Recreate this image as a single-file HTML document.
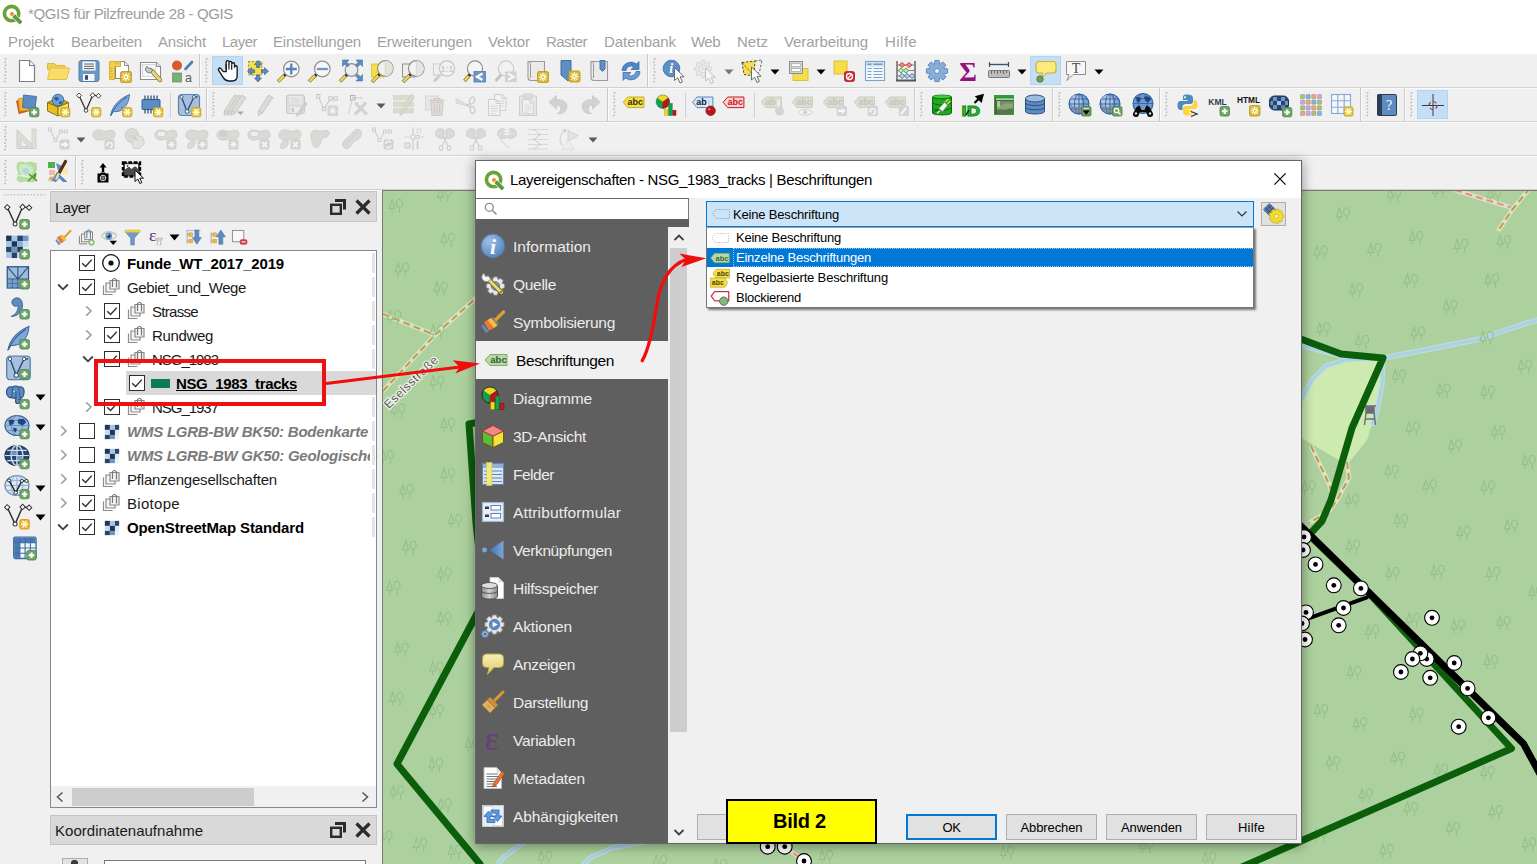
<!DOCTYPE html>
<html><head><meta charset="utf-8"><title>QGIS</title>
<style>
html,body{margin:0;padding:0;}
html{width:1537px;height:864px;overflow:hidden;}
body{width:1537px;height:864px;overflow:hidden;background:#f0f0f0;position:relative;font-family:"Liberation Sans",sans-serif;}
.b{position:absolute;box-sizing:border-box;display:block;}
.t{position:absolute;white-space:nowrap;display:block;}
</style></head><body>
<div class="b" style="left:0px;top:0px;width:1537px;height:54px;background:#ffffff;"></div>
<svg class="b" style="left:2px;top:4px;overflow:visible;" width="20" height="20" viewBox="0 0 24 24"><defs><linearGradient id="qg" x1="0" y1="0" x2="0" y2="1"><stop offset="0" stop-color="#7aad3a"/><stop offset="1" stop-color="#4f9a3a"/></linearGradient></defs><circle cx="11.500" cy="11.500" r="8.600" fill="none" stroke="#6aa336" stroke-width="4.400"/><circle cx="12" cy="12" r="2.400" fill="#ee8a2e"/><path d="M13.500 13.500L22.500 22.500" stroke="#f2f9ea" stroke-width="6.200"/><path d="M14 14L23 23" stroke="#5b9a3c" stroke-width="4.400"/></svg>
<span class="t" style="left:28px;top:4px;font-size:15px;line-height:20px;color:#9b9b9b;letter-spacing:-0.352px;">*QGIS für Pilzfreunde 28 - QGIS</span>
<span class="t" style="left:8px;top:31.5px;font-size:15px;line-height:20px;color:#a1a1a1;letter-spacing:-0.098px;">Projekt</span>
<span class="t" style="left:71px;top:31.5px;font-size:15px;line-height:20px;color:#a1a1a1;letter-spacing:-0.155px;">Bearbeiten</span>
<span class="t" style="left:158px;top:31.5px;font-size:15px;line-height:20px;color:#a1a1a1;letter-spacing:-0.170px;">Ansicht</span>
<span class="t" style="left:222px;top:31.5px;font-size:15px;line-height:20px;color:#a1a1a1;letter-spacing:-0.504px;">Layer</span>
<span class="t" style="left:273px;top:31.5px;font-size:15px;line-height:20px;color:#a1a1a1;letter-spacing:-0.159px;">Einstellungen</span>
<span class="t" style="left:377px;top:31.5px;font-size:15px;line-height:20px;color:#a1a1a1;letter-spacing:-0.133px;">Erweiterungen</span>
<span class="t" style="left:488px;top:31.5px;font-size:15px;line-height:20px;color:#a1a1a1;letter-spacing:-0.088px;">Vektor</span>
<span class="t" style="left:546px;top:31.5px;font-size:15px;line-height:20px;color:#a1a1a1;letter-spacing:-0.530px;">Raster</span>
<span class="t" style="left:604px;top:31.5px;font-size:15px;line-height:20px;color:#a1a1a1;letter-spacing:-0.061px;">Datenbank</span>
<span class="t" style="left:691px;top:31.5px;font-size:15px;line-height:20px;color:#a1a1a1;letter-spacing:-0.523px;">Web</span>
<span class="t" style="left:737px;top:31.5px;font-size:15px;line-height:20px;color:#a1a1a1;letter-spacing:0.040px;">Netz</span>
<span class="t" style="left:784px;top:31.5px;font-size:15px;line-height:20px;color:#a1a1a1;letter-spacing:-0.089px;">Verarbeitung</span>
<span class="t" style="left:885px;top:31.5px;font-size:15px;line-height:20px;color:#a1a1a1;letter-spacing:0.399px;">Hilfe</span>
<div class="b" style="left:0px;top:54px;width:1537px;height:136px;background:#f0f0f0;"></div>
<div class="b" style="left:0px;top:87px;width:1537px;height:1px;background:#d0d0d0;"></div>
<div class="b" style="left:0px;top:88px;width:1537px;height:1px;background:#fafafa;"></div>
<div class="b" style="left:0px;top:121px;width:1537px;height:1px;background:#d0d0d0;"></div>
<div class="b" style="left:0px;top:122px;width:1537px;height:1px;background:#fafafa;"></div>
<div class="b" style="left:0px;top:155px;width:1537px;height:1px;background:#d0d0d0;"></div>
<div class="b" style="left:0px;top:156px;width:1537px;height:1px;background:#fafafa;"></div>
<div class="b" style="left:0px;top:189px;width:1537px;height:1px;background:#d0d0d0;"></div>
<div class="b" style="left:0px;top:190px;width:1537px;height:1px;background:#fafafa;"></div>
<svg class="b" style="left:3px;top:57px;" width="5" height="27" viewBox="0 0 5 27"><rect x="1.8" y="1" width="1.6" height="1.6" fill="#b9b9b9"/><rect x="1.2" y="4.25" width="1.6" height="1.6" fill="#b9b9b9"/><rect x="1.8" y="7.5" width="1.6" height="1.6" fill="#b9b9b9"/><rect x="1.2" y="10.75" width="1.6" height="1.6" fill="#b9b9b9"/><rect x="1.8" y="14" width="1.6" height="1.6" fill="#b9b9b9"/><rect x="1.2" y="17.25" width="1.6" height="1.6" fill="#b9b9b9"/><rect x="1.8" y="20.5" width="1.6" height="1.6" fill="#b9b9b9"/><rect x="1.2" y="23.75" width="1.6" height="1.6" fill="#b9b9b9"/></svg>
<svg class="b" style="left:15px;top:59px;overflow:visible;" width="24" height="24" viewBox="0 0 24 24"><path d="M4.5 1.5h10l5 5v16h-15z" fill="#fff" stroke="#7d7d7d" stroke-width="1.2" stroke-linejoin="round"/><path d="M14.5 1.5v5h5" fill="#f4f4f4" stroke="#7d7d7d" stroke-width="1.1" stroke-linejoin="round"/></svg>
<svg class="b" style="left:46px;top:59px;overflow:visible;" width="24" height="24" viewBox="0 0 24 24"><path d="M1.5 4.5h7l1.5 2h9v4h-17.5z" fill="#f3cf52" stroke="#dcb83c" stroke-width="1"/><path d="M1.5 20.5L4 9h19.5L20.5 20.5z" fill="#f9dc6a" stroke="#e3c044" stroke-width="1" stroke-linejoin="round"/></svg>
<svg class="b" style="left:77px;top:59px;overflow:visible;" width="24" height="24" viewBox="0 0 24 24"><rect x="2" y="1.5" width="20" height="21" rx="2.2" fill="#6c97c5" stroke="#4f7cae" stroke-width="1"/><rect x="5.5" y="2.5" width="13" height="9" fill="#fdfdfd"/><path d="M7 5h10M7 7.3h10M7 9.6h10" stroke="#555" stroke-width="1"/><rect x="6" y="15" width="11.5" height="7" fill="#f4f6f9"/><rect x="8" y="16.2" width="3" height="4.6" fill="#2f4f78"/></svg>
<svg class="b" style="left:108px;top:59px;overflow:visible;" width="24" height="24" viewBox="0 0 24 24"><path d="M7.5 2.5h9l4 4v13h-13z" fill="#fff" stroke="#8a8a8a" stroke-width="1.1"/><path d="M16.5 2.5v4h4" fill="#eee" stroke="#8a8a8a" stroke-width="1"/><path d="M1.5 2.5h11v5h-6v13h-5z" fill="#f5d14e" stroke="#d6b02f" stroke-width="1"/><path d="M2.5 9h2M2.5 12h2M2.5 15h2M2.5 18h2M8 3.5v2M10.5 3.5v2" stroke="#b8941f" stroke-width="0.8"/><rect x="12.5" y="12.5" width="11" height="11" rx="1.6" fill="#d9b634" stroke="#c09c1e" stroke-width="0.9"/><path d="M14.04 18.00L21.96 18.00M15.20 15.20L20.80 20.80M18.00 14.04L18.00 21.96M20.80 15.20L15.20 20.80" stroke="#fffbe6" stroke-width="1.2" stroke-linecap="round"/><circle cx="18" cy="18" r="2.20" fill="#fffbe6"/><circle cx="18" cy="18" r="0.99" fill="#d9b634"/></svg>
<svg class="b" style="left:139px;top:59px;overflow:visible;" width="24" height="24" viewBox="0 0 24 24"><path d="M1.5 3.5h16l4 4v13h-20z" fill="#fff" stroke="#8a8a8a" stroke-width="1.1"/><path d="M17.5 3.5v4h4" fill="#eee" stroke="#8a8a8a" stroke-width="1"/><rect x="3.5" y="5.5" width="13" height="12" fill="#f3f5f8" stroke="#c9d1dc" stroke-width="0.8"/><path d="M13 12L21 21" stroke="#8c7a2a" stroke-width="4.4" stroke-linecap="round"/><path d="M13 12L21 21" stroke="#ead58a" stroke-width="2.8" stroke-linecap="round"/><path d="M8.2 7.2a3.6 3.6 0 1 0 5.2 4.6l-1.2-2.6l-2.6 .3z" fill="#c9c9c9" stroke="#7a7a7a" stroke-width="1"/></svg>
<svg class="b" style="left:170px;top:59px;overflow:visible;" width="24" height="24" viewBox="0 0 24 24"><circle cx="7" cy="6.500" r="5" fill="#d8592c"/><path d="M15.500 10L22 3" stroke="#4f7fb0" stroke-width="2.600" stroke-linecap="round"/><rect x="2.500" y="14" width="9" height="9" fill="#7bae77" stroke="#679c63" stroke-width="0.800"/><text x="18.500" y="23" style="font-family:'Liberation Sans',sans-serif" font-size="12.500" text-anchor="middle" fill="#5a5a5a">a</text></svg>
<div class="b" style="left:199px;top:54px;width:1px;height:33px;background:#c8c8c8;"></div>
<div class="b" style="left:200px;top:54px;width:1px;height:33px;background:#fbfbfb;"></div>
<svg class="b" style="left:204px;top:57px;" width="5" height="27" viewBox="0 0 5 27"><rect x="1.8" y="1" width="1.6" height="1.6" fill="#b9b9b9"/><rect x="1.2" y="4.25" width="1.6" height="1.6" fill="#b9b9b9"/><rect x="1.8" y="7.5" width="1.6" height="1.6" fill="#b9b9b9"/><rect x="1.2" y="10.75" width="1.6" height="1.6" fill="#b9b9b9"/><rect x="1.8" y="14" width="1.6" height="1.6" fill="#b9b9b9"/><rect x="1.2" y="17.25" width="1.6" height="1.6" fill="#b9b9b9"/><rect x="1.8" y="20.5" width="1.6" height="1.6" fill="#b9b9b9"/><rect x="1.2" y="23.75" width="1.6" height="1.6" fill="#b9b9b9"/></svg>
<div class="b" style="left:212px;top:56px;width:31px;height:29px;background:#c3def5;border:1px solid #b4d5f1;"></div>
<svg class="b" style="left:215.5px;top:59px;overflow:visible;" width="24" height="24" viewBox="0 0 24 24"><g transform="translate(-0.600 -2.200) scale(1.100)"><path d="M7.2 13.5L5 10.8c-1-1.3-2.9 0-2 1.6l4 6.4c1.2 2 2.6 3.2 5 3.2h3.2c3 0 4.6-2.2 4.6-5V9.400c0-1.700-2.400-1.700-2.400 0V6.800c0-1.800-2.500-1.800-2.500 0V5.500c0-1.800-2.500-1.800-2.500 0V6.600V4.800c0-1.800-2.600-1.800-2.600 0V13.500z" fill="#fff" stroke="#1a1a1a" stroke-width="1.25" stroke-linejoin="round"/><path d="M9.800 6.500V11.500M12.300 6.500V11.500M14.800 7.500V11.800" stroke="#1a1a1a" stroke-width="1.1"/></g></svg>
<svg class="b" style="left:246px;top:59px;overflow:visible;" width="24" height="24" viewBox="0 0 24 24"><rect x="2.500" y="2.500" width="13.500" height="13.500" fill="#f6de4a" stroke="#6a6a3a" stroke-width="0.700" stroke-dasharray="2 1.500"/><g fill="#5b8cc0" stroke="#3c5f8a" stroke-width="0.700"><path d="M12 1.500L15.500 5.500H13.400V8.500H10.600V5.500H8.500z"/><path d="M12 23L15.500 19H13.400V16H10.600V19H8.500z"/><path d="M1.500 12.200L5.500 8.700V10.800H8.500V13.600H5.500V15.700z"/><path d="M22.500 12.200L18.500 8.700V10.800H15.500V13.600H18.500V15.700z"/></g></svg>
<svg class="b" style="left:277px;top:59px;overflow:visible;" width="24" height="24" viewBox="0 0 24 24"><path d="M7.74 16.16L1.00 22.50" stroke="#8f7f38" stroke-width="3.600"/><path d="M7.30 16.57L1.44 22.09" stroke="#efd75e" stroke-width="2.200"/><circle cx="8.11" cy="15.82" r="1.500" fill="#222"/><circle cx="14.3" cy="10" r="7.8" fill="#f7f7f7" stroke="#909090" stroke-width="1.200"/><path d="M8.800 10H19.800M14.300 4.500V15.500" stroke="#5584bb" stroke-width="2.300"/></svg>
<svg class="b" style="left:308px;top:59px;overflow:visible;" width="24" height="24" viewBox="0 0 24 24"><path d="M7.74 16.16L1.00 22.50" stroke="#8f7f38" stroke-width="3.600"/><path d="M7.30 16.57L1.44 22.09" stroke="#efd75e" stroke-width="2.200"/><circle cx="8.11" cy="15.82" r="1.500" fill="#222"/><circle cx="14.3" cy="10" r="7.8" fill="#f7f7f7" stroke="#909090" stroke-width="1.200"/><path d="M8.800 10H19.800" stroke="#6d97c4" stroke-width="2.300"/></svg>
<svg class="b" style="left:339px;top:59px;overflow:visible;" width="24" height="24" viewBox="0 0 24 24"><path d="M7.20 16.30L1.00 22.50" stroke="#8f7f38" stroke-width="3.600"/><path d="M6.77 16.73L1.42 22.08" stroke="#efd75e" stroke-width="2.200"/><circle cx="7.55" cy="15.95" r="1.500" fill="#222"/><circle cx="12.5" cy="11" r="6.3" fill="#ececec" stroke="#909090" stroke-width="1.200"/><g fill="#5b8cc0" stroke="#4373a8" stroke-width="0.600"><path d="M3.500 1H10L7.800 3.200L10.500 6L8.500 8L5.700 5.200L3.500 7.500z"/><path d="M23.500 1H17L19.200 3.200L16.500 6L18.500 8L21.300 5.200L23.500 7.500z"/><path d="M23.500 22H17L19.200 19.800L16.500 17L18.500 15L21.300 17.800L23.500 15.500z"/></g></svg>
<svg class="b" style="left:370px;top:59px;overflow:visible;" width="24" height="24" viewBox="0 0 24 24"><rect x="1.500" y="5" width="12" height="13" fill="#f6de4a" stroke="#dcc132" stroke-width="0.800"/><path d="M8.98 15.91L2.00 23.00" stroke="#8f7f38" stroke-width="3.600"/><path d="M8.56 16.34L2.42 22.57" stroke="#efd75e" stroke-width="2.200"/><circle cx="9.33" cy="15.56" r="1.500" fill="#222"/><circle cx="15.3" cy="9.5" r="7.8" fill="#f1f1ea" stroke="#909090" stroke-width="1.200"/><path d="M15.300 1.800a7.700 7.700 0 0 1 0 15.400z" fill="#e4e4d4"/><path d="M15.300 1.800V17.200" stroke="#d2d2c2" stroke-width="0.800"/></svg>
<svg class="b" style="left:401px;top:59px;overflow:visible;" width="24" height="24" viewBox="0 0 24 24"><rect x="1.500" y="5" width="12" height="13" fill="#ededed" stroke="#8e8e8e" stroke-width="1"/><path d="M8.98 15.91L2.00 23.00" stroke="#8f7f38" stroke-width="3.600"/><path d="M8.56 16.34L2.42 22.57" stroke="#efd75e" stroke-width="2.200"/><circle cx="9.33" cy="15.56" r="1.500" fill="#222"/><circle cx="15.3" cy="9.5" r="7.8" fill="#f3f3f3" stroke="#909090" stroke-width="1.200"/><path d="M15.300 1.800a7.700 7.700 0 0 1 0 15.400z" fill="#e4e4e4"/><path d="M15.300 1.800V17.200" stroke="#cfcfcf" stroke-width="0.800"/></svg>
<svg class="b" style="left:432px;top:59px;overflow:visible;" width="24" height="24" viewBox="0 0 24 24"><g opacity="0.500"><rect x="1.500" y="5" width="10" height="11" fill="#eee" stroke="#aaa" stroke-width="1"/><path d="M2 22.500L8 16" stroke="#aaa" stroke-width="3"/><circle cx="15" cy="9.500" r="7.600" fill="#f4f4f4" stroke="#999" stroke-width="1.200"/><text x="15" y="13" font-family="Liberation Sans" font-weight="bold" font-size="9" text-anchor="middle" fill="#aaa">1:1</text></g></svg>
<svg class="b" style="left:463px;top:59px;overflow:visible;" width="24" height="24" viewBox="0 0 24 24"><path d="M6.34 16.24L1.50 22.00" stroke="#8f7f38" stroke-width="3.600"/><path d="M5.95 16.70L1.89 21.54" stroke="#efd75e" stroke-width="2.200"/><circle cx="6.66" cy="15.86" r="1.500" fill="#222"/><circle cx="12" cy="9.5" r="7.6" fill="#f4f4f4" stroke="#909090" stroke-width="1.200"/><rect x="11" y="12.500" width="11.500" height="10.500" fill="#6d97c4" stroke="#4f7cae" stroke-width="0.800"/><path d="M19.500 14.500L14 17.750L19.500 21" fill="none" stroke="#fff" stroke-width="2.200"/></svg>
<svg class="b" style="left:494px;top:59px;overflow:visible;" width="24" height="24" viewBox="0 0 24 24"><g opacity="0.420"><path d="M1.500 22L8 15" stroke="#888" stroke-width="3"/><circle cx="12" cy="9.500" r="7.600" fill="#f4f4f4" stroke="#999" stroke-width="1.200"/><rect x="11" y="12.500" width="11.500" height="10.500" fill="#aaa"/><path d="M14 14.500L19.500 17.750L14 21" fill="none" stroke="#fff" stroke-width="2.200"/></g></svg>
<svg class="b" style="left:525px;top:59px;overflow:visible;" width="24" height="24" viewBox="0 0 24 24"><path d="M3 2.500H19.500V21.500H6a3 3 0 0 1-3-3z" fill="#eaeaea" stroke="#9a9a9a" stroke-width="1.1"/><path d="M3 2.500c1.500 0 2.500 .8 2.500 2V19" fill="none" stroke="#9a9a9a" stroke-width="1"/><rect x="12.5" y="12.5" width="11" height="11" rx="1.6" fill="#d9b634" stroke="#c09c1e" stroke-width="0.9"/><path d="M14.04 18.00L21.96 18.00M15.20 15.20L20.80 20.80M18.00 14.04L18.00 21.96M20.80 15.20L15.20 20.80" stroke="#fffbe6" stroke-width="1.2" stroke-linecap="round"/><circle cx="18" cy="18" r="2.20" fill="#fffbe6"/><circle cx="18" cy="18" r="0.99" fill="#d9b634"/></svg>
<svg class="b" style="left:557px;top:59px;overflow:visible;" width="24" height="24" viewBox="0 0 24 24"><path d="M4 1.500H14V19L11 22L4 16z" fill="#5e8ec2" stroke="#3f6ea5" stroke-width="1"/><rect x="12" y="12" width="11" height="11" rx="1.6" fill="#d9b634" stroke="#c09c1e" stroke-width="0.9"/><path d="M13.54 17.50L21.46 17.50M14.70 14.70L20.30 20.30M17.50 13.54L17.50 21.46M20.30 14.70L14.70 20.30" stroke="#fffbe6" stroke-width="1.2" stroke-linecap="round"/><circle cx="17.5" cy="17.5" r="2.20" fill="#fffbe6"/><circle cx="17.5" cy="17.5" r="0.99" fill="#d9b634"/></svg>
<svg class="b" style="left:588px;top:59px;overflow:visible;" width="24" height="24" viewBox="0 0 24 24"><path d="M3 2.500H19.500V21.500H6a3 3 0 0 1-3-3z" fill="#eaeaea" stroke="#9a9a9a" stroke-width="1.1"/><path d="M3 2.500c1.500 0 2.500 .8 2.500 2V19" fill="none" stroke="#9a9a9a" stroke-width="1"/><path d="M12 1.500H17V10L14.500 12.500L12 10z" fill="#5e8ec2" stroke="#3f6ea5" stroke-width="0.9"/></svg>
<svg class="b" style="left:619px;top:59px;overflow:visible;" width="24" height="24" viewBox="0 0 24 24"><path d="M3 11.500a9 9 0 0 1 14.500-6.500L20 2.500V10.500H12L14.800 7.700a5.200 5.200 0 0 0-7.800 3.800z" fill="#4f86c6" stroke="#3c70ae" stroke-width="0.8" stroke-linejoin="round"/><path d="M21 12.500a9 9 0 0 1-14.500 6.500L4 21.500V13.500H12L9.200 16.300a5.200 5.200 0 0 0 7.800-3.800z" fill="#6a9bd3" stroke="#3c70ae" stroke-width="0.8" stroke-linejoin="round"/></svg>
<div class="b" style="left:647px;top:54px;width:1px;height:33px;background:#c8c8c8;"></div>
<div class="b" style="left:648px;top:54px;width:1px;height:33px;background:#fbfbfb;"></div>
<svg class="b" style="left:652px;top:57px;" width="5" height="27" viewBox="0 0 5 27"><rect x="1.8" y="1" width="1.6" height="1.6" fill="#b9b9b9"/><rect x="1.2" y="4.25" width="1.6" height="1.6" fill="#b9b9b9"/><rect x="1.8" y="7.5" width="1.6" height="1.6" fill="#b9b9b9"/><rect x="1.2" y="10.75" width="1.6" height="1.6" fill="#b9b9b9"/><rect x="1.8" y="14" width="1.6" height="1.6" fill="#b9b9b9"/><rect x="1.2" y="17.25" width="1.6" height="1.6" fill="#b9b9b9"/><rect x="1.8" y="20.5" width="1.6" height="1.6" fill="#b9b9b9"/><rect x="1.2" y="23.75" width="1.6" height="1.6" fill="#b9b9b9"/></svg>
<svg class="b" style="left:662px;top:59px;overflow:visible;" width="24" height="24" viewBox="0 0 24 24"><circle cx="9.500" cy="9.500" r="8.300" fill="#5c8fc6" stroke="#4577ae" stroke-width="1"/><text x="9.300" y="14.300" font-family="Liberation Serif" font-style="italic" font-weight="bold" font-size="14" text-anchor="middle" fill="#fff">i</text><g transform="translate(12.500 8.500)"><path d="M0 0V13L3.200 10.200L5.500 15.500L7.900 14.400L5.600 9.300H9.600z" fill="#fff" stroke="#6a6a6a" stroke-width="1" stroke-linejoin="round"/></g></svg>
<svg class="b" style="left:693px;top:59px;overflow:visible;" width="24" height="24" viewBox="0 0 24 24"><g opacity="0.350"><polygon points="9.12,1.04 10.88,1.04 11.89,3.78 13.06,4.27 15.71,3.04 16.96,4.29 15.73,6.94 16.22,8.11 18.96,9.12 18.96,10.88 16.22,11.89 15.73,13.06 16.96,15.71 15.71,16.96 13.06,15.73 11.89,16.22 10.88,18.96 9.12,18.96 8.11,16.22 6.94,15.73 4.29,16.96 3.04,15.71 4.27,13.06 3.78,11.89 1.04,10.88 1.04,9.12 3.78,8.11 4.27,6.94 3.04,4.29 4.29,3.04 6.94,4.27 8.11,3.78" fill="#ddd" stroke="#999" stroke-width="0.9" stroke-linejoin="round"/><circle cx="10" cy="10" r="4" fill="#f4f4f4" stroke="#999" stroke-width="0.9"/><path d="M8.500 7.500L12.500 10L8.500 12.500z" fill="#bbb"/><g transform="translate(12.500 9)"><path d="M0 0V13L3.200 10.200L5.500 15.500L7.900 14.400L5.600 9.300H9.600z" fill="#fff" stroke="#6a6a6a" stroke-width="1" stroke-linejoin="round"/></g></g></svg>
<svg class="b" style="left:724px;top:69px;" width="10" height="6" viewBox="0 0 10 6"><path d="M0.500 0.500H9.500L5 5.500z" fill="#777"/></svg>
<svg class="b" style="left:740px;top:59px;overflow:visible;" width="24" height="24" viewBox="0 0 24 24"><path d="M2 3.500L15 2L14 17L4 15.500z" fill="#f6de4a" stroke="#444" stroke-width="1" stroke-dasharray="2.400 1.600"/><path d="M15 2L22 1L19.500 13L14 17" fill="none" stroke="#666" stroke-width="1" stroke-dasharray="2.400 1.600"/><path d="M2 3.500L14 17" stroke="#444" stroke-width="0.800" stroke-dasharray="2.400 1.600"/><g transform="translate(11.500 8)"><path d="M0 0V13L3.200 10.200L5.500 15.500L7.900 14.400L5.600 9.300H9.600z" fill="#fff" stroke="#6a6a6a" stroke-width="1" stroke-linejoin="round"/></g></svg>
<svg class="b" style="left:770px;top:69px;" width="10" height="6" viewBox="0 0 10 6"><path d="M0.500 0.500H9.500L5 5.500z" fill="#000"/></svg>
<svg class="b" style="left:787px;top:59px;overflow:visible;" width="24" height="24" viewBox="0 0 24 24"><rect x="6" y="9.500" width="15" height="12" fill="#f6de4a" stroke="#dcc132" stroke-width="1"/><rect x="2.500" y="2.500" width="13" height="12" fill="#d4d4d4" stroke="#8e8e8e" stroke-width="1"/><rect x="4.500" y="4.800" width="9" height="2.800" fill="#fff" stroke="#999" stroke-width="0.6"/><rect x="4.500" y="9.600" width="9" height="2.800" fill="#fff" stroke="#999" stroke-width="0.6"/></svg>
<svg class="b" style="left:816px;top:69px;" width="10" height="6" viewBox="0 0 10 6"><path d="M0.500 0.500H9.500L5 5.500z" fill="#000"/></svg>
<svg class="b" style="left:832px;top:59px;overflow:visible;" width="24" height="24" viewBox="0 0 24 24"><rect x="2" y="2" width="13" height="13" fill="#f6de4a" stroke="#dcc132" stroke-width="1"/><rect x="12.500" y="12.500" width="10" height="10" rx="2" fill="#d02a35" stroke="#a81d27" stroke-width="0.8"/><circle cx="17.500" cy="17.500" r="3" fill="none" stroke="#fff" stroke-width="1.300"/><path d="M15.400 19.600L19.600 15.400" stroke="#fff" stroke-width="1.300"/></svg>
<svg class="b" style="left:863px;top:59px;overflow:visible;" width="24" height="24" viewBox="0 0 24 24"><rect x="2.500" y="2.500" width="19" height="19" fill="#f4f8fc" stroke="#7ba3cf" stroke-width="1.100"/><rect x="3" y="3" width="18" height="4.500" fill="#cfe0f1"/><path d="M4.500 5.200H8.500M10.500 5.200H19.500" stroke="#6d9ace" stroke-width="1.600"/><path d="M4.500 9.500H8.500M10.500 9.500H19.500M4.500 12.500H8.500M10.500 12.500H19.500M4.500 15.500H8.500M10.500 15.500H19.500M4.500 18.500H8.500M10.500 18.500H19.500" stroke="#7ba3cf" stroke-width="1.100"/></svg>
<svg class="b" style="left:894px;top:59px;overflow:visible;" width="24" height="24" viewBox="0 0 24 24"><path d="M3 2V21M21 2V21" stroke="#555" stroke-width="1.300"/><path d="M2 21.500H22" stroke="#555" stroke-width="2"/><path d="M3 6H21M3 11.500H21M3 17H21" stroke="#777" stroke-width="0.900"/><g stroke-width="0.900"><path d="M8 3.500L10.800 6L8 8.500L5.200 6z" fill="#f08a8a" stroke="#c0392b"/><path d="M15 3.500L17.800 6L15 8.500L12.200 6z" fill="#f08a8a" stroke="#c0392b"/><path d="M7 9L9.800 11.500L7 14L4.200 11.500z" fill="#bfe3b4" stroke="#4e9a3e"/><path d="M12 9L14.800 11.500L12 14L9.200 11.500z" fill="#bfe3b4" stroke="#4e9a3e"/><path d="M8 14.500L10.800 17L8 19.500L5.200 17z" fill="#b7d0ee" stroke="#3f6ea5"/><path d="M13 14.500L15.800 17L13 19.500L10.200 17z" fill="#b7d0ee" stroke="#3f6ea5"/><path d="M18 14.500L20.800 17L18 19.500L15.200 17z" fill="#b7d0ee" stroke="#3f6ea5"/></g></svg>
<svg class="b" style="left:925px;top:59px;overflow:visible;" width="24" height="24" viewBox="0 0 24 24"><polygon points="18.69,9.35 22.58,9.84 22.58,14.16 18.69,14.65 18.61,14.86 21.01,17.96 17.96,21.01 14.86,18.61 14.65,18.69 14.16,22.58 9.84,22.58 9.35,18.69 9.14,18.61 6.04,21.01 2.99,17.96 5.39,14.86 5.31,14.65 1.42,14.16 1.42,9.84 5.31,9.35 5.39,9.14 2.99,6.04 6.04,2.99 9.14,5.39 9.35,5.31 9.84,1.42 14.16,1.42 14.65,5.31 14.86,5.39 17.96,2.99 21.01,6.04 18.61,9.14" fill="#86acda" stroke="#5a86bd" stroke-width="0.9" stroke-linejoin="round"/><circle cx="12" cy="12" r="2.500" fill="#f0f0f0" stroke="#5a86bd" stroke-width="0.900"/></svg>
<svg class="b" style="left:956px;top:59px;overflow:visible;" width="24" height="24" viewBox="0 0 24 24"><text x="12" y="21.500" font-family="Liberation Serif" font-weight="bold" font-size="27" text-anchor="middle" fill="#93117e">Σ</text></svg>
<svg class="b" style="left:987px;top:59px;overflow:visible;" width="24" height="24" viewBox="0 0 24 24"><path d="M2.500 5.500H21.500" stroke="#35566f" stroke-width="1.400"/><path d="M2.500 3V8M21.500 3V8" stroke="#35566f" stroke-width="1.200"/><rect x="1.500" y="11.500" width="21" height="7" rx="0.800" fill="#bdbdbd" stroke="#7a7a7a" stroke-width="1"/><path d="M4.500 12V15M7.500 12V14M10.500 12V15M13.500 12V14M16.500 12V15M19.500 12V14" stroke="#666" stroke-width="1"/></svg>
<svg class="b" style="left:1017px;top:69px;" width="10" height="6" viewBox="0 0 10 6"><path d="M0.500 0.500H9.500L5 5.500z" fill="#000"/></svg>
<div class="b" style="left:1030px;top:56px;width:31px;height:29px;background:#c3def5;border:1px solid #b4d5f1;"></div>
<svg class="b" style="left:1033.5px;top:59px;overflow:visible;" width="24" height="24" viewBox="0 0 24 24"><path d="M5 2.500H19a3 3 0 0 1 3 3V11a3 3 0 0 1-3 3H12.500L7.500 19.500L8.500 14H5a3 3 0 0 1-3-3V5.500a3 3 0 0 1 3-3z" fill="#fbea7e" stroke="#c9b23a" stroke-width="1.100" stroke-linejoin="round"/><circle cx="6" cy="20" r="3.200" fill="#6f9e5c" stroke="#4e7c3e" stroke-width="0.900"/></svg>
<svg class="b" style="left:1064px;top:59px;overflow:visible;" width="24" height="24" viewBox="0 0 24 24"><path d="M2.500 2.500H21.500V15.500H9L3 21.500L5 15.500H2.500z" fill="#f7f7f7" stroke="#8e8e8e" stroke-width="1" stroke-linejoin="round"/><text x="12" y="13.500" font-family="Liberation Serif" font-size="14" text-anchor="middle" fill="#4a4a4a">T</text></svg>
<svg class="b" style="left:1094px;top:69px;" width="10" height="6" viewBox="0 0 10 6"><path d="M0.500 0.500H9.500L5 5.500z" fill="#000"/></svg>
<svg class="b" style="left:3px;top:91px;" width="5" height="27" viewBox="0 0 5 27"><rect x="1.8" y="1" width="1.6" height="1.6" fill="#b9b9b9"/><rect x="1.2" y="4.25" width="1.6" height="1.6" fill="#b9b9b9"/><rect x="1.8" y="7.5" width="1.6" height="1.6" fill="#b9b9b9"/><rect x="1.2" y="10.75" width="1.6" height="1.6" fill="#b9b9b9"/><rect x="1.8" y="14" width="1.6" height="1.6" fill="#b9b9b9"/><rect x="1.2" y="17.25" width="1.6" height="1.6" fill="#b9b9b9"/><rect x="1.8" y="20.5" width="1.6" height="1.6" fill="#b9b9b9"/><rect x="1.2" y="23.75" width="1.6" height="1.6" fill="#b9b9b9"/></svg>
<svg class="b" style="left:15px;top:93px;overflow:visible;" width="24" height="24" viewBox="0 0 24 24"><path d="M1.500 8L11 5.500L13.500 18L4 20.500z" fill="#d9622b" stroke="#b54d1d" stroke-width="0.800"/><path d="M3.500 5.500L14 4.500L14.500 17L4.500 18z" fill="#f2b62c" stroke="#cf971a" stroke-width="0.800"/><path d="M8.500 2L21.500 3.500L20 16L7.500 14.500z" fill="#5d8cc2" stroke="#3f6ea5" stroke-width="0.900"/><rect x="14.6" y="14.6" width="9.2" height="9.2" rx="1.8" fill="#6fa46a" stroke="#55894f" stroke-width="0.9"/><path d="M16.44 19.2H21.96M19.2 16.44V21.96" stroke="#fff" stroke-width="2.1"/></svg>
<svg class="b" style="left:46px;top:93px;overflow:visible;" width="24" height="24" viewBox="0 0 24 24"><path d="M1.500 9.500L12 14V23L1.500 18z" fill="#e9bf26" stroke="#8c7414" stroke-width="1"/><path d="M12 14L22.500 9.500V18L12 23z" fill="#f7e46a" stroke="#8c7414" stroke-width="1"/><path d="M1.500 9.500L12 5L22.500 9.500L12 14z" fill="#c9a31b" stroke="#8c7414" stroke-width="1"/><circle cx="12" cy="7" r="5.800" fill="#6f9fd6" stroke="#3c6aa0" stroke-width="0.900"/><path d="M8 5c1-1 3-1.500 4-.5s1 2.500-.5 3s-2.500-.5-3.500-2.500zM13.500 8.500c1-.5 2.500 0 2.500 1s-1.500 2-2.500 1.500s-.800-2 0-2.500z" fill="#2d5a94"/><rect x="14.6" y="14.6" width="9.2" height="9.2" rx="1.6" fill="#e8c53c" stroke="#c7a322" stroke-width="0.9"/><path d="M16.26 19.20L22.14 19.20M17.73 16.65L20.67 21.75M20.67 16.65L17.73 21.75" stroke="#fffbe6" stroke-width="1.5" stroke-linecap="round"/></svg>
<svg class="b" style="left:77px;top:93px;overflow:visible;" width="24" height="24" viewBox="0 0 24 24"><path d="M2 2.500L9 17.500L15.700 2.200L21.500 2.800" fill="none" stroke="#333" stroke-width="1.300" stroke-linejoin="round"/><rect x="0.3" y="0.8" width="3.4" height="3.4" fill="#fff" stroke="#333" stroke-width="0.900" transform="rotate(45 2 2.5)"/><rect x="14" y="0.5" width="3.4" height="3.4" fill="#fff" stroke="#333" stroke-width="0.900" transform="rotate(45 15.7 2.2)"/><rect x="19.8" y="1.1" width="3.4" height="3.4" fill="#fff" stroke="#333" stroke-width="0.900" transform="rotate(45 21.5 2.8)"/><circle cx="9" cy="17.500" r="1.800" fill="#fff" stroke="#333" stroke-width="0.900"/><rect x="14.6" y="14.6" width="9.2" height="9.2" rx="1.6" fill="#e8c53c" stroke="#c7a322" stroke-width="0.9"/><path d="M16.26 19.20L22.14 19.20M17.73 16.65L20.67 21.75M20.67 16.65L17.73 21.75" stroke="#fffbe6" stroke-width="1.5" stroke-linecap="round"/></svg>
<svg class="b" style="left:108px;top:93px;overflow:visible;" width="24" height="24" viewBox="0 0 24 24"><path d="M2.500 23C4 15 8 7.500 21.500 1.500C21 8 19 12 16.500 14L13 14.500L15 16C12 18.500 8 19 5.500 18.500z" fill="#7ea6d6" stroke="#3f6ea5" stroke-width="0.900" stroke-linejoin="round"/><path d="M3 22.500C6 15 11 9 19 4" fill="none" stroke="#2f5f96" stroke-width="0.900"/><rect x="14.6" y="14.6" width="9.2" height="9.2" rx="1.6" fill="#e8c53c" stroke="#c7a322" stroke-width="0.9"/><path d="M16.26 19.20L22.14 19.20M17.73 16.65L20.67 21.75M20.67 16.65L17.73 21.75" stroke="#fffbe6" stroke-width="1.5" stroke-linecap="round"/></svg>
<svg class="b" style="left:139px;top:93px;overflow:visible;" width="24" height="24" viewBox="0 0 24 24"><rect x="3" y="6.500" width="18" height="10" rx="1" fill="#5d8cc2" stroke="#345f95" stroke-width="1"/><path d="M6 2.500V6.500M9 2.500V6.500M12 2.500V6.500M15 2.500V6.500M18 2.500V6.500M6 16.500V20.500M9 16.500V20.500M12 16.500V20.500M15 16.500V20.500M18 16.500V20.500" stroke="#27466e" stroke-width="1.200"/><rect x="14.6" y="14.6" width="9.2" height="9.2" rx="1.6" fill="#e8c53c" stroke="#c7a322" stroke-width="0.9"/><path d="M16.26 19.20L22.14 19.20M17.73 16.65L20.67 21.75M20.67 16.65L17.73 21.75" stroke="#fffbe6" stroke-width="1.5" stroke-linecap="round"/></svg>
<div class="b" style="left:170px;top:93px;width:1px;height:25px;background:#d0d0d0;"></div>
<svg class="b" style="left:177px;top:93px;overflow:visible;" width="24" height="24" viewBox="0 0 24 24"><rect x="1.500" y="1.500" width="21" height="21" rx="3" fill="#a8c0de" stroke="#5c82b0" stroke-width="1.200"/><path d="M4.500 4L10 18.500L17 4L20.500 4" fill="none" stroke="#2e4e78" stroke-width="1.300"/><circle cx="10" cy="18.500" r="1.900" fill="#fff" stroke="#2e4e78" stroke-width="0.900"/><circle cx="17" cy="4" r="1.500" fill="#fff" stroke="#2e4e78" stroke-width="0.800"/><circle cx="4.500" cy="4" r="1.500" fill="#fff" stroke="#2e4e78" stroke-width="0.800"/><rect x="14.6" y="14.6" width="9.2" height="9.2" rx="1.6" fill="#e8c53c" stroke="#c7a322" stroke-width="0.9"/><path d="M16.26 19.20L22.14 19.20M17.73 16.65L20.67 21.75M20.67 16.65L17.73 21.75" stroke="#fffbe6" stroke-width="1.5" stroke-linecap="round"/></svg>
<div class="b" style="left:206px;top:88px;width:1px;height:33px;background:#c8c8c8;"></div>
<div class="b" style="left:207px;top:88px;width:1px;height:33px;background:#fbfbfb;"></div>
<svg class="b" style="left:211px;top:91px;" width="5" height="27" viewBox="0 0 5 27"><rect x="1.8" y="1" width="1.6" height="1.6" fill="#b9b9b9"/><rect x="1.2" y="4.25" width="1.6" height="1.6" fill="#b9b9b9"/><rect x="1.8" y="7.5" width="1.6" height="1.6" fill="#b9b9b9"/><rect x="1.2" y="10.75" width="1.6" height="1.6" fill="#b9b9b9"/><rect x="1.8" y="14" width="1.6" height="1.6" fill="#b9b9b9"/><rect x="1.2" y="17.25" width="1.6" height="1.6" fill="#b9b9b9"/><rect x="1.8" y="20.5" width="1.6" height="1.6" fill="#b9b9b9"/><rect x="1.2" y="23.75" width="1.6" height="1.6" fill="#b9b9b9"/></svg>
<svg class="b" style="left:222px;top:93px;overflow:visible;" width="24" height="24" viewBox="0 0 24 24"><g transform="translate(-3 0)"><path d="M15.500 2L20 4.500L9.500 20L5 22.500L5.500 17.500z" fill="#dcdad6" stroke="#c4c1bc" stroke-width="0.800" stroke-linejoin="round"/><path d="M5.500 17.500L9.500 20" stroke="#c4c1bc" stroke-width="0.800"/></g><g transform="translate(0.500 0)"><path d="M15.500 2L20 4.500L9.500 20L5 22.500L5.500 17.500z" fill="#dcdad6" stroke="#c4c1bc" stroke-width="0.800" stroke-linejoin="round"/><path d="M5.500 17.500L9.500 20" stroke="#c4c1bc" stroke-width="0.800"/></g><g transform="translate(4 0)"><path d="M15.500 2L20 4.500L9.500 20L5 22.500L5.500 17.500z" fill="#dcdad6" stroke="#c4c1bc" stroke-width="0.800" stroke-linejoin="round"/><path d="M5.500 17.500L9.500 20" stroke="#c4c1bc" stroke-width="0.800"/></g><path d="M15 18.500H22L18.500 22z" fill="#a8a8a8"/></svg>
<svg class="b" style="left:253px;top:93px;overflow:visible;" width="24" height="24" viewBox="0 0 24 24"><g transform="translate(0 0)"><path d="M15.500 2L20 4.500L9.500 20L5 22.500L5.500 17.500z" fill="#dcdad6" stroke="#c4c1bc" stroke-width="0.800" stroke-linejoin="round"/><path d="M5.500 17.500L9.500 20" stroke="#c4c1bc" stroke-width="0.800"/></g></svg>
<svg class="b" style="left:284px;top:93px;overflow:visible;" width="24" height="24" viewBox="0 0 24 24"><rect x="2.500" y="2" width="18" height="18.500" rx="2" fill="#dcdcdc" stroke="#c6c6c6" stroke-width="1"/><rect x="5.500" y="3" width="12" height="7.500" fill="#ececec"/><path d="M7 5H16M7 7H16M7 9H16" stroke="#cfcfcf" stroke-width="0.800"/><rect x="6" y="14" width="10" height="6" fill="#ececec"/><rect x="7.500" y="15" width="2.500" height="4" fill="#cacaca"/><path d="M21.500 9.500L23 11L15 22L12.500 23L13 20.500z" fill="#d6d3cd" stroke="#c4c1bc" stroke-width="0.700"/></svg>
<svg class="b" style="left:315px;top:93px;overflow:visible;" width="24" height="24" viewBox="0 0 24 24"><path d="M3 3L9 16L15.500 5.500L20.500 5.500" fill="none" stroke="#cfcfcf" stroke-width="1.300"/><g fill="#ededed" stroke="#c9c9c9" stroke-width="1"><rect x="1.500" y="1.500" width="3.400" height="3.400"/><rect x="13.800" y="3.800" width="3.400" height="3.400"/><rect x="19" y="3.800" width="3.400" height="3.400"/><rect x="7.300" y="14.300" width="3.400" height="3.400"/></g><rect x="12.500" y="12.500" width="10.500" height="10.500" rx="1.500" fill="#d4d4d4"/><circle cx="17.750" cy="17.750" r="2.200" fill="#f2f2f2"/><path d="M17.750 14V21.500M14 17.750H21.500M15.100 15.100L20.400 20.400M20.400 15.100L15.100 20.400" stroke="#f2f2f2" stroke-width="1"/></svg>
<svg class="b" style="left:347px;top:93px;overflow:visible;" width="24" height="24" viewBox="0 0 24 24"><path d="M5.500 5L1.500 21" stroke="#cfcfcf" stroke-width="1"/><path d="M5.500 5H16" stroke="#cfcfcf" stroke-width="1.200"/><rect x="3.500" y="2.500" width="4.500" height="4.500" fill="#f0f0f0" stroke="#c9a9a9" stroke-width="1"/><circle cx="5.750" cy="4.750" r="1" fill="#d9b3b3"/><path d="M8 21.500L19 9.500" stroke="#cfcfcf" stroke-width="3"/><path d="M9 11L20 21.500" stroke="#d6d3cd" stroke-width="3.200"/><path d="M7.500 9.500L12 9L9 13z" fill="#d0d0d0"/></svg>
<svg class="b" style="left:376px;top:103px;" width="10" height="6" viewBox="0 0 10 6"><path d="M0.500 0.500H9.500L5 5.500z" fill="#5a5a5a"/></svg>
<svg class="b" style="left:392px;top:93px;overflow:visible;" width="24" height="24" viewBox="0 0 24 24"><g fill="#d9dccb" stroke="#cfd2c2" stroke-width="0.600"><rect x="1.500" y="2.500" width="20" height="4.500"/><rect x="1.500" y="9" width="20" height="4.500"/><rect x="1.500" y="15.500" width="20" height="4.500"/></g><path d="M19.500 1.500L22 3.500L11 20.500L8 22.500L8.500 19z" fill="#dedbd5" stroke="#c9c6c0" stroke-width="0.800"/></svg>
<svg class="b" style="left:423px;top:93px;overflow:visible;" width="24" height="24" viewBox="0 0 24 24"><rect x="2.500" y="3" width="13" height="14" fill="#e9e6e3" stroke="#d9d5d1" stroke-width="1"/><path d="M6.500 7.500H21.500" stroke="#d0c8c6" stroke-width="1.600"/><path d="M11 7V5.500H17V7" fill="none" stroke="#d0c8c6" stroke-width="1.200"/><path d="M8 9.500H20L19 22.500H9z" fill="#e2dad8" stroke="#d0c8c6" stroke-width="1"/><path d="M11.500 11.500V20.500M14 11.500V20.500M16.500 11.500V20.500" stroke="#d0c8c6" stroke-width="1"/></svg>
<svg class="b" style="left:454px;top:93px;overflow:visible;" width="24" height="24" viewBox="0 0 24 24"><path d="M2 6L16 13.500M2 9.500L15 12" stroke="#d4d4d4" stroke-width="1.300" fill="none"/><path d="M2 5.500L14 12.800L2 10z" fill="#e2e2e2" stroke="#d0d0d0" stroke-width="0.800"/><ellipse cx="18" cy="7.500" rx="2.300" ry="3.600" transform="rotate(25 18 7.500)" fill="none" stroke="#cfcfcf" stroke-width="1.400"/><ellipse cx="18.500" cy="17" rx="2.300" ry="3.600" transform="rotate(-15 18.500 17)" fill="none" stroke="#cfcfcf" stroke-width="1.400"/><path d="M13 12L17.500 10.500M13.500 12.800L18 14" stroke="#cfcfcf" stroke-width="1.300"/></svg>
<svg class="b" style="left:485px;top:93px;overflow:visible;" width="24" height="24" viewBox="0 0 24 24"><g transform="translate(9 1)"><path d="M0.500 0.500H8L12 4.500V16.500H0.500z" fill="#f1f1f1" stroke="#cdcdcd" stroke-width="1"/><path d="M8 0.500V4.500H12" fill="none" stroke="#cdcdcd" stroke-width="0.900"/><path d="M2.500 7H10M2.500 9.500H10M2.500 12H10M2.500 14.500H7" stroke="#d4d4d4" stroke-width="0.900"/></g><g transform="translate(3 6)"><path d="M0.500 0.500H8L12 4.500V16.500H0.500z" fill="#f1f1f1" stroke="#cdcdcd" stroke-width="1"/><path d="M8 0.500V4.500H12" fill="none" stroke="#cdcdcd" stroke-width="0.900"/><path d="M2.500 7H10M2.500 9.500H10M2.500 12H10M2.500 14.500H7" stroke="#d4d4d4" stroke-width="0.900"/></g></svg>
<svg class="b" style="left:516px;top:93px;overflow:visible;" width="24" height="24" viewBox="0 0 24 24"><rect x="3.500" y="3" width="17" height="19.500" fill="#e6e6e6" stroke="#cdcdcd" stroke-width="1"/><rect x="8" y="1" width="8" height="4" fill="#dcdcdc" stroke="#cdcdcd" stroke-width="0.900"/><g transform="translate(6 6) scale(0.950 0.900)"><path d="M0.500 0.500H8L12 4.500V16.500H0.500z" fill="#f1f1f1" stroke="#cdcdcd" stroke-width="1"/><path d="M8 0.500V4.500H12" fill="none" stroke="#cdcdcd" stroke-width="0.900"/><path d="M2.500 7H10M2.500 9.500H10M2.500 12H10M2.500 14.500H7" stroke="#d4d4d4" stroke-width="0.900"/></g></svg>
<svg class="b" style="left:547px;top:93px;overflow:visible;" width="24" height="24" viewBox="0 0 24 24"><path d="M2 9L9.500 2.500V6.500C17 6.500 21 10 19.500 15.500C18.500 19.500 14 21.500 10.500 20.500C15 19 15.500 12 9.500 12V16z" fill="#d2d2d2" stroke="#c6c6c6" stroke-width="0.800" stroke-linejoin="round"/></svg>
<svg class="b" style="left:578px;top:93px;overflow:visible;" width="24" height="24" viewBox="0 0 24 24"><path d="M22 9L14.500 2.500V6.500C7 6.500 3 10 4.500 15.500C5.500 19.500 10 21.500 13.500 20.500C9 19 8.500 12 14.500 12V16z" fill="#d2d2d2" stroke="#c6c6c6" stroke-width="0.800" stroke-linejoin="round"/></svg>
<div class="b" style="left:607px;top:88px;width:1px;height:33px;background:#c8c8c8;"></div>
<div class="b" style="left:608px;top:88px;width:1px;height:33px;background:#fbfbfb;"></div>
<svg class="b" style="left:612px;top:91px;" width="5" height="27" viewBox="0 0 5 27"><rect x="1.8" y="1" width="1.6" height="1.6" fill="#b9b9b9"/><rect x="1.2" y="4.25" width="1.6" height="1.6" fill="#b9b9b9"/><rect x="1.8" y="7.5" width="1.6" height="1.6" fill="#b9b9b9"/><rect x="1.2" y="10.75" width="1.6" height="1.6" fill="#b9b9b9"/><rect x="1.8" y="14" width="1.6" height="1.6" fill="#b9b9b9"/><rect x="1.2" y="17.25" width="1.6" height="1.6" fill="#b9b9b9"/><rect x="1.8" y="20.5" width="1.6" height="1.6" fill="#b9b9b9"/><rect x="1.2" y="23.75" width="1.6" height="1.6" fill="#b9b9b9"/></svg>
<svg class="b" style="left:622px;top:93px;overflow:visible;" width="24" height="24" viewBox="0 0 24 24"><path d="M1.2 9.3L5.7 4H22V14.6H5.7z" fill="#f6de4a" stroke="#c9ad22" stroke-width="1" stroke-linejoin="round"/><text x="13.2" y="12.27" font-family="Liberation Sans" font-weight="bold" font-size="9" text-anchor="middle" fill="#34300f">abc</text></svg>
<svg class="b" style="left:654px;top:93px;overflow:visible;" width="24" height="24" viewBox="0 0 24 24"><circle cx="8.8" cy="8.7" r="6.8" fill="#12a04c"/><path d="M8.8 8.7L3.23 4.80A6.8 6.8 0 0 1 14.37 4.80z" fill="#f4d81e"/><path d="M8.8 8.7L14.37 4.80A6.8 6.8 0 0 1 8.21 15.47z" fill="#b5171b"/><circle cx="8.8" cy="8.7" r="6.8" fill="none" stroke="#333" stroke-width="0.500" opacity="0.600"/><rect x="10.200" y="16.400" width="3.600" height="6" fill="#f4d81e" stroke="#c7ad12" stroke-width="0.500"/><rect x="14.600" y="10.500" width="3.600" height="11.900" fill="#12a04c" stroke="#0a7a38" stroke-width="0.500"/><rect x="18.800" y="17.300" width="3.200" height="5.100" fill="#b5171b" stroke="#8c1014" stroke-width="0.500"/></svg>
<div class="b" style="left:685px;top:93px;width:1px;height:25px;background:#d0d0d0;"></div>
<svg class="b" style="left:692px;top:93px;overflow:visible;" width="24" height="24" viewBox="0 0 24 24"><path d="M0.5 9.3L5 4H20.9V14.6H5z" fill="#d4e6f7" stroke="#4f8ccc" stroke-width="1" stroke-linejoin="round"/><text x="9.5" y="12.27" font-family="Liberation Sans" font-weight="bold" font-size="9" text-anchor="middle" fill="#1a1a2a">ab</text><path d="M17 7V13" stroke="#fff" stroke-width="2.400"/><path d="M17 7V13" stroke="#7aa6d6" stroke-width="0.900"/><circle cx="18.600" cy="17.800" r="4.700" fill="#b5171b" stroke="#8c1014" stroke-width="0.800"/><circle cx="17.200" cy="16.200" r="1.300" fill="#e06a6a"/></svg>
<svg class="b" style="left:722px;top:93px;overflow:visible;" width="24" height="24" viewBox="0 0 24 24"><path d="M1.2 9.3L5.7 4H21.9V14.6H5.7z" fill="#fbd5d5" stroke="#c8161d" stroke-width="1" stroke-linejoin="round"/><text x="13.15" y="12.27" font-family="Liberation Sans" font-weight="bold" font-size="9" text-anchor="middle" fill="#c8161d">abc</text></svg>
<div class="b" style="left:754px;top:93px;width:1px;height:25px;background:#d0d0d0;"></div>
<svg class="b" style="left:761px;top:93px;overflow:visible;" width="24" height="24" viewBox="0 0 24 24"><path d="M0.3 9.3L4.8 4H20.5V14.6H4.8z" fill="#dddcd2" stroke="#cfcec3" stroke-width="1" stroke-linejoin="round"/><text x="9.5" y="12.27" font-family="Liberation Sans" font-weight="bold" font-size="9" text-anchor="middle" fill="#c6c5ba">ab</text><path d="M17.500 7V14" stroke="#eee" stroke-width="2.200"/><circle cx="18.500" cy="18" r="4.500" fill="#d3d3d3"/></svg>
<svg class="b" style="left:792px;top:93px;overflow:visible;" width="24" height="24" viewBox="0 0 24 24"><path d="M0.3 9.3L4.8 4H20.5V14.6H4.8z" fill="#dddcd2" stroke="#cfcec3" stroke-width="1" stroke-linejoin="round"/><text x="12" y="12.27" font-family="Liberation Sans" font-weight="bold" font-size="9" text-anchor="middle" fill="#c6c5ba">abc</text><path d="M6 19.500C9 15 17 15 20.500 19.500C17 23 9 23 6 19.500z" fill="#f2f2f2" stroke="#cfcfcf" stroke-width="0.900"/><circle cx="13" cy="19.300" r="2" fill="#cfcfcf"/></svg>
<svg class="b" style="left:823px;top:93px;overflow:visible;" width="24" height="24" viewBox="0 0 24 24"><path d="M0.3 9.3L4.8 4H20.5V14.6H4.8z" fill="#dddcd2" stroke="#cfcec3" stroke-width="1" stroke-linejoin="round"/><text x="12" y="12.27" font-family="Liberation Sans" font-weight="bold" font-size="9" text-anchor="middle" fill="#c6c5ba">abc</text><rect x="13.700" y="12.800" width="10.200" height="10.200" rx="1.500" fill="#d3d3d3"/><path d="M15 16.700H18.700V14.400L22.700 17.900L18.700 21.400V19.100H15z" fill="#f6f6f6"/></svg>
<svg class="b" style="left:854px;top:93px;overflow:visible;" width="24" height="24" viewBox="0 0 24 24"><path d="M0.3 9.3L4.8 4H20.5V14.6H4.8z" fill="#dddcd2" stroke="#cfcec3" stroke-width="1" stroke-linejoin="round"/><text x="12" y="12.27" font-family="Liberation Sans" font-weight="bold" font-size="9" text-anchor="middle" fill="#c6c5ba">abc</text><rect x="13.700" y="12.800" width="10.200" height="10.200" rx="1.500" fill="#d3d3d3"/><path d="M16.200 18.400a2.600 2.600 0 1 1 2.600 2.600" fill="none" stroke="#f6f6f6" stroke-width="1.500"/><path d="M14.500 17.900H17.900L16.200 20.200z" fill="#f6f6f6"/></svg>
<svg class="b" style="left:885px;top:93px;overflow:visible;" width="24" height="24" viewBox="0 0 24 24"><path d="M0.3 9.3L4.8 4H20.5V14.6H4.8z" fill="#dddcd2" stroke="#cfcec3" stroke-width="1" stroke-linejoin="round"/><text x="12" y="12.27" font-family="Liberation Sans" font-weight="bold" font-size="9" text-anchor="middle" fill="#c6c5ba">abc</text><rect x="13.700" y="12.800" width="10.200" height="10.200" rx="1.500" fill="#d3d3d3"/><path d="M15.700 21.400L21.200 14.900" stroke="#f6f6f6" stroke-width="2.200"/></svg>
<div class="b" style="left:914px;top:88px;width:1px;height:33px;background:#c8c8c8;"></div>
<div class="b" style="left:915px;top:88px;width:1px;height:33px;background:#fbfbfb;"></div>
<svg class="b" style="left:919px;top:91px;" width="5" height="27" viewBox="0 0 5 27"><rect x="1.8" y="1" width="1.6" height="1.6" fill="#b9b9b9"/><rect x="1.2" y="4.25" width="1.6" height="1.6" fill="#b9b9b9"/><rect x="1.8" y="7.5" width="1.6" height="1.6" fill="#b9b9b9"/><rect x="1.2" y="10.75" width="1.6" height="1.6" fill="#b9b9b9"/><rect x="1.8" y="14" width="1.6" height="1.6" fill="#b9b9b9"/><rect x="1.2" y="17.25" width="1.6" height="1.6" fill="#b9b9b9"/><rect x="1.8" y="20.5" width="1.6" height="1.6" fill="#b9b9b9"/><rect x="1.2" y="23.75" width="1.6" height="1.6" fill="#b9b9b9"/></svg>
<svg class="b" style="left:930px;top:93px;overflow:visible;" width="24" height="24" viewBox="0 0 24 24"><path d="M2.500 4C2.500 1.500 21.500 1.500 21.500 4V20C21.500 22.500 2.500 22.500 2.500 20z" fill="#1fa81f" stroke="#0c6a10" stroke-width="1"/><path d="M2.500 4C2.500 6.500 21.500 6.500 21.500 4" fill="none" stroke="#0c6a10" stroke-width="0.900"/><path d="M3 3.500C8 1.800 16 1.800 21 3.500C16 5.500 8 5.500 3 3.500z" fill="#43c943"/><path d="M2.500 10C8 13 16 12.500 21.500 9.500M2.500 15.500C8 18.500 16 18 21.500 15" fill="none" stroke="#0a5a0e" stroke-width="0.900"/><path d="M3 19.500C8 16.500 12 15.500 15 12.500" stroke="#0a5a0e" stroke-width="0.800" fill="none"/><path d="M9 15.500L14.500 9.500L17.500 12L12.500 18.500z" fill="#f6f6f6" stroke="#9a9a9a" stroke-width="0.600"/><path d="M15.500 9L18.500 6M17.500 11L20.500 8" stroke="#e6d95a" stroke-width="1.400"/><path d="M10 17.500L7 20.500" stroke="#ddd" stroke-width="1.600"/></svg>
<svg class="b" style="left:961px;top:93px;overflow:visible;" width="24" height="24" viewBox="0 0 24 24"><text x="0.500" y="22.500" font-family="Liberation Sans" font-weight="bold" font-size="15.500" fill="#35c535" stroke="#0e8a12" stroke-width="1" textLength="18.500" lengthAdjust="spacingAndGlyphs">ID</text><path d="M5 22L8 17" stroke="#0a0a0a" stroke-width="1.400"/><path d="M13.500 10L19.500 4" stroke="#000" stroke-width="2.200"/><path d="M23 0.800L13.800 3.200L20.600 10z" fill="#000"/></svg>
<svg class="b" style="left:992px;top:93px;overflow:visible;" width="24" height="24" viewBox="0 0 24 24"><rect x="2.500" y="2.500" width="19" height="19" fill="#3f6b3a" stroke="#2b8a2b" stroke-width="0.800"/><rect x="2.500" y="2.500" width="19" height="2.200" fill="#27a527"/><rect x="4" y="5.500" width="17.500" height="1.200" fill="#e9f5e9"/><rect x="5" y="8" width="16" height="13" fill="#6f8f62"/><path d="M5 14C8 11 10 13 12 11C15 9 18 12 21 10V21H5z" fill="#8aa57c"/><path d="M5 17C9 15 12 18 16 16C18 15 20 16 21 15.500V21H5z" fill="#55754a"/><rect x="5" y="8" width="3" height="6" fill="#c9d6c0" opacity="0.700"/></svg>
<svg class="b" style="left:1023px;top:93px;overflow:visible;" width="24" height="24" viewBox="0 0 24 24"><path d="M2.500 5.500V18.500C2.500 21.800 21.500 21.800 21.500 18.500V5.500" fill="#5d8cc2" stroke="#2c4f7c" stroke-width="1"/><ellipse cx="12" cy="5.500" rx="9.500" ry="3.500" fill="#9dbde0" stroke="#2c4f7c" stroke-width="1"/><path d="M2.500 10C2.500 13.300 21.500 13.300 21.500 10M2.500 14.300C2.500 17.600 21.500 17.600 21.500 14.300" fill="none" stroke="#2c4f7c" stroke-width="1"/></svg>
<div class="b" style="left:1052px;top:88px;width:1px;height:33px;background:#c8c8c8;"></div>
<div class="b" style="left:1053px;top:88px;width:1px;height:33px;background:#fbfbfb;"></div>
<svg class="b" style="left:1057px;top:91px;" width="5" height="27" viewBox="0 0 5 27"><rect x="1.8" y="1" width="1.6" height="1.6" fill="#b9b9b9"/><rect x="1.2" y="4.25" width="1.6" height="1.6" fill="#b9b9b9"/><rect x="1.8" y="7.5" width="1.6" height="1.6" fill="#b9b9b9"/><rect x="1.2" y="10.75" width="1.6" height="1.6" fill="#b9b9b9"/><rect x="1.8" y="14" width="1.6" height="1.6" fill="#b9b9b9"/><rect x="1.2" y="17.25" width="1.6" height="1.6" fill="#b9b9b9"/><rect x="1.8" y="20.5" width="1.6" height="1.6" fill="#b9b9b9"/><rect x="1.2" y="23.75" width="1.6" height="1.6" fill="#b9b9b9"/></svg>
<svg class="b" style="left:1068px;top:93px;overflow:visible;" width="24" height="24" viewBox="0 0 24 24"><circle cx="11" cy="11" r="10" fill="#7ea3d4" stroke="#2f5f9e" stroke-width="1.100"/><circle cx="8" cy="8" r="6" fill="#c5d5ea" opacity="0.700"/><ellipse cx="11" cy="11" rx="4.500" ry="10" fill="none" stroke="#2f5f9e" stroke-width="0.900"/><path d="M11 1V21M1 11H21M2.500 6H19.500M2.500 16H19.500" stroke="#2f5f9e" stroke-width="0.900" fill="none"/><path d="M3 13C6 14.500 16 14.500 19 13L18 17C14 19 8 19 4 17z" fill="#8a8a8a" opacity="0.550"/><rect x="13.500" y="13.500" width="9.500" height="9.500" rx="1.500" fill="#6a9a5f" stroke="#4e7c44" stroke-width="0.800"/><path d="M14.800 17.500H21.700L18.250 21.800z" fill="#000"/><path d="M15.500 15.500H21" stroke="#d9ead3" stroke-width="1.200"/></svg>
<svg class="b" style="left:1099px;top:93px;overflow:visible;" width="24" height="24" viewBox="0 0 24 24"><circle cx="11" cy="11" r="10" fill="#7ea3d4" stroke="#2f5f9e" stroke-width="1.100"/><circle cx="8" cy="8" r="6" fill="#c5d5ea" opacity="0.700"/><ellipse cx="11" cy="11" rx="4.500" ry="10" fill="none" stroke="#2f5f9e" stroke-width="0.900"/><path d="M11 1V21M1 11H21M2.500 6H19.500M2.500 16H19.500" stroke="#2f5f9e" stroke-width="0.900" fill="none"/><path d="M3 13C6 14.500 16 14.500 19 13L18 17C14 19 8 19 4 17z" fill="#8a8a8a" opacity="0.550"/><rect x="13.500" y="13.500" width="9.500" height="9.500" rx="1.500" fill="#6fa463" stroke="#4e7c44" stroke-width="0.800"/><circle cx="17.500" cy="17.500" r="2.200" fill="none" stroke="#fff" stroke-width="1.200"/><path d="M19 19L21.500 21.500" stroke="#fff" stroke-width="1.400"/></svg>
<svg class="b" style="left:1131px;top:93px;overflow:visible;" width="24" height="24" viewBox="0 0 24 24"><g transform="translate(1 -0.500)"><circle cx="11" cy="11" r="10" fill="#6f98cf" stroke="#2f5f9e" stroke-width="1.100"/><ellipse cx="11" cy="11" rx="4.500" ry="10" fill="none" stroke="#2f5f9e" stroke-width="0.800"/><path d="M1 11H21M2.500 6H19.500" stroke="#2f5f9e" stroke-width="0.800"/><path d="M4 5c2-1 4 0 5 1l-1 3l-3 1zM12 4l5 0l2 3l-3 3l-3-2z" fill="#1f467d"/></g><path d="M5.500 14L8.500 12.500L10.500 17H13.500L15.500 12.500L18.500 14L22 20.500A3 3 0 0 1 16 21.500L15 19H9L8 21.500A3 3 0 0 1 2 20.500z" fill="#0a0a0a"/><circle cx="5" cy="20.500" r="1.200" fill="#fff" opacity="0.850"/><circle cx="19" cy="20.500" r="1.200" fill="#fff" opacity="0.850"/></svg>
<div class="b" style="left:1159px;top:88px;width:1px;height:33px;background:#c8c8c8;"></div>
<div class="b" style="left:1160px;top:88px;width:1px;height:33px;background:#fbfbfb;"></div>
<svg class="b" style="left:1164px;top:91px;" width="5" height="27" viewBox="0 0 5 27"><rect x="1.8" y="1" width="1.6" height="1.6" fill="#b9b9b9"/><rect x="1.2" y="4.25" width="1.6" height="1.6" fill="#b9b9b9"/><rect x="1.8" y="7.5" width="1.6" height="1.6" fill="#b9b9b9"/><rect x="1.2" y="10.75" width="1.6" height="1.6" fill="#b9b9b9"/><rect x="1.8" y="14" width="1.6" height="1.6" fill="#b9b9b9"/><rect x="1.2" y="17.25" width="1.6" height="1.6" fill="#b9b9b9"/><rect x="1.8" y="20.5" width="1.6" height="1.6" fill="#b9b9b9"/><rect x="1.2" y="23.75" width="1.6" height="1.6" fill="#b9b9b9"/></svg>
<svg class="b" style="left:1175.5px;top:93px;overflow:visible;" width="24" height="24" viewBox="0 0 24 24"><path d="M11 1.500C6.500 1.500 7 3.500 7 5V7H11.500V8H4.500C2 8 1.500 10.500 1.500 12.500C1.500 15 2.500 17 4.500 17H6.500V14C6.500 12 8 11 10 11H14.500C16 11 17 10 17 8.500V5C17 2.500 14.500 1.500 11 1.500z" fill="#4b8bbe"/><circle cx="9" cy="4.200" r="1" fill="#fff"/><path d="M12 22.500C16.500 22.500 16 20.500 16 19V17H11.500V16H18.500C21 16 21.500 13.500 21.500 11.500C21.500 9 20.500 7 18.500 7H17.500V10C17.500 12 16 13 14 13H9.500C8 13 7 14 7 15.500V19C7 21.500 9.500 22.500 12 22.500z" fill="#ffd43b"/><circle cx="14" cy="19.800" r="1" fill="#fff"/><path d="M15 18.500L21 21L15 23.500" fill="none" stroke="#333" stroke-width="1.300"/></svg>
<svg class="b" style="left:1207px;top:93px;overflow:visible;" width="24" height="24" viewBox="0 0 24 24"><text x="10.500" y="11.500" font-family="Liberation Sans" font-weight="bold" font-size="9.800" text-anchor="middle" fill="#2c3e50" textLength="18.500" lengthAdjust="spacingAndGlyphs">KML</text><rect x="13" y="13.5" width="9.5" height="9.5" rx="1.8" fill="#6fa46a" stroke="#55894f" stroke-width="0.9"/><path d="M14.9 18.25H20.6M17.75 15.4V21.1" stroke="#fff" stroke-width="2.1"/></svg>
<svg class="b" style="left:1237px;top:93px;overflow:visible;" width="24" height="24" viewBox="0 0 24 24"><text x="11.500" y="10" font-family="Liberation Sans" font-weight="bold" font-size="9" text-anchor="middle" fill="#111" textLength="23" lengthAdjust="spacingAndGlyphs">HTML</text><rect x="12.5" y="12.5" width="10.5" height="10.5" rx="1.6" fill="#d9b634" stroke="#c09c1e" stroke-width="0.9"/><path d="M13.97 17.75L21.53 17.75M15.08 15.08L20.42 20.42M17.75 13.97L17.75 21.53M20.42 15.08L15.08 20.42" stroke="#fffbe6" stroke-width="1.2" stroke-linecap="round"/><circle cx="17.75" cy="17.75" r="2.10" fill="#fffbe6"/><circle cx="17.75" cy="17.75" r="0.94" fill="#d9b634"/></svg>
<svg class="b" style="left:1268px;top:93px;overflow:visible;" width="24" height="24" viewBox="0 0 24 24"><rect x="1.500" y="3" width="19" height="14" rx="5" fill="#27466e" stroke="#1d3557" stroke-width="1"/><rect x="5" y="4" width="4" height="4" fill="#6f97c2"/><rect x="13" y="4" width="4" height="4" fill="#6f97c2"/><rect x="9" y="8" width="4" height="4" fill="#a8c4e0"/><rect x="2.500" y="8" width="2.500" height="4" fill="#6f97c2"/><rect x="17" y="8" width="3" height="4" fill="#6f97c2"/><rect x="5" y="12" width="4" height="4" fill="#6f97c2"/><rect x="13" y="12" width="4" height="4" fill="#5a86b8"/><rect x="14.6" y="14.6" width="9.2" height="9.2" rx="1.8" fill="#6fa46a" stroke="#55894f" stroke-width="0.9"/><path d="M16.44 19.2H21.96M19.2 16.44V21.96" stroke="#fff" stroke-width="2.1"/></svg>
<svg class="b" style="left:1299px;top:93px;overflow:visible;" width="24" height="24" viewBox="0 0 24 24"><rect x="1.5" y="1.5" width="4.200" height="4.200" rx="0.600" fill="#a8c46a" stroke="#555" stroke-width="0.500" stroke-opacity="0.500"/><rect x="7.1" y="1.5" width="4.200" height="4.200" rx="0.600" fill="#7ab8e0" stroke="#555" stroke-width="0.500" stroke-opacity="0.500"/><rect x="12.7" y="1.5" width="4.200" height="4.200" rx="0.600" fill="#f0a47a" stroke="#555" stroke-width="0.500" stroke-opacity="0.500"/><rect x="18.3" y="1.5" width="4.200" height="4.200" rx="0.600" fill="#c8a8e8" stroke="#555" stroke-width="0.500" stroke-opacity="0.500"/><rect x="1.5" y="7.1" width="4.200" height="4.200" rx="0.600" fill="#c8a8e8" stroke="#555" stroke-width="0.500" stroke-opacity="0.500"/><rect x="7.1" y="7.1" width="4.200" height="4.200" rx="0.600" fill="#f0a47a" stroke="#555" stroke-width="0.500" stroke-opacity="0.500"/><rect x="12.7" y="7.1" width="4.200" height="4.200" rx="0.600" fill="#7ab8e0" stroke="#555" stroke-width="0.500" stroke-opacity="0.500"/><rect x="18.3" y="7.1" width="4.200" height="4.200" rx="0.600" fill="#a8c46a" stroke="#555" stroke-width="0.500" stroke-opacity="0.500"/><rect x="1.5" y="12.7" width="4.200" height="4.200" rx="0.600" fill="#a8c46a" stroke="#555" stroke-width="0.500" stroke-opacity="0.500"/><rect x="7.1" y="12.7" width="4.200" height="4.200" rx="0.600" fill="#c8a8e8" stroke="#555" stroke-width="0.500" stroke-opacity="0.500"/><rect x="12.7" y="12.7" width="4.200" height="4.200" rx="0.600" fill="#f0a47a" stroke="#555" stroke-width="0.500" stroke-opacity="0.500"/><rect x="18.3" y="12.7" width="4.200" height="4.200" rx="0.600" fill="#a8c46a" stroke="#555" stroke-width="0.500" stroke-opacity="0.500"/><rect x="1.5" y="18.3" width="4.200" height="4.200" rx="0.600" fill="#f0a47a" stroke="#555" stroke-width="0.500" stroke-opacity="0.500"/><rect x="7.1" y="18.3" width="4.200" height="4.200" rx="0.600" fill="#c8a8e8" stroke="#555" stroke-width="0.500" stroke-opacity="0.500"/><rect x="12.7" y="18.3" width="4.200" height="4.200" rx="0.600" fill="#a8c46a" stroke="#555" stroke-width="0.500" stroke-opacity="0.500"/><rect x="18.3" y="18.3" width="4.200" height="4.200" rx="0.600" fill="#7ab8e0" stroke="#555" stroke-width="0.500" stroke-opacity="0.500"/></svg>
<svg class="b" style="left:1330px;top:93px;overflow:visible;" width="24" height="24" viewBox="0 0 24 24"><rect x="1.500" y="1.500" width="19" height="19" fill="#f2f6fb" stroke="#86a9d2" stroke-width="1.100"/><path d="M7.800 1.500V20.500M14.200 1.500V20.500M1.500 7.800H20.500M1.500 14.200H20.500" stroke="#86a9d2" stroke-width="1.100"/><rect x="14" y="14" width="9" height="9" rx="1.6" fill="#e8c53c" stroke="#c7a322" stroke-width="0.9"/><path d="M15.62 18.50L21.38 18.50M17.06 16.01L19.94 20.99M19.94 16.01L17.06 20.99" stroke="#fffbe6" stroke-width="1.5" stroke-linecap="round"/></svg>
<div class="b" style="left:1360px;top:88px;width:1px;height:33px;background:#c8c8c8;"></div>
<div class="b" style="left:1361px;top:88px;width:1px;height:33px;background:#fbfbfb;"></div>
<svg class="b" style="left:1365px;top:91px;" width="5" height="27" viewBox="0 0 5 27"><rect x="1.8" y="1" width="1.6" height="1.6" fill="#b9b9b9"/><rect x="1.2" y="4.25" width="1.6" height="1.6" fill="#b9b9b9"/><rect x="1.8" y="7.5" width="1.6" height="1.6" fill="#b9b9b9"/><rect x="1.2" y="10.75" width="1.6" height="1.6" fill="#b9b9b9"/><rect x="1.8" y="14" width="1.6" height="1.6" fill="#b9b9b9"/><rect x="1.2" y="17.25" width="1.6" height="1.6" fill="#b9b9b9"/><rect x="1.8" y="20.5" width="1.6" height="1.6" fill="#b9b9b9"/><rect x="1.2" y="23.75" width="1.6" height="1.6" fill="#b9b9b9"/></svg>
<svg class="b" style="left:1375px;top:93px;overflow:visible;" width="24" height="24" viewBox="0 0 24 24"><rect x="2.500" y="1.500" width="19" height="21" rx="1" fill="#5d8cc2" stroke="#2c3e50" stroke-width="1"/><rect x="2.500" y="1.500" width="4.500" height="21" fill="#2c3e50"/><text x="14" y="17" font-family="Liberation Serif" font-size="14" text-anchor="middle" fill="#fff">?</text></svg>
<div class="b" style="left:1404px;top:88px;width:1px;height:33px;background:#c8c8c8;"></div>
<div class="b" style="left:1405px;top:88px;width:1px;height:33px;background:#fbfbfb;"></div>
<svg class="b" style="left:1409px;top:91px;" width="5" height="27" viewBox="0 0 5 27"><rect x="1.8" y="1" width="1.6" height="1.6" fill="#b9b9b9"/><rect x="1.2" y="4.25" width="1.6" height="1.6" fill="#b9b9b9"/><rect x="1.8" y="7.5" width="1.6" height="1.6" fill="#b9b9b9"/><rect x="1.2" y="10.75" width="1.6" height="1.6" fill="#b9b9b9"/><rect x="1.8" y="14" width="1.6" height="1.6" fill="#b9b9b9"/><rect x="1.2" y="17.25" width="1.6" height="1.6" fill="#b9b9b9"/><rect x="1.8" y="20.5" width="1.6" height="1.6" fill="#b9b9b9"/><rect x="1.2" y="23.75" width="1.6" height="1.6" fill="#b9b9b9"/></svg>
<div class="b" style="left:1417px;top:90px;width:31px;height:29px;background:#c3def5;border:1px solid #b4d5f1;"></div>
<svg class="b" style="left:1420.5px;top:93px;overflow:visible;" width="24" height="24" viewBox="0 0 24 24"><path d="M12 1V23M1 12.500H23" stroke="#2c3e50" stroke-width="1"/><circle cx="12" cy="12.500" r="4" fill="none" stroke="#c8161d" stroke-width="1.100" stroke-dasharray="3.300 3"/></svg>
<svg class="b" style="left:3px;top:125px;" width="5" height="27" viewBox="0 0 5 27"><rect x="1.8" y="1" width="1.6" height="1.6" fill="#b9b9b9"/><rect x="1.2" y="4.25" width="1.6" height="1.6" fill="#b9b9b9"/><rect x="1.8" y="7.5" width="1.6" height="1.6" fill="#b9b9b9"/><rect x="1.2" y="10.75" width="1.6" height="1.6" fill="#b9b9b9"/><rect x="1.8" y="14" width="1.6" height="1.6" fill="#b9b9b9"/><rect x="1.2" y="17.25" width="1.6" height="1.6" fill="#b9b9b9"/><rect x="1.8" y="20.5" width="1.6" height="1.6" fill="#b9b9b9"/><rect x="1.2" y="23.75" width="1.6" height="1.6" fill="#b9b9b9"/></svg>
<svg class="b" style="left:14.5px;top:127px;overflow:visible;" width="24" height="24" viewBox="0 0 24 24"><path d="M2 2.500L21 21.500H2z" fill="#dedbd7" stroke="#cfccc7" stroke-width="1"/><path d="M6 12L13.500 19.500H6z" fill="#eeeeee" stroke="#cfccc7" stroke-width="0.800"/><path d="M17 2V21.500H21V2z" fill="#e3e0dc" stroke="#cfccc7" stroke-width="0.800"/><path d="M19 4H21M19 7H21M19 10H21M19 13H21M19 16H21" stroke="#cfccc7" stroke-width="0.700"/></svg>
<svg class="b" style="left:46.5px;top:127px;overflow:visible;" width="24" height="24" viewBox="0 0 24 24"><path d="M3 2.500L8.500 13L14 4.500L19 4.500" fill="none" stroke="#d2d2d2" stroke-width="1.200"/><g fill="#ededed" stroke="#cdcdcd" stroke-width="0.900"><rect x="1.500" y="1" width="3" height="3"/><rect x="12.500" y="3" width="3" height="3"/><rect x="17.500" y="3" width="3" height="3"/><rect x="7" y="11.500" width="3" height="3"/></g><rect x="12.500" y="12.500" width="10" height="10" rx="1.500" fill="#d2d2d2"/><path d="M14 16.300H17.500V14L21.500 17.500L17.500 21V18.700H14z" fill="#f6f6f6"/></svg>
<svg class="b" style="left:76px;top:137px;" width="10" height="6" viewBox="0 0 10 6"><path d="M0.500 0.500H9.500L5 5.500z" fill="#5a5a5a"/></svg>
<svg class="b" style="left:92px;top:127px;overflow:visible;" width="24" height="24" viewBox="0 0 24 24"><path d="M1 7C2 2 8 2.500 11.500 4C15 5.500 17.500 2 21 3.500C24.500 5.500 23 12 19 12.500C15.500 13 14 11 10.500 12.500C6 14 0 12.500 1 7z" fill="#d9d9d6" stroke="#cdcdca" stroke-width="0.900"/><rect x="12.500" y="12.500" width="10" height="10" rx="1.500" fill="#d2d2d2"/><path d="M15 18a2.600 2.600 0 1 1 2.600 2.600" fill="none" stroke="#f4f4f4" stroke-width="1.500"/><path d="M13.500 17.500H17L15.200 19.800z" fill="#f4f4f4"/></svg>
<svg class="b" style="left:123px;top:127px;overflow:visible;" width="24" height="24" viewBox="0 0 24 24"><circle cx="9" cy="8.500" r="7" fill="#d9d9d6" stroke="#cdcdca" stroke-width="0.900"/><path d="M13.500 8.500L19.500 10L21.500 16L17 21.500H11L8.500 16z" fill="#e2e2e0" stroke="#cdcdca" stroke-width="0.900"/><path d="M9 8L14 13" stroke="#c4c4c4" stroke-width="0.900"/><path d="M14.500 13.500L11.800 12.800L13.600 11z" fill="#c4c4c4"/></svg>
<svg class="b" style="left:154px;top:127px;overflow:visible;" width="24" height="24" viewBox="0 0 24 24"><path d="M1 7C2 2 8 2.500 11.500 4C15 5.500 17.500 2 21 3.500C24.500 5.500 23 12 19 12.500C15.500 13 14 11 10.500 12.500C6 14 0 12.500 1 7z" fill="#d9d9d6" stroke="#cdcdca" stroke-width="0.900"/><ellipse cx="7.500" cy="7" rx="4.200" ry="2.700" fill="#efefef" stroke="#cdcdca" stroke-width="0.800"/><rect x="12.500" y="12.500" width="10" height="10" rx="1.500" fill="#d2d2d2"/><circle cx="17.500" cy="17.500" r="2" fill="#f4f4f4"/><path d="M17.500 14V21M14 17.500H21M15 15L20 20M20 15L15 20" stroke="#f4f4f4" stroke-width="1"/></svg>
<svg class="b" style="left:185px;top:127px;overflow:visible;" width="24" height="24" viewBox="0 0 24 24"><path d="M1 7C2 2 8 2.500 11.500 4C15 5.500 17.500 2 21 3.500C24.500 5.500 23 12 19 12.500C15.500 13 14 11 10.500 12.500C6 14 0 12.500 1 7z" fill="#d9d9d6" stroke="#cdcdca" stroke-width="0.900"/><path d="M2.500 21C1.500 17 5 13.500 9 13C11 13 10.500 16 9.500 18C8.500 20.500 4 23 2.500 21z" fill="#d9d9d6" stroke="#cdcdca" stroke-width="0.800"/><rect x="12.500" y="12.500" width="10" height="10" rx="1.500" fill="#d2d2d2"/><circle cx="17.500" cy="17.500" r="2" fill="#f4f4f4"/><path d="M17.500 14V21M14 17.500H21M15 15L20 20M20 15L15 20" stroke="#f4f4f4" stroke-width="1"/></svg>
<svg class="b" style="left:216px;top:127px;overflow:visible;" width="24" height="24" viewBox="0 0 24 24"><path d="M1 7C2 2 8 2.500 11.500 4C15 5.500 17.500 2 21 3.500C24.500 5.500 23 12 19 12.500C15.500 13 14 11 10.500 12.500C6 14 0 12.500 1 7z" fill="#d9d9d6" stroke="#cdcdca" stroke-width="0.900"/><ellipse cx="7.500" cy="7" rx="4.200" ry="2.700" fill="#cfcfcc" stroke="#cdcdca" stroke-width="0.800"/><rect x="12.500" y="12.500" width="10" height="10" rx="1.500" fill="#d2d2d2"/><circle cx="17.500" cy="17.500" r="2" fill="#f4f4f4"/><path d="M17.500 14V21M14 17.500H21M15 15L20 20M20 15L15 20" stroke="#f4f4f4" stroke-width="1"/></svg>
<svg class="b" style="left:247px;top:127px;overflow:visible;" width="24" height="24" viewBox="0 0 24 24"><path d="M1 7C2 2 8 2.500 11.500 4C15 5.500 17.500 2 21 3.500C24.500 5.500 23 12 19 12.500C15.500 13 14 11 10.500 12.500C6 14 0 12.500 1 7z" fill="#d9d9d6" stroke="#cdcdca" stroke-width="0.900"/><ellipse cx="7.500" cy="7" rx="4.200" ry="2.700" fill="#efefef" stroke="#cdcdca" stroke-width="0.800"/><rect x="12.500" y="12.500" width="10" height="10" rx="1.500" fill="#d2d2d2"/><path d="M15 15L20 20M20 15L15 20" stroke="#f4f4f4" stroke-width="2"/></svg>
<svg class="b" style="left:278px;top:127px;overflow:visible;" width="24" height="24" viewBox="0 0 24 24"><path d="M1 7C2 2 8 2.500 11.500 4C15 5.500 17.500 2 21 3.500C24.500 5.500 23 12 19 12.500C15.500 13 14 11 10.500 12.500C6 14 0 12.500 1 7z" fill="#d9d9d6" stroke="#cdcdca" stroke-width="0.900"/><path d="M2.500 21C1.500 17 5 13.500 9 13C11 13 10.500 16 9.500 18C8.500 20.500 4 23 2.500 21z" fill="#d9d9d6" stroke="#cdcdca" stroke-width="0.800"/><rect x="12.500" y="12.500" width="10" height="10" rx="1.500" fill="#d2d2d2"/><path d="M15 15L20 20M20 15L15 20" stroke="#f4f4f4" stroke-width="2"/></svg>
<svg class="b" style="left:309px;top:127px;overflow:visible;" width="24" height="24" viewBox="0 0 24 24"><path d="M2 7C3 2.500 8 3 11 4C14 5 16.500 2.500 19 4C22 6 19 10 16 10.500C12 11 12.500 14 11 17.500C9.500 21.500 5 21.500 4 18C3 15 1.500 10 2 7z" fill="#d9d9d6" stroke="#cdcdca" stroke-width="0.900"/></svg>
<svg class="b" style="left:340px;top:127px;overflow:visible;" width="24" height="24" viewBox="0 0 24 24"><path d="M4 20.500C0.500 17 5 12 9 9.500C12 7.500 13 3 17 2.500C21.500 2 22.500 7 20 10.500C18 13.500 14.500 13 12.500 16C10.500 19.500 7.500 23.500 4 20.500z" fill="#d9d9d6" stroke="#cdcdca" stroke-width="1"/><path d="M6 18C5 16 8 13.500 10.500 12C13.500 10 14.500 6 17 5.500" fill="none" stroke="#c9c9c6" stroke-width="0.800"/></svg>
<svg class="b" style="left:371px;top:127px;overflow:visible;" width="24" height="24" viewBox="0 0 24 24"><path d="M3 2.500L8.500 13L14 4.500L19 4.500" fill="none" stroke="#d2d2d2" stroke-width="1.200"/><g fill="#ededed" stroke="#cdcdcd" stroke-width="0.900"><rect x="1.500" y="1" width="3" height="3"/><rect x="12.500" y="3" width="3" height="3"/><rect x="17.500" y="3" width="3" height="3"/><rect x="7" y="11.500" width="3" height="3"/></g><rect x="12.500" y="12.500" width="10" height="10" rx="1.500" fill="#d2d2d2"/><path d="M14.800 17a2.800 2.800 0 0 1 5-1.500M20.200 18a2.800 2.800 0 0 1-5 1.500" fill="none" stroke="#f4f4f4" stroke-width="1.400"/></svg>
<svg class="b" style="left:402px;top:127px;overflow:visible;" width="24" height="24" viewBox="0 0 24 24"><path d="M11 0.500V23" stroke="#d0d0d0" stroke-width="1.300"/><path d="M2 10H22" stroke="#d6d6d6" stroke-width="1"/><g fill="#efefef" stroke="#cdcdcd" stroke-width="0.900"><rect x="15" y="2" width="4" height="4" stroke-dasharray="1.500 1"/><rect x="9" y="8" width="4" height="4"/><rect x="14" y="8.500" width="3" height="3"/><rect x="3" y="16" width="5" height="5" fill="#dcdcdc"/></g><path d="M4.200 17.200L6.800 19.800M6.800 17.200L4.200 19.800" stroke="#f4f4f4" stroke-width="1"/><path d="M15.500 14V22" stroke="#c9c9c9" stroke-width="1.600"/></svg>
<svg class="b" style="left:433px;top:127px;overflow:visible;" width="24" height="24" viewBox="0 0 24 24"><path d="M11 3C8 0.500 2.500 2 2.500 6.500C2.500 10.500 7 12 11 11z" fill="#d9d9d6" stroke="#cdcdca" stroke-width="0.900"/><path d="M13 3C16 0.500 21.500 2 21.500 6.500C21.500 10.500 17 12 13 11z" fill="#d9d9d6" stroke="#cdcdca" stroke-width="0.900"/><path d="M10 9L15.500 20M14 9L8.500 20" stroke="#cfcfcf" stroke-width="1.300"/><ellipse cx="8" cy="21" rx="1.800" ry="2.300" fill="none" stroke="#cfcfcf" stroke-width="1.100"/><ellipse cx="16" cy="21" rx="1.800" ry="2.300" fill="none" stroke="#cfcfcf" stroke-width="1.100"/></svg>
<svg class="b" style="left:464px;top:127px;overflow:visible;" width="24" height="24" viewBox="0 0 24 24"><path d="M11 3C8 0.500 2.500 2 2.500 6.500C2.500 10.500 7 12 11 11z" fill="#d9d9d6" stroke="#cdcdca" stroke-width="0.900"/><path d="M13 3C16 0.500 21.500 2 21.500 6.500C21.500 10.500 17 12 13 11z" fill="#d9d9d6" stroke="#cdcdca" stroke-width="0.900"/><path d="M10 9L15.500 20M14 9L8.500 20" stroke="#cfcfcf" stroke-width="1.300"/><ellipse cx="8" cy="21" rx="1.800" ry="2.300" fill="none" stroke="#cfcfcf" stroke-width="1.100"/><ellipse cx="16" cy="21" rx="1.800" ry="2.300" fill="none" stroke="#cfcfcf" stroke-width="1.100"/></svg>
<svg class="b" style="left:495px;top:127px;overflow:visible;" width="24" height="24" viewBox="0 0 24 24"><path d="M11 3C8 0.500 2.500 2 2.500 6.500C2.500 10.500 7 12 11 11z" fill="#d9d9d6" stroke="#cdcdca" stroke-width="0.900"/><path d="M13 3C16 0.500 21.500 2 21.500 6.500C21.500 10.500 17 12 13 11z" fill="#d9d9d6" stroke="#cdcdca" stroke-width="0.900"/><path d="M9 4H15M9 7H15" stroke="#f4f4f4" stroke-width="1.300"/><path d="M5 11C8 16 11 19 14 21" fill="none" stroke="#cfcfcf" stroke-width="1"/></svg>
<svg class="b" style="left:526px;top:127px;overflow:visible;" width="24" height="24" viewBox="0 0 24 24"><path d="M2 2.500H22M2 7.500H22M2 12.500H22M2 17.500H22M2 22H22" stroke="#d8d8d8" stroke-width="1"/><path d="M7 2.500C11 2.500 11 7.500 15 7.500M7 12.500C11 12.500 11 7.500 15 7.500M7 12.500C11 12.500 11 17.500 15 17.500M7 22C11 22 11 17.500 15 17.500" fill="none" stroke="#c9c9c9" stroke-width="1"/></svg>
<svg class="b" style="left:557px;top:127px;overflow:visible;" width="24" height="24" viewBox="0 0 24 24"><path d="M11 3.500L21 8.500L11 14z" fill="#e4e4e4" stroke="#cdcdcd" stroke-width="0.900"/><path d="M11 13L17 22.500H5z" fill="#ededed" stroke="#dadada" stroke-width="0.800"/><path d="M5.500 19C1.500 14 2.500 7 8 3" fill="none" stroke="#cdcdcd" stroke-width="1"/><path d="M9.500 1.500L5.500 3L8.500 6z" fill="#cdcdcd"/></svg>
<svg class="b" style="left:587.5px;top:137px;" width="10" height="6" viewBox="0 0 10 6"><path d="M0.500 0.500H9.500L5 5.500z" fill="#5a5a5a"/></svg>
<svg class="b" style="left:3px;top:159px;" width="5" height="27" viewBox="0 0 5 27"><rect x="1.8" y="1" width="1.6" height="1.6" fill="#b9b9b9"/><rect x="1.2" y="4.25" width="1.6" height="1.6" fill="#b9b9b9"/><rect x="1.8" y="7.5" width="1.6" height="1.6" fill="#b9b9b9"/><rect x="1.2" y="10.75" width="1.6" height="1.6" fill="#b9b9b9"/><rect x="1.8" y="14" width="1.6" height="1.6" fill="#b9b9b9"/><rect x="1.2" y="17.25" width="1.6" height="1.6" fill="#b9b9b9"/><rect x="1.8" y="20.5" width="1.6" height="1.6" fill="#b9b9b9"/><rect x="1.2" y="23.75" width="1.6" height="1.6" fill="#b9b9b9"/></svg>
<svg class="b" style="left:14.5px;top:160px;overflow:visible;" width="24" height="24" viewBox="0 0 24 24"><path d="M2 3L6 1.500L11 2.500L15 1.500L21.500 3L22 9L20.500 14L22 21L16 22.500L10 21.500L5 22.500L1.500 20L3 13L1.500 8z" fill="#b5dca0"/><path d="M5 5C8 3 13 4 16 6C19 8 19 12 16 15C12 18 7 17 5 13C4 10 3.500 7 5 5z" fill="#cfe8bf"/><path d="M8 9C10 7 14 8 14.500 11C15 14 11 15 9 13.500C7.500 12 7 10.500 8 9z" fill="#b3d4e8"/><path d="M3 16C8 14 12 19 20 17" fill="none" stroke="#e9f4e1" stroke-width="1.200"/><path d="M13 21L21 13.500L19 19.500M14 14L22 21" stroke="#4f9a2f" stroke-width="1.500" fill="none"/></svg>
<svg class="b" style="left:46px;top:160px;overflow:visible;" width="24" height="24" viewBox="0 0 24 24"><rect x="2" y="2" width="7" height="6" fill="#53b04a"/><path d="M10 3L16 6L12 11z" fill="#5a8fd0"/><rect x="3" y="10" width="6" height="5" fill="#f0b9a8"/><path d="M15 9L22 8L21 15L16 14z" fill="#f5e9a6"/><path d="M3 17L10 15L14 19L8 22L2 21z" fill="#f2c879"/><path d="M11 12L21.500 22L17 22L13 18L10 22L6 20.500z" fill="#4f86c6"/><path d="M4 18C7 20 10 20 12 18" fill="none" stroke="#5aa0d8" stroke-width="1.200"/><path d="M19.500 1.500L12 15" stroke="#5a2d0c" stroke-width="3.200" stroke-linecap="round"/><path d="M12.500 14L10.500 18.500" stroke="#e8d9a8" stroke-width="2.600" stroke-linecap="round"/></svg>
<div class="b" style="left:75px;top:156px;width:1px;height:33px;background:#c8c8c8;"></div>
<div class="b" style="left:76px;top:156px;width:1px;height:33px;background:#fbfbfb;"></div>
<svg class="b" style="left:80px;top:159px;" width="5" height="27" viewBox="0 0 5 27"><rect x="1.8" y="1" width="1.6" height="1.6" fill="#b9b9b9"/><rect x="1.2" y="4.25" width="1.6" height="1.6" fill="#b9b9b9"/><rect x="1.8" y="7.5" width="1.6" height="1.6" fill="#b9b9b9"/><rect x="1.2" y="10.75" width="1.6" height="1.6" fill="#b9b9b9"/><rect x="1.8" y="14" width="1.6" height="1.6" fill="#b9b9b9"/><rect x="1.2" y="17.25" width="1.6" height="1.6" fill="#b9b9b9"/><rect x="1.8" y="20.5" width="1.6" height="1.6" fill="#b9b9b9"/><rect x="1.2" y="23.75" width="1.6" height="1.6" fill="#b9b9b9"/></svg>
<svg class="b" style="left:91px;top:161px;overflow:visible;" width="24" height="24" viewBox="0 0 24 24"><path d="M12 2L15.500 6.500H13.200V11H10.800V6.500H8.500z" fill="#000"/><path d="M6.500 12.500H9L10 11.500H14L15 12.500H17.500V21.500H6.500z" fill="#000"/><circle cx="12" cy="17" r="2.800" fill="none" stroke="#fff" stroke-width="0.900"/><circle cx="12" cy="17" r="1.200" fill="none" stroke="#fff" stroke-width="0.700"/></svg>
<svg class="b" style="left:121px;top:160px;overflow:visible;" width="24" height="24" viewBox="0 0 24 24"><rect x="2" y="2.500" width="17" height="14" fill="#4a4a4a"/><path d="M2 2.500H19V16.500H2z" fill="none" stroke="#000" stroke-width="2.400" stroke-dasharray="3.600 1.800"/><path d="M5 8L8 5.500L11 8.500L14.500 5L17 8V6H5z" fill="#fff"/><rect x="4" y="4.500" width="13" height="2" fill="#fff"/><path d="M4 9.500L8 6.500L10.500 9L14 5.500L17 9V4.500H4z" fill="#fff"/><circle cx="6.500" cy="6" r="0.900" fill="#4a4a4a"/><g transform="translate(14 10)"><path d="M0 0V11.500L2.800 9L4.800 13.500L6.800 12.600L4.800 8.200H8.500z" fill="#fff" stroke="#111" stroke-width="1" stroke-linejoin="round"/></g></svg>
<div class="b" style="left:0px;top:190px;width:50px;height:674px;background:#f0f0f0;"></div>
<svg class="b" style="left:5px;top:205px;overflow:visible;" width="24" height="24" viewBox="0 0 24 24"><g transform="translate(0 -0.500) scale(1.120)"><path d="M2 2.500L9 17.500L15.700 2.200L21.500 2.800" fill="none" stroke="#333" stroke-width="1.300" stroke-linejoin="round"/><rect x="0.3" y="0.8" width="3.4" height="3.4" fill="#fff" stroke="#333" stroke-width="0.900" transform="rotate(45 2 2.5)"/><rect x="14" y="0.5" width="3.4" height="3.4" fill="#fff" stroke="#333" stroke-width="0.900" transform="rotate(45 15.7 2.2)"/><rect x="19.8" y="1.1" width="3.4" height="3.4" fill="#fff" stroke="#333" stroke-width="0.900" transform="rotate(45 21.5 2.8)"/><circle cx="9" cy="17.500" r="1.800" fill="#fff" stroke="#333" stroke-width="0.900"/></g><rect x="14.8" y="14.5" width="9.5" height="9.5" rx="1.8" fill="#6fa46a" stroke="#55894f" stroke-width="0.9"/><path d="M16.7 19.25H22.4M19.55 16.4V22.1" stroke="#fff" stroke-width="2.1"/></svg>
<svg class="b" style="left:5px;top:235px;overflow:visible;" width="24" height="24" viewBox="0 0 24 24"><g transform="translate(0 -0.500) scale(1.120)"><rect x="1" y="1" width="5" height="5" fill="#1d3557"/><rect x="6" y="1" width="5" height="5" fill="#a8c4e0"/><rect x="11" y="1" width="5" height="5" fill="#27466e"/><rect x="16" y="1" width="5" height="5" fill="#6f97c2"/><rect x="1" y="6" width="5" height="5" fill="#a8c4e0"/><rect x="6" y="6" width="5" height="5" fill="#1d3557"/><rect x="11" y="6" width="5" height="5" fill="#8fb1d6"/><rect x="16" y="6" width="5" height="5" fill="#c9dcef"/><rect x="1" y="11" width="5" height="5" fill="#27466e"/><rect x="6" y="11" width="5" height="5" fill="#6f97c2"/><rect x="11" y="11" width="5" height="5" fill="#1d3557"/><rect x="16" y="11" width="5" height="5" fill="#dfeaf5"/><rect x="1" y="16" width="5" height="5" fill="#a8c4e0"/><rect x="6" y="16" width="5" height="5" fill="#27466e"/><rect x="11" y="16" width="5" height="5" fill="#c9dcef"/><rect x="16" y="16" width="5" height="5" fill="#eef3f9"/></g><rect x="14.8" y="14.5" width="9.5" height="9.5" rx="1.8" fill="#6fa46a" stroke="#55894f" stroke-width="0.9"/><path d="M16.7 19.25H22.4M19.55 16.4V22.1" stroke="#fff" stroke-width="2.1"/></svg>
<svg class="b" style="left:5px;top:265px;overflow:visible;" width="24" height="24" viewBox="0 0 24 24"><g transform="translate(0 -0.500) scale(1.120)"><rect x="2" y="2" width="19" height="19" fill="#9dbbdd" stroke="#2f557f" stroke-width="1.100"/><path d="M2 13H21M11.500 2V21M2 2L11.500 13M11.500 13L21 2M6.500 13V21M2 17H11.500" stroke="#2f557f" stroke-width="1" fill="none"/><rect x="2.500" y="13.500" width="8.500" height="7" fill="#5d8cc2" opacity="0.600"/></g><rect x="14.8" y="14.5" width="9.5" height="9.5" rx="1.8" fill="#6fa46a" stroke="#55894f" stroke-width="0.9"/><path d="M16.7 19.25H22.4M19.55 16.4V22.1" stroke="#fff" stroke-width="2.1"/></svg>
<svg class="b" style="left:5px;top:295px;overflow:visible;" width="24" height="24" viewBox="0 0 24 24"><g transform="translate(0 -0.500) scale(1.120)"><path d="M11 3C7 3 5.500 6 6.500 8.500C7.500 11 10.500 11 11.500 9.500C12.500 14 9 18.500 5.500 19.500C11 20 16.500 14.500 15.500 8C15 5 13.500 3 11 3z" fill="#5d8cc2" stroke="#345f95" stroke-width="0.800"/></g><rect x="14.8" y="14.5" width="9.5" height="9.5" rx="1.8" fill="#6fa46a" stroke="#55894f" stroke-width="0.9"/><path d="M16.7 19.25H22.4M19.55 16.4V22.1" stroke="#fff" stroke-width="2.1"/></svg>
<svg class="b" style="left:5px;top:325px;overflow:visible;" width="24" height="24" viewBox="0 0 24 24"><g transform="translate(0 -0.500) scale(1.120)"><path d="M2.500 23C4 15 8 7.500 21.500 1.500C21 8 19 12 16.500 14L13 14.500L15 16C12 18.500 8 19 5.500 18.500z" fill="#7ea6d6" stroke="#3f6ea5" stroke-width="0.900" stroke-linejoin="round"/><path d="M3 22.500C6 15 11 9 19 4" fill="none" stroke="#2f5f96" stroke-width="0.900"/></g><rect x="14.8" y="14.5" width="9.5" height="9.5" rx="1.8" fill="#6fa46a" stroke="#55894f" stroke-width="0.9"/><path d="M16.7 19.25H22.4M19.55 16.4V22.1" stroke="#fff" stroke-width="2.1"/></svg>
<svg class="b" style="left:5px;top:355px;overflow:visible;" width="24" height="24" viewBox="0 0 24 24"><g transform="translate(0 -0.500) scale(1.120)"><rect x="1.500" y="1.500" width="21" height="21" rx="3" fill="#a8c0de" stroke="#5c82b0" stroke-width="1.200"/><path d="M4.500 4L10 18.500L17 4L20.500 4" fill="none" stroke="#2e4e78" stroke-width="1.300"/><circle cx="10" cy="18.500" r="1.900" fill="#fff" stroke="#2e4e78" stroke-width="0.900"/><circle cx="17" cy="4" r="1.500" fill="#fff" stroke="#2e4e78" stroke-width="0.800"/><circle cx="4.500" cy="4" r="1.500" fill="#fff" stroke="#2e4e78" stroke-width="0.800"/></g><rect x="14.8" y="14.5" width="9.5" height="9.5" rx="1.8" fill="#6fa46a" stroke="#55894f" stroke-width="0.9"/><path d="M16.7 19.25H22.4M19.55 16.4V22.1" stroke="#fff" stroke-width="2.1"/></svg>
<svg class="b" style="left:5px;top:385px;overflow:visible;" width="24" height="24" viewBox="0 0 24 24"><path d="M1.500 8C1 3.500 4 1 7.500 2C9.500 0.800 12 0.800 13.500 2C17 0.800 20 3.500 19 8.500C18.500 11 17 13 15.500 13C15.700 15.500 15 18 13 18.500C11.300 18.800 10.300 17.500 10.600 15.500L11 12.500C9.500 13.500 8 13.500 6.800 12.500C4.500 13.200 2 11.500 1.500 8z" fill="#5b8cc0" stroke="#2a4d7c" stroke-width="1.100" stroke-linejoin="round"/><path d="M7.800 2.500C6.800 6 7.300 10 6.800 12.500M13.500 2.500C14.500 6 14 10 15.500 13M11 6.500V12.500" stroke="#2a4d7c" stroke-width="0.900" fill="none"/><circle cx="9" cy="6.500" r="0.700" fill="#dfe9f5"/><path d="M13 14.500C14.500 14.500 16 13.800 17 12.800" stroke="#2a4d7c" stroke-width="0.900" fill="none"/><rect x="15" y="14.6" width="9.2" height="9.2" rx="1.8" fill="#6fa46a" stroke="#55894f" stroke-width="0.9"/><path d="M16.84 19.2H22.36M19.6 16.44V21.96" stroke="#fff" stroke-width="2.1"/></svg>
<svg class="b" style="left:5px;top:415px;overflow:visible;" width="24" height="24" viewBox="0 0 24 24"><g transform="translate(-1.450 -0.720) scale(1.220 1.020)"><circle cx="11" cy="11" r="9.800" fill="#9dbbdd" stroke="#345f95" stroke-width="1"/><ellipse cx="11" cy="11" rx="4.500" ry="9.800" fill="none" stroke="#5d86b6" stroke-width="0.700"/><path d="M1.200 11H20.800M3 6H19M3 16H19" stroke="#5d86b6" stroke-width="0.700"/><path d="M4 6c2-1.500 4-.5 5 .5l-1 3l-3 1.500zM11.500 5l5-.5l2 3.500l-3 3l-3.500-2zM8 13l3 1l-1 4l-2-2z" fill="#1f467d"/></g><rect x="15" y="14.6" width="9.2" height="9.2" rx="1.8" fill="#6fa46a" stroke="#55894f" stroke-width="0.9"/><path d="M16.84 19.2H22.36M19.6 16.44V21.96" stroke="#fff" stroke-width="2.1"/></svg>
<svg class="b" style="left:5px;top:445px;overflow:visible;" width="24" height="24" viewBox="0 0 24 24"><g transform="translate(-1.450 -0.720) scale(1.220 1.020)"><circle cx="11" cy="11" r="9.800" fill="#27466e" stroke="#1d3557" stroke-width="1"/><ellipse cx="11" cy="11" rx="4.800" ry="9.800" fill="none" stroke="#cfdff0" stroke-width="1.200"/><path d="M1.200 11H20.800M3 6H19M3 16H19M11 1.200V20.800" stroke="#cfdff0" stroke-width="1.200"/><rect x="6.500" y="6.800" width="4" height="3.800" fill="#6f97c2"/><rect x="11.500" y="11.500" width="4" height="4" fill="#6f97c2"/></g><rect x="15" y="14.6" width="9.2" height="9.2" rx="1.8" fill="#6fa46a" stroke="#55894f" stroke-width="0.9"/><path d="M16.84 19.2H22.36M19.6 16.44V21.96" stroke="#fff" stroke-width="2.1"/></svg>
<svg class="b" style="left:5px;top:475px;overflow:visible;" width="24" height="24" viewBox="0 0 24 24"><g transform="translate(-1.450 -0.720) scale(1.220 1.020)"><circle cx="11" cy="11" r="9.800" fill="#dbe7f4" stroke="#5d86b6" stroke-width="1"/><ellipse cx="11" cy="11" rx="4.800" ry="9.800" fill="none" stroke="#86a9d2" stroke-width="0.800"/><path d="M1.200 11H20.800M3 6H19M3 16H19M11 1.200V20.800" stroke="#86a9d2" stroke-width="0.800"/><path d="M4.500 6L10 18L15 6.500L18.500 6.500" fill="none" stroke="#222" stroke-width="1.200"/><circle cx="4.500" cy="6" r="1.400" fill="#fff" stroke="#222" stroke-width="0.800"/><circle cx="15" cy="6.500" r="1.400" fill="#fff" stroke="#222" stroke-width="0.800"/><circle cx="18.800" cy="6.500" r="1.400" fill="#fff" stroke="#222" stroke-width="0.800"/><circle cx="10" cy="18" r="1.500" fill="#fff" stroke="#222" stroke-width="0.800"/></g><rect x="15" y="14.6" width="9.2" height="9.2" rx="1.8" fill="#6fa46a" stroke="#55894f" stroke-width="0.9"/><path d="M16.84 19.2H22.36M19.6 16.44V21.96" stroke="#fff" stroke-width="2.1"/></svg>
<svg class="b" style="left:5px;top:505px;overflow:visible;" width="24" height="24" viewBox="0 0 24 24"><g transform="translate(0 -0.500) scale(1.120)"><path d="M2 2.500L9 17.500L15.700 2.200L21.500 2.800" fill="none" stroke="#333" stroke-width="1.300" stroke-linejoin="round"/><rect x="0.3" y="0.8" width="3.4" height="3.4" fill="#fff" stroke="#333" stroke-width="0.900" transform="rotate(45 2 2.5)"/><rect x="14" y="0.5" width="3.4" height="3.4" fill="#fff" stroke="#333" stroke-width="0.900" transform="rotate(45 15.7 2.2)"/><rect x="19.8" y="1.1" width="3.4" height="3.4" fill="#fff" stroke="#333" stroke-width="0.900" transform="rotate(45 21.5 2.8)"/><circle cx="9" cy="17.500" r="1.800" fill="#fff" stroke="#333" stroke-width="0.900"/></g><rect x="14.8" y="14.5" width="9.5" height="9.5" rx="1.6" fill="#f2b62c" stroke="#d99a1a" stroke-width="0.9"/><path d="M16.51 19.25L22.59 19.25M18.03 16.62L21.07 21.88M21.07 16.62L18.03 21.88" stroke="#fffbe6" stroke-width="1.5" stroke-linecap="round"/></svg>
<svg class="b" style="left:12px;top:536px;overflow:visible;" width="24" height="24" viewBox="0 0 24 24"><g transform="translate(0 -0.500) scale(1.120)"><rect x="1.500" y="1.500" width="20" height="19" rx="1.500" fill="#f2f6fb" stroke="#3f6ea5" stroke-width="1.200"/><rect x="2" y="2" width="19" height="4.500" fill="#4a7ab5"/><rect x="2" y="2" width="5" height="18" fill="#4a7ab5"/><path d="M7 2V20.500M11.700 2V20.500M16.400 2V20.500M2 6.500H21.500M2 11.200H21.500M2 15.900H21.500" stroke="#3f6ea5" stroke-width="1"/></g><rect x="14.8" y="14.5" width="9.5" height="9.5" rx="1.8" fill="#6fa46a" stroke="#55894f" stroke-width="0.9"/><path d="M16.7 19.25H22.4M19.55 16.4V22.1" stroke="#fff" stroke-width="2.1"/></svg>
<svg class="b" style="left:35px;top:393.5px;" width="11" height="7" viewBox="0 0 11 7"><path d="M0.500 0.500H10.500L5.500 6.500z" fill="#000"/></svg>
<svg class="b" style="left:35px;top:424px;" width="11" height="7" viewBox="0 0 11 7"><path d="M0.500 0.500H10.500L5.500 6.500z" fill="#000"/></svg>
<svg class="b" style="left:35px;top:484.5px;" width="11" height="7" viewBox="0 0 11 7"><path d="M0.500 0.500H10.500L5.500 6.500z" fill="#000"/></svg>
<svg class="b" style="left:35px;top:513.5px;" width="11" height="7" viewBox="0 0 11 7"><path d="M0.500 0.500H10.500L5.500 6.500z" fill="#000"/></svg>
<svg class="b" style="left:3px;top:193px;" width="44" height="4" viewBox="0 0 44 4"><rect x="1" y="1" width="1.5" height="1.5" fill="#c4c4c4"/><rect x="4.3" y="1" width="1.5" height="1.5" fill="#c4c4c4"/><rect x="7.6" y="1" width="1.5" height="1.5" fill="#c4c4c4"/><rect x="10.9" y="1" width="1.5" height="1.5" fill="#c4c4c4"/><rect x="14.2" y="1" width="1.5" height="1.5" fill="#c4c4c4"/><rect x="17.5" y="1" width="1.5" height="1.5" fill="#c4c4c4"/><rect x="20.8" y="1" width="1.5" height="1.5" fill="#c4c4c4"/><rect x="24.1" y="1" width="1.5" height="1.5" fill="#c4c4c4"/><rect x="27.4" y="1" width="1.5" height="1.5" fill="#c4c4c4"/><rect x="30.7" y="1" width="1.5" height="1.5" fill="#c4c4c4"/><rect x="34" y="1" width="1.5" height="1.5" fill="#c4c4c4"/><rect x="37.3" y="1" width="1.5" height="1.5" fill="#c4c4c4"/><rect x="40.6" y="1" width="1.5" height="1.5" fill="#c4c4c4"/></svg>
<div class="b" style="left:50px;top:191px;width:327px;height:31px;background:#d9d9d9;border:1px solid #c4c4c4;"></div>
<span class="t" style="left:55px;top:197.5px;font-size:15px;line-height:20px;color:#1a1a1a;letter-spacing:-0.504px;">Layer</span>
<svg class="b" style="left:329px;top:198px;" width="18" height="18" viewBox="0 0 18 18"><path d="M6 2.5h9.5v9" fill="none" stroke="#2b2b2b" stroke-width="3"/><rect x="2.2" y="6.8" width="9.6" height="9" fill="#d9d9d9" stroke="#2b2b2b" stroke-width="2.4"/></svg>
<svg class="b" style="left:355px;top:199px;" width="16" height="16" viewBox="0 0 16 16"><path d="M1.5 1.5L14.5 14.5M14.5 1.5L1.5 14.5" stroke="#2b2b2b" stroke-width="3.2"/></svg>
<svg class="b" style="left:54.5px;top:228.5px;overflow:visible;" width="17" height="17" viewBox="0 0 24 24"><path d="M14 11L22 2.500" stroke="#e0a030" stroke-width="3" stroke-linecap="round"/><path d="M3 12L10 8L16 15L8 20z" fill="#d9473a"/><path d="M3 12L6.500 10L12.500 17.500L8 20z" fill="#e87a3a"/><path d="M6.500 10L10 8L16 15L12.500 17.500z" fill="#f0c23c"/><path d="M2 14L8 21L5 22.500L0.500 16z" fill="#5d8cc2"/></svg>
<svg class="b" style="left:77.5px;top:228.5px;overflow:visible;" width="17" height="17" viewBox="0 0 24 24"><g fill="none" stroke="#7a7a7a" stroke-width="1.300"><path d="M2 10V21H13"/><path d="M5 7V18H16V7z" fill="#f4f4f4"/><path d="M9.500 4V15H20.500V4z" fill="#f4f4f4"/><path d="M12.500 13V4a2.500 2.500 0 0 1 5 0V14" stroke="#4a6e9e"/></g><circle cx="19" cy="19" r="4" fill="#9fd08f" stroke="#6fa463" stroke-width="0.900"/><path d="M16.800 19H21.200M19 16.800V21.200" stroke="#fff" stroke-width="1.300"/></svg>
<svg class="b" style="left:100.5px;top:228.5px;overflow:visible;" width="17" height="17" viewBox="0 0 24 24"><path d="M1 10C5 3.500 17 3.500 22 10C17 16.500 5 16.500 1 10z" fill="#f4f4f4" stroke="#9a9a9a" stroke-width="1"/><path d="M0.500 8C5 2 17 2 22.500 8" fill="none" stroke="#b5b5b5" stroke-width="0.900"/><circle cx="11" cy="10" r="4.800" fill="#5d8cc2"/><circle cx="11" cy="10" r="2.300" fill="#1d3557"/><circle cx="9.500" cy="8.500" r="1" fill="#fff"/><path d="M12 16.500H22.500L17.250 22.500z" fill="#000"/></svg>
<svg class="b" style="left:123.5px;top:228.5px;overflow:visible;" width="17" height="17" viewBox="0 0 24 24"><path d="M2 4H22L14.500 13V22.500H9.500V13z" fill="#6d9bd0" stroke="#4a7ab5" stroke-width="0.900" stroke-linejoin="round"/><rect x="1.500" y="1.500" width="21" height="3.500" rx="1" fill="#f0d04a" stroke="#d4b02e" stroke-width="0.700"/></svg>
<svg class="b" style="left:146.5px;top:228.5px;overflow:visible;" width="17" height="17" viewBox="0 0 24 24"><text x="8" y="17" font-family="Liberation Serif" font-size="25" text-anchor="middle" fill="#5d2f6d">ε</text><path d="M11.500 13H22.500L19.500 17.500V22.500H14.500V17.500z" fill="#cfcfcf" stroke="#aaa" stroke-width="0.800"/><rect x="15.500" y="17.500" width="3" height="5" fill="#f4f4f4"/></svg>
<svg class="b" style="left:185px;top:228.5px;overflow:visible;" width="17" height="17" viewBox="0 0 24 24"><path d="M3 2V21" stroke="#8a8a8a" stroke-width="1"/><path d="M2 2H22" stroke="#7a9cc6" stroke-width="0.900"/><path d="M3 8H7M3 17H7" stroke="#8a8a8a" stroke-width="1"/><rect x="5.500" y="5.500" width="5" height="5" fill="#f5b942" stroke="#d9952a" stroke-width="0.800"/><rect x="5.500" y="14.500" width="5" height="5" fill="#f5b942" stroke="#d9952a" stroke-width="0.800"/><path d="M14 1.500H19.500V12H23L16.750 21.500L10.500 12H14z" fill="#5d8cc2" stroke="#3f6ea5" stroke-width="0.800"/></svg>
<svg class="b" style="left:208.5px;top:228.5px;overflow:visible;" width="17" height="17" viewBox="0 0 24 24"><path d="M3 5V21" stroke="#8a8a8a" stroke-width="1"/><path d="M3 8H7M3 17H7" stroke="#8a8a8a" stroke-width="1"/><rect x="5.500" y="5.500" width="5" height="5" fill="#f5b942" stroke="#d9952a" stroke-width="0.800"/><rect x="5.500" y="14.500" width="5" height="5" fill="#f5b942" stroke="#d9952a" stroke-width="0.800"/><path d="M14 21.500H19.500V11H23L16.750 1.500L10.500 11H14z" fill="#5d8cc2" stroke="#3f6ea5" stroke-width="0.800"/></svg>
<svg class="b" style="left:231px;top:228.5px;overflow:visible;" width="17" height="17" viewBox="0 0 24 24"><rect x="2" y="2" width="16" height="16" fill="#f8f8f8" stroke="#8a8a8a" stroke-width="1.300"/><rect x="13" y="15" width="9.500" height="6.500" rx="1.800" fill="#d83a4a" stroke="#b52535" stroke-width="0.800"/><path d="M15 18.250H20.500" stroke="#fff" stroke-width="1.600"/></svg>
<svg class="b" style="left:169px;top:234px;" width="11" height="7" viewBox="0 0 11 7"><path d="M0.500 0.500H10.500L5.500 6.500z" fill="#000"/></svg>
<div class="b" style="left:50px;top:250px;width:327px;height:558px;background:#ffffff;border:1px solid #828790;"></div>
<div class="b" style="left:126px;top:371px;width:250px;height:24px;background:#d9d9d9;"></div>
<svg class="b" style="left:79px;top:255px;" width="16" height="16" viewBox="0 0 16 16"><rect x="0.5" y="0.5" width="15" height="15" fill="#fff" stroke="#2e2e2e" stroke-width="1"/><path d="M3.2 8.2L6.6 11.4L12.8 4.6" fill="none" stroke="#2e2e2e" stroke-width="1.4"/></svg>
<svg class="b" style="left:101px;top:253px;" width="20" height="20" viewBox="0 0 20 20"><circle cx="10" cy="10" r="8.3" fill="#fff" stroke="#111" stroke-width="1.3"/><circle cx="10" cy="10" r="2.6" fill="#111"/></svg>
<span class="t" style="left:127px;top:253.5px;font-size:15px;line-height:20px;color:#000;font-weight:bold;letter-spacing:-0.171px;">Funde_WT_2017_2019</span>
<svg class="b" style="left:57px;top:283px;" width="12" height="8" viewBox="0 0 12 8"><path d="M1.2 1.5L6 6.3L10.8 1.5" fill="none" stroke="#3c3c3c" stroke-width="1.8"/></svg>
<svg class="b" style="left:79px;top:279px;" width="16" height="16" viewBox="0 0 16 16"><rect x="0.5" y="0.5" width="15" height="15" fill="#fff" stroke="#2e2e2e" stroke-width="1"/><path d="M3.2 8.2L6.6 11.4L12.8 4.6" fill="none" stroke="#2e2e2e" stroke-width="1.4"/></svg>
<svg class="b" style="left:102px;top:277px;" width="19" height="20" viewBox="0 0 19 20"><g fill="none" stroke="#8a8a8a" stroke-width="1.2"><path d="M1.5 8.5v9h9"/><path d="M4 6v9h9v-9z" fill="#f4f4f4"/><path d="M8 3.5v8.5h9v-8.5z" fill="#f4f4f4"/><path d="M10.5 10v-6.5a2 2 0 0 1 4 0v7" stroke="#777"/></g></svg>
<span class="t" style="left:127px;top:277.5px;font-size:15px;line-height:20px;color:#1a1a1a;letter-spacing:-0.388px;">Gebiet_und_Wege</span>
<svg class="b" style="left:85px;top:305px;" width="8" height="12" viewBox="0 0 8 12"><path d="M1.2 1.2L6 6L1.2 10.8" fill="none" stroke="#9c9c9c" stroke-width="1.6"/></svg>
<svg class="b" style="left:104px;top:303px;" width="16" height="16" viewBox="0 0 16 16"><rect x="0.5" y="0.5" width="15" height="15" fill="#fff" stroke="#2e2e2e" stroke-width="1"/><path d="M3.2 8.2L6.6 11.4L12.8 4.6" fill="none" stroke="#2e2e2e" stroke-width="1.4"/></svg>
<svg class="b" style="left:127px;top:301px;" width="19" height="20" viewBox="0 0 19 20"><g fill="none" stroke="#8a8a8a" stroke-width="1.2"><path d="M1.5 8.5v9h9"/><path d="M4 6v9h9v-9z" fill="#f4f4f4"/><path d="M8 3.5v8.5h9v-8.5z" fill="#f4f4f4"/><path d="M10.5 10v-6.5a2 2 0 0 1 4 0v7" stroke="#777"/></g></svg>
<span class="t" style="left:152px;top:301.5px;font-size:15px;line-height:20px;color:#1a1a1a;letter-spacing:-0.693px;">Strasse</span>
<svg class="b" style="left:85px;top:329px;" width="8" height="12" viewBox="0 0 8 12"><path d="M1.2 1.2L6 6L1.2 10.8" fill="none" stroke="#9c9c9c" stroke-width="1.6"/></svg>
<svg class="b" style="left:104px;top:327px;" width="16" height="16" viewBox="0 0 16 16"><rect x="0.5" y="0.5" width="15" height="15" fill="#fff" stroke="#2e2e2e" stroke-width="1"/><path d="M3.2 8.2L6.6 11.4L12.8 4.6" fill="none" stroke="#2e2e2e" stroke-width="1.4"/></svg>
<svg class="b" style="left:127px;top:325px;" width="19" height="20" viewBox="0 0 19 20"><g fill="none" stroke="#8a8a8a" stroke-width="1.2"><path d="M1.5 8.5v9h9"/><path d="M4 6v9h9v-9z" fill="#f4f4f4"/><path d="M8 3.5v8.5h9v-8.5z" fill="#f4f4f4"/><path d="M10.5 10v-6.5a2 2 0 0 1 4 0v7" stroke="#777"/></g></svg>
<span class="t" style="left:152px;top:325.5px;font-size:15px;line-height:20px;color:#1a1a1a;letter-spacing:-0.339px;">Rundweg</span>
<svg class="b" style="left:82px;top:355px;" width="12" height="8" viewBox="0 0 12 8"><path d="M1.2 1.5L6 6.3L10.8 1.5" fill="none" stroke="#3c3c3c" stroke-width="1.8"/></svg>
<svg class="b" style="left:104px;top:351px;" width="16" height="16" viewBox="0 0 16 16"><rect x="0.5" y="0.5" width="15" height="15" fill="#fff" stroke="#2e2e2e" stroke-width="1"/><path d="M3.2 8.2L6.6 11.4L12.8 4.6" fill="none" stroke="#2e2e2e" stroke-width="1.4"/></svg>
<svg class="b" style="left:127px;top:349px;" width="19" height="20" viewBox="0 0 19 20"><g fill="none" stroke="#8a8a8a" stroke-width="1.2"><path d="M1.5 8.5v9h9"/><path d="M4 6v9h9v-9z" fill="#f4f4f4"/><path d="M8 3.5v8.5h9v-8.5z" fill="#f4f4f4"/><path d="M10.5 10v-6.5a2 2 0 0 1 4 0v7" stroke="#777"/></g></svg>
<span class="t" style="left:152px;top:349.5px;font-size:15px;line-height:20px;color:#1a1a1a;letter-spacing:-1.027px;">NSG_1983</span>
<svg class="b" style="left:85px;top:401px;" width="8" height="12" viewBox="0 0 8 12"><path d="M1.2 1.2L6 6L1.2 10.8" fill="none" stroke="#9c9c9c" stroke-width="1.6"/></svg>
<svg class="b" style="left:104px;top:399px;" width="16" height="16" viewBox="0 0 16 16"><rect x="0.5" y="0.5" width="15" height="15" fill="#fff" stroke="#2e2e2e" stroke-width="1"/><path d="M3.2 8.2L6.6 11.4L12.8 4.6" fill="none" stroke="#2e2e2e" stroke-width="1.4"/></svg>
<svg class="b" style="left:127px;top:397px;" width="19" height="20" viewBox="0 0 19 20"><g fill="none" stroke="#8a8a8a" stroke-width="1.2"><path d="M1.5 8.5v9h9"/><path d="M4 6v9h9v-9z" fill="#f4f4f4"/><path d="M8 3.5v8.5h9v-8.5z" fill="#f4f4f4"/><path d="M10.5 10v-6.5a2 2 0 0 1 4 0v7" stroke="#777"/></g></svg>
<span class="t" style="left:152px;top:397.5px;font-size:15px;line-height:20px;color:#1a1a1a;letter-spacing:-1.027px;">NSG_1937</span>
<svg class="b" style="left:60px;top:425px;" width="8" height="12" viewBox="0 0 8 12"><path d="M1.2 1.2L6 6L1.2 10.8" fill="none" stroke="#9c9c9c" stroke-width="1.6"/></svg>
<svg class="b" style="left:79px;top:423px;" width="16" height="16" viewBox="0 0 16 16"><rect x="0.5" y="0.5" width="15" height="15" fill="#fff" stroke="#2e2e2e" stroke-width="1"/></svg>
<svg class="b" style="left:103.5px;top:423.5px;" width="16" height="16" viewBox="0 0 19 19"><rect x="1" y="1" width="6" height="6" fill="#1d3557"/><rect x="7" y="1" width="6" height="6" fill="#a8c4e0"/><rect x="13" y="1" width="5" height="6" fill="#27466e"/><rect x="1" y="7" width="6" height="6" fill="#c9dcef"/><rect x="7" y="7" width="6" height="6" fill="#1d3557"/><rect x="13" y="7" width="5" height="6" fill="#dfeaf5"/><rect x="1" y="13" width="6" height="5" fill="#27466e"/><rect x="7" y="13" width="6" height="5" fill="#6f97c2"/><rect x="13" y="13" width="5" height="5" fill="#eaf1f8"/></svg>
<span class="t" style="left:127px;top:421.5px;font-size:15px;line-height:20px;color:#7a7a7a;font-weight:bold;font-style:italic;letter-spacing:-0.232px;">WMS LGRB-BW BK50: Bodenkarte</span>
<svg class="b" style="left:60px;top:449px;" width="8" height="12" viewBox="0 0 8 12"><path d="M1.2 1.2L6 6L1.2 10.8" fill="none" stroke="#9c9c9c" stroke-width="1.6"/></svg>
<svg class="b" style="left:79px;top:447px;" width="16" height="16" viewBox="0 0 16 16"><rect x="0.5" y="0.5" width="15" height="15" fill="#fff" stroke="#2e2e2e" stroke-width="1"/></svg>
<svg class="b" style="left:103.5px;top:447.5px;" width="16" height="16" viewBox="0 0 19 19"><rect x="1" y="1" width="6" height="6" fill="#1d3557"/><rect x="7" y="1" width="6" height="6" fill="#a8c4e0"/><rect x="13" y="1" width="5" height="6" fill="#27466e"/><rect x="1" y="7" width="6" height="6" fill="#c9dcef"/><rect x="7" y="7" width="6" height="6" fill="#1d3557"/><rect x="13" y="7" width="5" height="6" fill="#dfeaf5"/><rect x="1" y="13" width="6" height="5" fill="#27466e"/><rect x="7" y="13" width="6" height="5" fill="#6f97c2"/><rect x="13" y="13" width="5" height="5" fill="#eaf1f8"/></svg>
<span class="t" style="left:127px;top:445.5px;font-size:15px;line-height:20px;color:#7a7a7a;font-weight:bold;font-style:italic;letter-spacing:-0.270px;">WMS LGRB-BW GK50: Geologische</span>
<svg class="b" style="left:60px;top:473px;" width="8" height="12" viewBox="0 0 8 12"><path d="M1.2 1.2L6 6L1.2 10.8" fill="none" stroke="#9c9c9c" stroke-width="1.6"/></svg>
<svg class="b" style="left:79px;top:471px;" width="16" height="16" viewBox="0 0 16 16"><rect x="0.5" y="0.5" width="15" height="15" fill="#fff" stroke="#2e2e2e" stroke-width="1"/><path d="M3.2 8.2L6.6 11.4L12.8 4.6" fill="none" stroke="#2e2e2e" stroke-width="1.4"/></svg>
<svg class="b" style="left:102px;top:469px;" width="19" height="20" viewBox="0 0 19 20"><g fill="none" stroke="#8a8a8a" stroke-width="1.2"><path d="M1.5 8.5v9h9"/><path d="M4 6v9h9v-9z" fill="#f4f4f4"/><path d="M8 3.5v8.5h9v-8.5z" fill="#f4f4f4"/><path d="M10.5 10v-6.5a2 2 0 0 1 4 0v7" stroke="#777"/></g></svg>
<span class="t" style="left:127px;top:469.5px;font-size:15px;line-height:20px;color:#1a1a1a;letter-spacing:-0.194px;">Pflanzengesellschaften</span>
<svg class="b" style="left:60px;top:497px;" width="8" height="12" viewBox="0 0 8 12"><path d="M1.2 1.2L6 6L1.2 10.8" fill="none" stroke="#9c9c9c" stroke-width="1.6"/></svg>
<svg class="b" style="left:79px;top:495px;" width="16" height="16" viewBox="0 0 16 16"><rect x="0.5" y="0.5" width="15" height="15" fill="#fff" stroke="#2e2e2e" stroke-width="1"/><path d="M3.2 8.2L6.6 11.4L12.8 4.6" fill="none" stroke="#2e2e2e" stroke-width="1.4"/></svg>
<svg class="b" style="left:102px;top:493px;" width="19" height="20" viewBox="0 0 19 20"><g fill="none" stroke="#8a8a8a" stroke-width="1.2"><path d="M1.5 8.5v9h9"/><path d="M4 6v9h9v-9z" fill="#f4f4f4"/><path d="M8 3.5v8.5h9v-8.5z" fill="#f4f4f4"/><path d="M10.5 10v-6.5a2 2 0 0 1 4 0v7" stroke="#777"/></g></svg>
<span class="t" style="left:127px;top:493.5px;font-size:15px;line-height:20px;color:#1a1a1a;letter-spacing:0.304px;">Biotope</span>
<svg class="b" style="left:57px;top:523px;" width="12" height="8" viewBox="0 0 12 8"><path d="M1.2 1.5L6 6.3L10.8 1.5" fill="none" stroke="#3c3c3c" stroke-width="1.8"/></svg>
<svg class="b" style="left:79px;top:519px;" width="16" height="16" viewBox="0 0 16 16"><rect x="0.5" y="0.5" width="15" height="15" fill="#fff" stroke="#2e2e2e" stroke-width="1"/><path d="M3.2 8.2L6.6 11.4L12.8 4.6" fill="none" stroke="#2e2e2e" stroke-width="1.4"/></svg>
<svg class="b" style="left:103.5px;top:519.5px;" width="16" height="16" viewBox="0 0 19 19"><rect x="1" y="1" width="6" height="6" fill="#1d3557"/><rect x="7" y="1" width="6" height="6" fill="#a8c4e0"/><rect x="13" y="1" width="5" height="6" fill="#27466e"/><rect x="1" y="7" width="6" height="6" fill="#c9dcef"/><rect x="7" y="7" width="6" height="6" fill="#1d3557"/><rect x="13" y="7" width="5" height="6" fill="#dfeaf5"/><rect x="1" y="13" width="6" height="5" fill="#27466e"/><rect x="7" y="13" width="6" height="5" fill="#6f97c2"/><rect x="13" y="13" width="5" height="5" fill="#eaf1f8"/></svg>
<span class="t" style="left:127px;top:517.5px;font-size:15px;line-height:20px;color:#000;font-weight:bold;letter-spacing:-0.138px;">OpenStreetMap Standard</span>
<svg class="b" style="left:129px;top:375px;" width="16" height="16" viewBox="0 0 16 16"><rect x="0.5" y="0.5" width="15" height="15" fill="#fff" stroke="#2e2e2e" stroke-width="1"/><path d="M3.2 8.2L6.6 11.4L12.8 4.6" fill="none" stroke="#2e2e2e" stroke-width="1.4"/></svg>
<div class="b" style="left:151px;top:379px;width:19px;height:9px;background:#0e7a5c;"></div>
<span class="t" style="left:176px;top:373.5px;font-size:15px;line-height:20px;color:#000;font-weight:bold;letter-spacing:-0.384px;text-decoration:underline;">NSG_1983_tracks</span>
<div class="b" style="left:370px;top:251px;width:6px;height:536px;background:#ffffff;"></div>
<div class="b" style="left:370px;top:371px;width:6px;height:24px;background:#d9d9d9;"></div>
<div class="b" style="left:371.5px;top:253px;width:3.5px;height:20px;background:#e4e4e4;"></div>
<div class="b" style="left:371.5px;top:277px;width:3.5px;height:20px;background:#e4e4e4;"></div>
<div class="b" style="left:371.5px;top:301px;width:3.5px;height:20px;background:#e4e4e4;"></div>
<div class="b" style="left:371.5px;top:325px;width:3.5px;height:20px;background:#e4e4e4;"></div>
<div class="b" style="left:371.5px;top:349px;width:3.5px;height:20px;background:#e4e4e4;"></div>
<div class="b" style="left:371.5px;top:373px;width:3.5px;height:20px;background:#d9d9d9;"></div>
<div class="b" style="left:371.5px;top:397px;width:3.5px;height:20px;background:#e4e4e4;"></div>
<div class="b" style="left:371.5px;top:421px;width:3.5px;height:20px;background:#e4e4e4;"></div>
<div class="b" style="left:371.5px;top:445px;width:3.5px;height:20px;background:#e4e4e4;"></div>
<div class="b" style="left:371.5px;top:469px;width:3.5px;height:20px;background:#e4e4e4;"></div>
<div class="b" style="left:371.5px;top:493px;width:3.5px;height:20px;background:#e4e4e4;"></div>
<div class="b" style="left:371.5px;top:517px;width:3.5px;height:20px;background:#e4e4e4;"></div>
<div class="b" style="left:51px;top:786px;width:325px;height:21px;background:#f0f0f0;"></div>
<div class="b" style="left:72px;top:787.5px;width:182px;height:18px;background:#cdcdcd;"></div>
<svg class="b" style="left:55px;top:790.5px;" width="10" height="12" viewBox="0 0 10 12"><path d="M7.5 1.5L2.5 6L7.5 10.5" fill="none" stroke="#555" stroke-width="1.5"/></svg>
<svg class="b" style="left:360px;top:790.5px;" width="10" height="12" viewBox="0 0 10 12"><path d="M2.5 1.5L7.5 6L2.5 10.5" fill="none" stroke="#555" stroke-width="1.5"/></svg>
<div class="b" style="left:50px;top:814.5px;width:327px;height:30.5px;background:#d9d9d9;border:1px solid #c4c4c4;"></div>
<span class="t" style="left:55px;top:821px;font-size:15px;line-height:20px;color:#1a1a1a;letter-spacing:0.021px;">Koordinatenaufnahme</span>
<svg class="b" style="left:329px;top:821px;" width="18" height="18" viewBox="0 0 18 18"><path d="M6 2.5h9.5v9" fill="none" stroke="#2b2b2b" stroke-width="3"/><rect x="2.2" y="6.8" width="9.6" height="9" fill="#d9d9d9" stroke="#2b2b2b" stroke-width="2.4"/></svg>
<svg class="b" style="left:355px;top:822px;" width="16" height="16" viewBox="0 0 16 16"><path d="M1.5 1.5L14.5 14.5M14.5 1.5L1.5 14.5" stroke="#2b2b2b" stroke-width="3.2"/></svg>
<div class="b" style="left:62px;top:858px;width:26px;height:6px;background:#e1e1e1;border:1px solid #adadad;border-bottom:none;"></div>
<div class="b" style="left:71px;top:860px;width:7px;height:4px;background:#3a3a3a;border-radius:3px 3px 0 0;"></div>
<div class="b" style="left:104px;top:860px;width:262px;height:4px;background:#fff;border:1px solid #7a7a7a;border-bottom:none;"></div>
<div class="b" style="left:382px;top:190px;width:1155px;height:674px;background:#7a7a7a;"></div>
<svg class="b" style="left:383px;top:191px;" width="1154" height="673" viewBox="0 0 1154 673"><rect x="0" y="0" width="1154" height="673" fill="#add19e"/><polygon points="917,209 929,189 943,175 962,169 1000,167 998,204 984,249 964,274 917,246" fill="#cdebb0"/><polyline points="1000,167 1042,159 1097,148 1132,136 1154,129" fill="none" stroke="#bfdde3" stroke-width="5.5" stroke-linecap="round" stroke-linejoin="round"/><polyline points="1000,167 1042,159 1097,148 1132,136 1154,129" fill="none" stroke="#aad3df" stroke-width="3.5" stroke-linecap="round" stroke-linejoin="round"/><polyline points="917,211 929,189 943,175 962,169 1000,167" fill="none" stroke="#bfdde3" stroke-width="5" stroke-linecap="round" stroke-linejoin="round"/><polyline points="917,211 929,189 943,175 962,169 1000,167" fill="none" stroke="#aad3df" stroke-width="3" stroke-linecap="round" stroke-linejoin="round"/><polyline points="917,154 958,165 1000,167" fill="none" stroke="#bfdde3" stroke-width="5" stroke-linecap="round" stroke-linejoin="round"/><polyline points="917,154 958,165 1000,167" fill="none" stroke="#aad3df" stroke-width="3" stroke-linecap="round" stroke-linejoin="round"/><polyline points="1000,167 999,194 994,219 990,233" fill="none" stroke="#bfdde3" stroke-width="5" stroke-linecap="round" stroke-linejoin="round"/><polyline points="1000,167 999,194 994,219 990,233" fill="none" stroke="#aad3df" stroke-width="3" stroke-linecap="round" stroke-linejoin="round"/><polyline points="110,679 122,665 140,652 157,645" fill="none" stroke="#bfdde3" stroke-width="5" stroke-linecap="round" stroke-linejoin="round"/><polyline points="110,679 122,665 140,652 157,645" fill="none" stroke="#aad3df" stroke-width="3" stroke-linecap="round" stroke-linejoin="round"/><polyline points="195,679 207,667 229,657 262,651" fill="none" stroke="#bfdde3" stroke-width="5" stroke-linecap="round" stroke-linejoin="round"/><polyline points="195,679 207,667 229,657 262,651" fill="none" stroke="#aad3df" stroke-width="3" stroke-linecap="round" stroke-linejoin="round"/><polyline points="0,123 52,144" fill="none" stroke="#e6ead2" stroke-width="4.500" stroke-linejoin="round" opacity=".75"/><polyline points="0,123 52,144" fill="none" stroke="#c49a48" stroke-width="2" stroke-dasharray="7 4" stroke-linejoin="round"/><polyline points="0,200 52,144 93,107" fill="none" stroke="#e6ead2" stroke-width="4.500" stroke-linejoin="round" opacity=".75"/><polyline points="0,200 52,144 93,107" fill="none" stroke="#c49a48" stroke-width="2" stroke-dasharray="7 4" stroke-linejoin="round"/><polyline points="1072,-1 1097,7 1127,16" fill="none" stroke="#f0e6dc" stroke-width="4.500" stroke-linejoin="round" opacity=".75"/><polyline points="1072,-1 1097,7 1127,16" fill="none" stroke="#f08a7a" stroke-width="2" stroke-dasharray="7 4" stroke-linejoin="round"/><polyline points="1147,-3 1129,19 1115,40" fill="none" stroke="#e6ead2" stroke-width="4.500" stroke-linejoin="round" opacity=".75"/><polyline points="1147,-3 1129,19 1115,40" fill="none" stroke="#c49a48" stroke-width="2" stroke-dasharray="7 4" stroke-linejoin="round"/><polyline points="928,255 937,274 946,293 951,309" fill="none" stroke="#e6ead2" stroke-width="4.500" stroke-linejoin="round" opacity=".75"/><polyline points="928,255 937,274 946,293 951,309" fill="none" stroke="#c49a48" stroke-width="2" stroke-dasharray="7 4" stroke-linejoin="round"/><polyline points="964,271 966,287 954,309 946,320 926,332" fill="none" stroke="#e6ead2" stroke-width="4.500" stroke-linejoin="round" opacity=".75"/><polyline points="964,271 966,287 954,309 946,320 926,332" fill="none" stroke="#c49a48" stroke-width="2" stroke-dasharray="7 4" stroke-linejoin="round"/><polyline points="401.7,655.7 421,670" fill="none" stroke="#f0e6dc" stroke-width="4.500" stroke-linejoin="round" opacity=".75"/><polyline points="401.7,655.7 421,670" fill="none" stroke="#f08a7a" stroke-width="2" stroke-dasharray="7 4" stroke-linejoin="round"/><g transform="translate(5.3 7.6) scale(0.920)"><g fill="none" stroke="#98c08c" stroke-width="1.350"><path d="M4 0.800L0.800 10.500h6.400z"/><path d="M4 10.500v5"/><ellipse cx="12" cy="5.200" rx="3.300" ry="4.400"/><path d="M12 9.600v6"/></g></g><g transform="translate(57.4 41.6) scale(0.920)"><g fill="none" stroke="#98c08c" stroke-width="1.350"><path d="M4 0.800L0.800 10.500h6.400z"/><path d="M4 10.500v5"/><ellipse cx="12" cy="5.200" rx="3.300" ry="4.400"/><path d="M12 9.600v6"/></g></g><g transform="translate(11.4 71.3) scale(0.920)"><g fill="none" stroke="#98c08c" stroke-width="1.350"><path d="M4 0.800L0.800 10.500h6.400z"/><path d="M4 10.500v5"/><ellipse cx="12" cy="5.200" rx="3.300" ry="4.400"/><path d="M12 9.600v6"/></g></g><g transform="translate(50.2 90.3) scale(0.920)"><g fill="none" stroke="#98c08c" stroke-width="1.350"><path d="M4 0.800L0.800 10.500h6.400z"/><path d="M4 10.500v5"/><ellipse cx="12" cy="5.200" rx="3.300" ry="4.400"/><path d="M12 9.600v6"/></g></g><g transform="translate(3.6 118.6) scale(0.920)"><g fill="none" stroke="#98c08c" stroke-width="1.350"><path d="M4 0.800L0.800 10.500h6.400z"/><path d="M4 10.500v5"/><ellipse cx="12" cy="5.200" rx="3.300" ry="4.400"/><path d="M12 9.600v6"/></g></g><g transform="translate(46.6 133.3) scale(0.920)"><g fill="none" stroke="#98c08c" stroke-width="1.350"><path d="M4 0.800L0.800 10.500h6.400z"/><path d="M4 10.500v5"/><ellipse cx="12" cy="5.200" rx="3.300" ry="4.400"/><path d="M12 9.600v6"/></g></g><g transform="translate(46.6 184.3) scale(0.920)"><g fill="none" stroke="#98c08c" stroke-width="1.350"><path d="M4 0.800L0.800 10.500h6.400z"/><path d="M4 10.500v5"/><ellipse cx="12" cy="5.200" rx="3.300" ry="4.400"/><path d="M12 9.600v6"/></g></g><g transform="translate(7.6 212.3) scale(0.920)"><g fill="none" stroke="#98c08c" stroke-width="1.350"><path d="M4 0.800L0.800 10.500h6.400z"/><path d="M4 10.500v5"/><ellipse cx="12" cy="5.200" rx="3.300" ry="4.400"/><path d="M12 9.600v6"/></g></g><g transform="translate(57.4 226.6) scale(0.920)"><g fill="none" stroke="#98c08c" stroke-width="1.350"><path d="M4 0.800L0.800 10.500h6.400z"/><path d="M4 10.500v5"/><ellipse cx="12" cy="5.200" rx="3.300" ry="4.400"/><path d="M12 9.600v6"/></g></g><g transform="translate(-3.6 258.6) scale(0.920)"><g fill="none" stroke="#98c08c" stroke-width="1.350"><path d="M4 0.800L0.800 10.500h6.400z"/><path d="M4 10.500v5"/><ellipse cx="12" cy="5.200" rx="3.300" ry="4.400"/><path d="M12 9.600v6"/></g></g><g transform="translate(57.4 276.6) scale(0.920)"><g fill="none" stroke="#98c08c" stroke-width="1.350"><path d="M4 0.800L0.800 10.500h6.400z"/><path d="M4 10.500v5"/><ellipse cx="12" cy="5.200" rx="3.300" ry="4.400"/><path d="M12 9.600v6"/></g></g><g transform="translate(16.1 293) scale(0.920)"><g fill="none" stroke="#98c08c" stroke-width="1.350"><path d="M4 0.800L0.800 10.500h6.400z"/><path d="M4 10.500v5"/><ellipse cx="12" cy="5.200" rx="3.300" ry="4.400"/><path d="M12 9.600v6"/></g></g><g transform="translate(53.6 -3.4) scale(0.920)"><g fill="none" stroke="#98c08c" stroke-width="1.350"><path d="M4 0.800L0.800 10.500h6.400z"/><path d="M4 10.500v5"/><ellipse cx="12" cy="5.200" rx="3.300" ry="4.400"/><path d="M12 9.600v6"/></g></g><g transform="translate(64.6 322.6) scale(0.920)"><g fill="none" stroke="#98c08c" stroke-width="1.350"><path d="M4 0.800L0.800 10.500h6.400z"/><path d="M4 10.500v5"/><ellipse cx="12" cy="5.200" rx="3.300" ry="4.400"/><path d="M12 9.600v6"/></g></g><g transform="translate(19.1 349.3) scale(0.920)"><g fill="none" stroke="#98c08c" stroke-width="1.350"><path d="M4 0.800L0.800 10.500h6.400z"/><path d="M4 10.500v5"/><ellipse cx="12" cy="5.200" rx="3.300" ry="4.400"/><path d="M12 9.600v6"/></g></g><g transform="translate(54 376.1) scale(0.920)"><g fill="none" stroke="#98c08c" stroke-width="1.350"><path d="M4 0.800L0.800 10.500h6.400z"/><path d="M4 10.500v5"/><ellipse cx="12" cy="5.200" rx="3.300" ry="4.400"/><path d="M12 9.600v6"/></g></g><g transform="translate(3 389.6) scale(0.920)"><g fill="none" stroke="#98c08c" stroke-width="1.350"><path d="M4 0.800L0.800 10.500h6.400z"/><path d="M4 10.500v5"/><ellipse cx="12" cy="5.200" rx="3.300" ry="4.400"/><path d="M12 9.600v6"/></g></g><g transform="translate(54 420.6) scale(0.920)"><g fill="none" stroke="#98c08c" stroke-width="1.350"><path d="M4 0.800L0.800 10.500h6.400z"/><path d="M4 10.500v5"/><ellipse cx="12" cy="5.200" rx="3.300" ry="4.400"/><path d="M12 9.600v6"/></g></g><g transform="translate(11.1 451.3) scale(0.920)"><g fill="none" stroke="#98c08c" stroke-width="1.350"><path d="M4 0.800L0.800 10.500h6.400z"/><path d="M4 10.500v5"/><ellipse cx="12" cy="5.200" rx="3.300" ry="4.400"/><path d="M12 9.600v6"/></g></g><g transform="translate(46 470.1) scale(0.920)"><g fill="none" stroke="#98c08c" stroke-width="1.350"><path d="M4 0.800L0.800 10.500h6.400z"/><path d="M4 10.500v5"/><ellipse cx="12" cy="5.200" rx="3.300" ry="4.400"/><path d="M12 9.600v6"/></g></g><g transform="translate(6 500.6) scale(0.920)"><g fill="none" stroke="#98c08c" stroke-width="1.350"><path d="M4 0.800L0.800 10.500h6.400z"/><path d="M4 10.500v5"/><ellipse cx="12" cy="5.200" rx="3.300" ry="4.400"/><path d="M12 9.600v6"/></g></g><g transform="translate(46 513.1) scale(0.920)"><g fill="none" stroke="#98c08c" stroke-width="1.350"><path d="M4 0.800L0.800 10.500h6.400z"/><path d="M4 10.500v5"/><ellipse cx="12" cy="5.200" rx="3.300" ry="4.400"/><path d="M12 9.600v6"/></g></g><g transform="translate(45.3 566.4) scale(0.920)"><g fill="none" stroke="#98c08c" stroke-width="1.350"><path d="M4 0.800L0.800 10.500h6.400z"/><path d="M4 10.500v5"/><ellipse cx="12" cy="5.200" rx="3.300" ry="4.400"/><path d="M12 9.600v6"/></g></g><g transform="translate(6.6 594.2) scale(0.920)"><g fill="none" stroke="#98c08c" stroke-width="1.350"><path d="M4 0.800L0.800 10.500h6.400z"/><path d="M4 10.500v5"/><ellipse cx="12" cy="5.200" rx="3.300" ry="4.400"/><path d="M12 9.600v6"/></g></g><g transform="translate(81.6 546.6) scale(0.920)"><g fill="none" stroke="#98c08c" stroke-width="1.350"><path d="M4 0.800L0.800 10.500h6.400z"/><path d="M4 10.500v5"/><ellipse cx="12" cy="5.200" rx="3.300" ry="4.400"/><path d="M12 9.600v6"/></g></g><g transform="translate(54 607.1) scale(0.920)"><g fill="none" stroke="#98c08c" stroke-width="1.350"><path d="M4 0.800L0.800 10.500h6.400z"/><path d="M4 10.500v5"/><ellipse cx="12" cy="5.200" rx="3.300" ry="4.400"/><path d="M12 9.600v6"/></g></g><g transform="translate(-5 639.3) scale(0.920)"><g fill="none" stroke="#98c08c" stroke-width="1.350"><path d="M4 0.800L0.800 10.500h6.400z"/><path d="M4 10.500v5"/><ellipse cx="12" cy="5.200" rx="3.300" ry="4.400"/><path d="M12 9.600v6"/></g></g><g transform="translate(29.6 646.6) scale(0.920)"><g fill="none" stroke="#98c08c" stroke-width="1.350"><path d="M4 0.800L0.800 10.500h6.400z"/><path d="M4 10.500v5"/><ellipse cx="12" cy="5.200" rx="3.300" ry="4.400"/><path d="M12 9.600v6"/></g></g><g transform="translate(64.6 653.6) scale(0.920)"><g fill="none" stroke="#98c08c" stroke-width="1.350"><path d="M4 0.800L0.800 10.500h6.400z"/><path d="M4 10.500v5"/><ellipse cx="12" cy="5.200" rx="3.300" ry="4.400"/><path d="M12 9.600v6"/></g></g><g transform="translate(952.6 16.1) scale(0.920)"><g fill="none" stroke="#98c08c" stroke-width="1.350"><path d="M4 0.800L0.800 10.500h6.400z"/><path d="M4 10.500v5"/><ellipse cx="12" cy="5.200" rx="3.300" ry="4.400"/><path d="M12 9.600v6"/></g></g><g transform="translate(1003.6 -3.4) scale(0.920)"><g fill="none" stroke="#98c08c" stroke-width="1.350"><path d="M4 0.800L0.800 10.500h6.400z"/><path d="M4 10.500v5"/><ellipse cx="12" cy="5.200" rx="3.300" ry="4.400"/><path d="M12 9.600v6"/></g></g><g transform="translate(1048.6 -7.4) scale(0.920)"><g fill="none" stroke="#98c08c" stroke-width="1.350"><path d="M4 0.800L0.800 10.500h6.400z"/><path d="M4 10.500v5"/><ellipse cx="12" cy="5.200" rx="3.300" ry="4.400"/><path d="M12 9.600v6"/></g></g><g transform="translate(1103.6 -3.4) scale(0.920)"><g fill="none" stroke="#98c08c" stroke-width="1.350"><path d="M4 0.800L0.800 10.500h6.400z"/><path d="M4 10.500v5"/><ellipse cx="12" cy="5.200" rx="3.300" ry="4.400"/><path d="M12 9.600v6"/></g></g><g transform="translate(1025.6 39.6) scale(0.920)"><g fill="none" stroke="#98c08c" stroke-width="1.350"><path d="M4 0.800L0.800 10.500h6.400z"/><path d="M4 10.500v5"/><ellipse cx="12" cy="5.200" rx="3.300" ry="4.400"/><path d="M12 9.600v6"/></g></g><g transform="translate(1070.6 47.6) scale(0.920)"><g fill="none" stroke="#98c08c" stroke-width="1.350"><path d="M4 0.800L0.800 10.500h6.400z"/><path d="M4 10.500v5"/><ellipse cx="12" cy="5.200" rx="3.300" ry="4.400"/><path d="M12 9.600v6"/></g></g><g transform="translate(1113.6 43.6) scale(0.920)"><g fill="none" stroke="#98c08c" stroke-width="1.350"><path d="M4 0.800L0.800 10.500h6.400z"/><path d="M4 10.500v5"/><ellipse cx="12" cy="5.200" rx="3.300" ry="4.400"/><path d="M12 9.600v6"/></g></g><g transform="translate(930.3 54.2) scale(0.920)"><g fill="none" stroke="#98c08c" stroke-width="1.350"><path d="M4 0.800L0.800 10.500h6.400z"/><path d="M4 10.500v5"/><ellipse cx="12" cy="5.200" rx="3.300" ry="4.400"/><path d="M12 9.600v6"/></g></g><g transform="translate(984.1 51.6) scale(0.920)"><g fill="none" stroke="#98c08c" stroke-width="1.350"><path d="M4 0.800L0.800 10.500h6.400z"/><path d="M4 10.500v5"/><ellipse cx="12" cy="5.200" rx="3.300" ry="4.400"/><path d="M12 9.600v6"/></g></g><g transform="translate(965.6 92) scale(0.920)"><g fill="none" stroke="#98c08c" stroke-width="1.350"><path d="M4 0.800L0.800 10.500h6.400z"/><path d="M4 10.500v5"/><ellipse cx="12" cy="5.200" rx="3.300" ry="4.400"/><path d="M12 9.600v6"/></g></g><g transform="translate(1020.6 82.6) scale(0.920)"><g fill="none" stroke="#98c08c" stroke-width="1.350"><path d="M4 0.800L0.800 10.500h6.400z"/><path d="M4 10.500v5"/><ellipse cx="12" cy="5.200" rx="3.300" ry="4.400"/><path d="M12 9.600v6"/></g></g><g transform="translate(1101.3 82.2) scale(0.920)"><g fill="none" stroke="#98c08c" stroke-width="1.350"><path d="M4 0.800L0.800 10.500h6.400z"/><path d="M4 10.500v5"/><ellipse cx="12" cy="5.200" rx="3.300" ry="4.400"/><path d="M12 9.600v6"/></g></g><g transform="translate(1059.6 108.6) scale(0.920)"><g fill="none" stroke="#98c08c" stroke-width="1.350"><path d="M4 0.800L0.800 10.500h6.400z"/><path d="M4 10.500v5"/><ellipse cx="12" cy="5.200" rx="3.300" ry="4.400"/><path d="M12 9.600v6"/></g></g><g transform="translate(933 131.3) scale(0.920)"><g fill="none" stroke="#98c08c" stroke-width="1.350"><path d="M4 0.800L0.800 10.500h6.400z"/><path d="M4 10.500v5"/><ellipse cx="12" cy="5.200" rx="3.300" ry="4.400"/><path d="M12 9.600v6"/></g></g><g transform="translate(1027.4 135.2) scale(0.920)"><g fill="none" stroke="#98c08c" stroke-width="1.350"><path d="M4 0.800L0.800 10.500h6.400z"/><path d="M4 10.500v5"/><ellipse cx="12" cy="5.200" rx="3.300" ry="4.400"/><path d="M12 9.600v6"/></g></g><g transform="translate(971.6 143.6) scale(0.920)"><g fill="none" stroke="#98c08c" stroke-width="1.350"><path d="M4 0.800L0.800 10.500h6.400z"/><path d="M4 10.500v5"/><ellipse cx="12" cy="5.200" rx="3.300" ry="4.400"/><path d="M12 9.600v6"/></g></g><g transform="translate(1096.2 140) scale(0.920)"><g fill="none" stroke="#98c08c" stroke-width="1.350"><path d="M4 0.800L0.800 10.500h6.400z"/><path d="M4 10.500v5"/><ellipse cx="12" cy="5.200" rx="3.300" ry="4.400"/><path d="M12 9.600v6"/></g></g><g transform="translate(1008.6 178.1) scale(0.920)"><g fill="none" stroke="#98c08c" stroke-width="1.350"><path d="M4 0.800L0.800 10.500h6.400z"/><path d="M4 10.500v5"/><ellipse cx="12" cy="5.200" rx="3.300" ry="4.400"/><path d="M12 9.600v6"/></g></g><g transform="translate(1134.6 168.3) scale(0.920)"><g fill="none" stroke="#98c08c" stroke-width="1.350"><path d="M4 0.800L0.800 10.500h6.400z"/><path d="M4 10.500v5"/><ellipse cx="12" cy="5.200" rx="3.300" ry="4.400"/><path d="M12 9.600v6"/></g></g><g transform="translate(1053 192.3) scale(0.920)"><g fill="none" stroke="#98c08c" stroke-width="1.350"><path d="M4 0.800L0.800 10.500h6.400z"/><path d="M4 10.500v5"/><ellipse cx="12" cy="5.200" rx="3.300" ry="4.400"/><path d="M12 9.600v6"/></g></g><g transform="translate(1097.4 194.2) scale(0.920)"><g fill="none" stroke="#98c08c" stroke-width="1.350"><path d="M4 0.800L0.800 10.500h6.400z"/><path d="M4 10.500v5"/><ellipse cx="12" cy="5.200" rx="3.300" ry="4.400"/><path d="M12 9.600v6"/></g></g><g transform="translate(1022.3 230.4) scale(0.920)"><g fill="none" stroke="#98c08c" stroke-width="1.350"><path d="M4 0.800L0.800 10.500h6.400z"/><path d="M4 10.500v5"/><ellipse cx="12" cy="5.200" rx="3.300" ry="4.400"/><path d="M12 9.600v6"/></g></g><g transform="translate(1108 234.3) scale(0.920)"><g fill="none" stroke="#98c08c" stroke-width="1.350"><path d="M4 0.800L0.800 10.500h6.400z"/><path d="M4 10.500v5"/><ellipse cx="12" cy="5.200" rx="3.300" ry="4.400"/><path d="M12 9.600v6"/></g></g><g transform="translate(1064.6 248.1) scale(0.920)"><g fill="none" stroke="#98c08c" stroke-width="1.350"><path d="M4 0.800L0.800 10.500h6.400z"/><path d="M4 10.500v5"/><ellipse cx="12" cy="5.200" rx="3.300" ry="4.400"/><path d="M12 9.600v6"/></g></g><g transform="translate(1138.3 263.6) scale(0.920)"><g fill="none" stroke="#98c08c" stroke-width="1.350"><path d="M4 0.800L0.800 10.500h6.400z"/><path d="M4 10.500v5"/><ellipse cx="12" cy="5.200" rx="3.300" ry="4.400"/><path d="M12 9.600v6"/></g></g><g transform="translate(1001.1 273.6) scale(0.920)"><g fill="none" stroke="#98c08c" stroke-width="1.350"><path d="M4 0.800L0.800 10.500h6.400z"/><path d="M4 10.500v5"/><ellipse cx="12" cy="5.200" rx="3.300" ry="4.400"/><path d="M12 9.600v6"/></g></g><g transform="translate(1039.2 288.2) scale(0.920)"><g fill="none" stroke="#98c08c" stroke-width="1.350"><path d="M4 0.800L0.800 10.500h6.400z"/><path d="M4 10.500v5"/><ellipse cx="12" cy="5.200" rx="3.300" ry="4.400"/><path d="M12 9.600v6"/></g></g><g transform="translate(1097.4 289.4) scale(0.920)"><g fill="none" stroke="#98c08c" stroke-width="1.350"><path d="M4 0.800L0.800 10.500h6.400z"/><path d="M4 10.500v5"/><ellipse cx="12" cy="5.200" rx="3.300" ry="4.400"/><path d="M12 9.600v6"/></g></g><g transform="translate(918.1 289.4) scale(0.920)"><g fill="none" stroke="#98c08c" stroke-width="1.350"><path d="M4 0.800L0.800 10.500h6.400z"/><path d="M4 10.500v5"/><ellipse cx="12" cy="5.200" rx="3.300" ry="4.400"/><path d="M12 9.600v6"/></g></g><g transform="translate(961.6 302.4) scale(0.920)"><g fill="none" stroke="#98c08c" stroke-width="1.350"><path d="M4 0.800L0.800 10.500h6.400z"/><path d="M4 10.500v5"/><ellipse cx="12" cy="5.200" rx="3.300" ry="4.400"/><path d="M12 9.600v6"/></g></g><g transform="translate(1010.6 322.6) scale(0.920)"><g fill="none" stroke="#98c08c" stroke-width="1.350"><path d="M4 0.800L0.800 10.500h6.400z"/><path d="M4 10.500v5"/><ellipse cx="12" cy="5.200" rx="3.300" ry="4.400"/><path d="M12 9.600v6"/></g></g><g transform="translate(1073.1 334.6) scale(0.920)"><g fill="none" stroke="#98c08c" stroke-width="1.350"><path d="M4 0.800L0.800 10.500h6.400z"/><path d="M4 10.500v5"/><ellipse cx="12" cy="5.200" rx="3.300" ry="4.400"/><path d="M12 9.600v6"/></g></g><g transform="translate(1120.6 328.3) scale(0.920)"><g fill="none" stroke="#98c08c" stroke-width="1.350"><path d="M4 0.800L0.800 10.500h6.400z"/><path d="M4 10.500v5"/><ellipse cx="12" cy="5.200" rx="3.300" ry="4.400"/><path d="M12 9.600v6"/></g></g><g transform="translate(962.6 348.3) scale(0.920)"><g fill="none" stroke="#98c08c" stroke-width="1.350"><path d="M4 0.800L0.800 10.500h6.400z"/><path d="M4 10.500v5"/><ellipse cx="12" cy="5.200" rx="3.300" ry="4.400"/><path d="M12 9.600v6"/></g></g><g transform="translate(1002 375.6) scale(0.920)"><g fill="none" stroke="#98c08c" stroke-width="1.350"><path d="M4 0.800L0.800 10.500h6.400z"/><path d="M4 10.500v5"/><ellipse cx="12" cy="5.200" rx="3.300" ry="4.400"/><path d="M12 9.600v6"/></g></g><g transform="translate(1047.4 373.6) scale(0.920)"><g fill="none" stroke="#98c08c" stroke-width="1.350"><path d="M4 0.800L0.800 10.500h6.400z"/><path d="M4 10.500v5"/><ellipse cx="12" cy="5.200" rx="3.300" ry="4.400"/><path d="M12 9.600v6"/></g></g><g transform="translate(1102.6 375.6) scale(0.920)"><g fill="none" stroke="#98c08c" stroke-width="1.350"><path d="M4 0.800L0.800 10.500h6.400z"/><path d="M4 10.500v5"/><ellipse cx="12" cy="5.200" rx="3.300" ry="4.400"/><path d="M12 9.600v6"/></g></g><g transform="translate(1145.1 394.6) scale(0.920)"><g fill="none" stroke="#98c08c" stroke-width="1.350"><path d="M4 0.800L0.800 10.500h6.400z"/><path d="M4 10.500v5"/><ellipse cx="12" cy="5.200" rx="3.300" ry="4.400"/><path d="M12 9.600v6"/></g></g><g transform="translate(1022.6 421.6) scale(0.920)"><g fill="none" stroke="#98c08c" stroke-width="1.350"><path d="M4 0.800L0.800 10.500h6.400z"/><path d="M4 10.500v5"/><ellipse cx="12" cy="5.200" rx="3.300" ry="4.400"/><path d="M12 9.600v6"/></g></g><g transform="translate(1067.4 428.3) scale(0.920)"><g fill="none" stroke="#98c08c" stroke-width="1.350"><path d="M4 0.800L0.800 10.500h6.400z"/><path d="M4 10.500v5"/><ellipse cx="12" cy="5.200" rx="3.300" ry="4.400"/><path d="M12 9.600v6"/></g></g><g transform="translate(1113.1 424.6) scale(0.920)"><g fill="none" stroke="#98c08c" stroke-width="1.350"><path d="M4 0.800L0.800 10.500h6.400z"/><path d="M4 10.500v5"/><ellipse cx="12" cy="5.200" rx="3.300" ry="4.400"/><path d="M12 9.600v6"/></g></g><g transform="translate(981.6 433.6) scale(0.920)"><g fill="none" stroke="#98c08c" stroke-width="1.350"><path d="M4 0.800L0.800 10.500h6.400z"/><path d="M4 10.500v5"/><ellipse cx="12" cy="5.200" rx="3.300" ry="4.400"/><path d="M12 9.600v6"/></g></g><g transform="translate(1100.6 463.6) scale(0.920)"><g fill="none" stroke="#98c08c" stroke-width="1.350"><path d="M4 0.800L0.800 10.500h6.400z"/><path d="M4 10.500v5"/><ellipse cx="12" cy="5.200" rx="3.300" ry="4.400"/><path d="M12 9.600v6"/></g></g><g transform="translate(963.6 474.6) scale(0.920)"><g fill="none" stroke="#98c08c" stroke-width="1.350"><path d="M4 0.800L0.800 10.500h6.400z"/><path d="M4 10.500v5"/><ellipse cx="12" cy="5.200" rx="3.300" ry="4.400"/><path d="M12 9.600v6"/></g></g><g transform="translate(930.6 512.6) scale(0.920)"><g fill="none" stroke="#98c08c" stroke-width="1.350"><path d="M4 0.800L0.800 10.500h6.400z"/><path d="M4 10.500v5"/><ellipse cx="12" cy="5.200" rx="3.300" ry="4.400"/><path d="M12 9.600v6"/></g></g><g transform="translate(969.6 526) scale(0.920)"><g fill="none" stroke="#98c08c" stroke-width="1.350"><path d="M4 0.800L0.800 10.500h6.400z"/><path d="M4 10.500v5"/><ellipse cx="12" cy="5.200" rx="3.300" ry="4.400"/><path d="M12 9.600v6"/></g></g><g transform="translate(1026 516.3) scale(0.920)"><g fill="none" stroke="#98c08c" stroke-width="1.350"><path d="M4 0.800L0.800 10.500h6.400z"/><path d="M4 10.500v5"/><ellipse cx="12" cy="5.200" rx="3.300" ry="4.400"/><path d="M12 9.600v6"/></g></g><g transform="translate(942.6 564.6) scale(0.920)"><g fill="none" stroke="#98c08c" stroke-width="1.350"><path d="M4 0.800L0.800 10.500h6.400z"/><path d="M4 10.500v5"/><ellipse cx="12" cy="5.200" rx="3.300" ry="4.400"/><path d="M12 9.600v6"/></g></g><g transform="translate(1007.4 560.3) scale(0.920)"><g fill="none" stroke="#98c08c" stroke-width="1.350"><path d="M4 0.800L0.800 10.500h6.400z"/><path d="M4 10.500v5"/><ellipse cx="12" cy="5.200" rx="3.300" ry="4.400"/><path d="M12 9.600v6"/></g></g><g transform="translate(1050.6 572.6) scale(0.920)"><g fill="none" stroke="#98c08c" stroke-width="1.350"><path d="M4 0.800L0.800 10.500h6.400z"/><path d="M4 10.500v5"/><ellipse cx="12" cy="5.200" rx="3.300" ry="4.400"/><path d="M12 9.600v6"/></g></g><g transform="translate(1097.1 574.6) scale(0.920)"><g fill="none" stroke="#98c08c" stroke-width="1.350"><path d="M4 0.800L0.800 10.500h6.400z"/><path d="M4 10.500v5"/><ellipse cx="12" cy="5.200" rx="3.300" ry="4.400"/><path d="M12 9.600v6"/></g></g><g transform="translate(975.4 597.1) scale(0.920)"><g fill="none" stroke="#98c08c" stroke-width="1.350"><path d="M4 0.800L0.800 10.500h6.400z"/><path d="M4 10.500v5"/><ellipse cx="12" cy="5.200" rx="3.300" ry="4.400"/><path d="M12 9.600v6"/></g></g><g transform="translate(1020.6 610.6) scale(0.920)"><g fill="none" stroke="#98c08c" stroke-width="1.350"><path d="M4 0.800L0.800 10.500h6.400z"/><path d="M4 10.500v5"/><ellipse cx="12" cy="5.200" rx="3.300" ry="4.400"/><path d="M12 9.600v6"/></g></g><g transform="translate(1105.1 614) scale(0.920)"><g fill="none" stroke="#98c08c" stroke-width="1.350"><path d="M4 0.800L0.800 10.500h6.400z"/><path d="M4 10.500v5"/><ellipse cx="12" cy="5.200" rx="3.300" ry="4.400"/><path d="M12 9.600v6"/></g></g><g transform="translate(1062.6 630.6) scale(0.920)"><g fill="none" stroke="#98c08c" stroke-width="1.350"><path d="M4 0.800L0.800 10.500h6.400z"/><path d="M4 10.500v5"/><ellipse cx="12" cy="5.200" rx="3.300" ry="4.400"/><path d="M12 9.600v6"/></g></g><g transform="translate(996.3 652.6) scale(0.920)"><g fill="none" stroke="#98c08c" stroke-width="1.350"><path d="M4 0.800L0.800 10.500h6.400z"/><path d="M4 10.500v5"/><ellipse cx="12" cy="5.200" rx="3.300" ry="4.400"/><path d="M12 9.600v6"/></g></g><g transform="translate(1138.6 646) scale(0.920)"><g fill="none" stroke="#98c08c" stroke-width="1.350"><path d="M4 0.800L0.800 10.500h6.400z"/><path d="M4 10.500v5"/><ellipse cx="12" cy="5.200" rx="3.300" ry="4.400"/><path d="M12 9.600v6"/></g></g><g transform="translate(929.6 637.1) scale(0.920)"><g fill="none" stroke="#98c08c" stroke-width="1.350"><path d="M4 0.800L0.800 10.500h6.400z"/><path d="M4 10.500v5"/><ellipse cx="12" cy="5.200" rx="3.300" ry="4.400"/><path d="M12 9.600v6"/></g></g><g transform="translate(435.6 658.6) scale(0.920)"><g fill="none" stroke="#98c08c" stroke-width="1.350"><path d="M4 0.800L0.800 10.500h6.400z"/><path d="M4 10.500v5"/><ellipse cx="12" cy="5.200" rx="3.300" ry="4.400"/><path d="M12 9.600v6"/></g></g><g transform="translate(616.6 654.6) scale(0.920)"><g fill="none" stroke="#98c08c" stroke-width="1.350"><path d="M4 0.800L0.800 10.500h6.400z"/><path d="M4 10.500v5"/><ellipse cx="12" cy="5.200" rx="3.300" ry="4.400"/><path d="M12 9.600v6"/></g></g><g transform="translate(818.6 660.6) scale(0.920)"><g fill="none" stroke="#98c08c" stroke-width="1.350"><path d="M4 0.800L0.800 10.500h6.400z"/><path d="M4 10.500v5"/><ellipse cx="12" cy="5.200" rx="3.300" ry="4.400"/><path d="M12 9.600v6"/></g></g><g transform="translate(329.6 667.6) scale(0.920)"><g fill="none" stroke="#98c08c" stroke-width="1.350"><path d="M4 0.800L0.800 10.500h6.400z"/><path d="M4 10.500v5"/><ellipse cx="12" cy="5.200" rx="3.300" ry="4.400"/><path d="M12 9.600v6"/></g></g><g transform="translate(755.6 647.6) scale(0.920)"><g fill="none" stroke="#98c08c" stroke-width="1.350"><path d="M4 0.800L0.800 10.500h6.400z"/><path d="M4 10.500v5"/><ellipse cx="12" cy="5.200" rx="3.300" ry="4.400"/><path d="M12 9.600v6"/></g></g><g transform="translate(154.6 659.6) scale(0.920)"><g fill="none" stroke="#98c08c" stroke-width="1.350"><path d="M4 0.800L0.800 10.500h6.400z"/><path d="M4 10.500v5"/><ellipse cx="12" cy="5.200" rx="3.300" ry="4.400"/><path d="M12 9.600v6"/></g></g><g transform="translate(269.6 663.6) scale(0.920)"><g fill="none" stroke="#98c08c" stroke-width="1.350"><path d="M4 0.800L0.800 10.500h6.400z"/><path d="M4 10.500v5"/><ellipse cx="12" cy="5.200" rx="3.300" ry="4.400"/><path d="M12 9.600v6"/></g></g><g transform="translate(987 225)" stroke="#6b6b78" fill="none" stroke-width="1.4"><rect x="-4" y="-9" width="8" height="6" fill="#6b6b78"/><path d="M-4 -3L-5.5 9M4 -3L5.5 9M-5 3h10M-6 -10h12"/></g><text transform="translate(31 194) rotate(-44)" font-family="Liberation Sans" font-size="12" text-anchor="middle" fill="#5a5a5a" stroke="#eef3e8" stroke-width="2.400" paint-order="stroke" letter-spacing="0.600">Eselsstraße</text><polyline points="97,231 86,233 93,332 97,369" fill="none" stroke="#0b5f0b" stroke-width="7" stroke-linejoin="round" stroke-linecap="round"/><polyline points="97,417 14,573 97,673" fill="none" stroke="#0b5f0b" stroke-width="7" stroke-linejoin="round" stroke-linecap="round"/><polyline points="907,144 958,163 1000,167 969,237 948,309 939,330 926,344 983,399 1128.5,557.5 859,676" fill="none" stroke="#0b5f0b" stroke-width="7" stroke-linejoin="round" stroke-linecap="round"/><polyline points="913,330.3 1140.3,552.4 1157,583" fill="none" stroke="#000" stroke-width="7" stroke-linejoin="round" stroke-linecap="round"/><polyline points="913,431.8 984,406.3" fill="none" stroke="#000" stroke-width="4" stroke-linejoin="round" stroke-linecap="round"/><circle cx="921" cy="346" r="7.4" fill="#fff" stroke="#000" stroke-width="1.1"/><circle cx="921" cy="346" r="2.4" fill="#000"/><circle cx="920" cy="359" r="7.4" fill="#fff" stroke="#000" stroke-width="1.1"/><circle cx="920" cy="359" r="2.4" fill="#000"/><circle cx="932.5" cy="373.4" r="7.4" fill="#fff" stroke="#000" stroke-width="1.1"/><circle cx="932.5" cy="373.4" r="2.4" fill="#000"/><circle cx="950.8" cy="394.3" r="7.4" fill="#fff" stroke="#000" stroke-width="1.1"/><circle cx="950.8" cy="394.3" r="2.4" fill="#000"/><circle cx="977.9" cy="397.4" r="7.4" fill="#fff" stroke="#000" stroke-width="1.1"/><circle cx="977.9" cy="397.4" r="2.4" fill="#000"/><circle cx="960.5" cy="417" r="7.4" fill="#fff" stroke="#000" stroke-width="1.1"/><circle cx="960.5" cy="417" r="2.4" fill="#000"/><circle cx="955.7" cy="434.3" r="7.4" fill="#fff" stroke="#000" stroke-width="1.1"/><circle cx="955.7" cy="434.3" r="2.4" fill="#000"/><circle cx="923" cy="421.4" r="7.4" fill="#fff" stroke="#000" stroke-width="1.1"/><circle cx="923" cy="421.4" r="2.4" fill="#000"/><circle cx="919" cy="432.5" r="7.4" fill="#fff" stroke="#000" stroke-width="1.1"/><circle cx="919" cy="432.5" r="2.4" fill="#000"/><circle cx="922" cy="448.5" r="7.4" fill="#fff" stroke="#000" stroke-width="1.1"/><circle cx="922" cy="448.5" r="2.4" fill="#000"/><circle cx="1049" cy="426.8" r="7.4" fill="#fff" stroke="#000" stroke-width="1.1"/><circle cx="1049" cy="426.8" r="2.4" fill="#000"/><circle cx="1043.7" cy="468" r="7.4" fill="#fff" stroke="#000" stroke-width="1.1"/><circle cx="1043.7" cy="468" r="2.4" fill="#000"/><circle cx="1037.4" cy="462.3" r="7.4" fill="#fff" stroke="#000" stroke-width="1.1"/><circle cx="1037.4" cy="462.3" r="2.4" fill="#000"/><circle cx="1029.4" cy="468" r="7.4" fill="#fff" stroke="#000" stroke-width="1.1"/><circle cx="1029.4" cy="468" r="2.4" fill="#000"/><circle cx="1017.9" cy="481" r="7.4" fill="#fff" stroke="#000" stroke-width="1.1"/><circle cx="1017.9" cy="481" r="2.4" fill="#000"/><circle cx="1047.2" cy="486.8" r="7.4" fill="#fff" stroke="#000" stroke-width="1.1"/><circle cx="1047.2" cy="486.8" r="2.4" fill="#000"/><circle cx="1071.2" cy="472" r="7.4" fill="#fff" stroke="#000" stroke-width="1.1"/><circle cx="1071.2" cy="472" r="2.4" fill="#000"/><circle cx="1084.6" cy="497.4" r="7.4" fill="#fff" stroke="#000" stroke-width="1.1"/><circle cx="1084.6" cy="497.4" r="2.4" fill="#000"/><circle cx="1105.4" cy="526.8" r="7.4" fill="#fff" stroke="#000" stroke-width="1.1"/><circle cx="1105.4" cy="526.8" r="2.4" fill="#000"/><circle cx="1075.7" cy="535.7" r="7.4" fill="#fff" stroke="#000" stroke-width="1.1"/><circle cx="1075.7" cy="535.7" r="2.4" fill="#000"/><circle cx="384.7" cy="655.7" r="7.4" fill="#fff" stroke="#000" stroke-width="1.1"/><circle cx="384.7" cy="655.7" r="2.4" fill="#000"/><circle cx="401.7" cy="655.7" r="7.4" fill="#fff" stroke="#000" stroke-width="1.1"/><circle cx="401.7" cy="655.7" r="2.4" fill="#000"/><circle cx="421" cy="670" r="7.4" fill="#fff" stroke="#000" stroke-width="1.1"/><circle cx="421" cy="670" r="2.4" fill="#000"/></svg>
<div class="b" style="left:475px;top:160px;width:827px;height:684px;background:#f0f0f0;box-shadow:0 2px 11px 1px rgba(0,0,0,.36);border:1px solid #666;"></div>
<div class="b" style="left:476px;top:161px;width:825px;height:37px;background:#ffffff;"></div>
<svg class="b" style="left:484px;top:170px;overflow:visible;" width="20" height="20" viewBox="0 0 24 24"><defs><linearGradient id="qg" x1="0" y1="0" x2="0" y2="1"><stop offset="0" stop-color="#7aad3a"/><stop offset="1" stop-color="#4f9a3a"/></linearGradient></defs><circle cx="11.500" cy="11.500" r="8.600" fill="none" stroke="#6aa336" stroke-width="4.400"/><circle cx="12" cy="12" r="2.400" fill="#ee8a2e"/><path d="M13.500 13.500L22.500 22.500" stroke="#f2f9ea" stroke-width="6.200"/><path d="M14 14L23 23" stroke="#5b9a3c" stroke-width="4.400"/></svg>
<span class="t" style="left:510px;top:170px;font-size:15px;line-height:20px;color:#000;letter-spacing:-0.323px;">Layereigenschaften - NSG_1983_tracks | Beschriftungen</span>
<svg class="b" style="left:1272px;top:171px;" width="16" height="16" viewBox="0 0 16 16"><path d="M2.400 2.400L13.600 13.600M13.600 2.400L2.400 13.600" stroke="#111" stroke-width="1.300"/></svg>
<div class="b" style="left:476px;top:198px;width:213px;height:21px;background:#ffffff;border-right:1px solid #7a7a7a;border-top:1px solid #6a6a6a;"></div>
<svg class="b" style="left:484px;top:202px;" width="14" height="14" viewBox="0 0 14 14"><circle cx="5.3" cy="5.3" r="4" fill="none" stroke="#8c8c8c" stroke-width="1.3"/><path d="M8.2 8.2L12.5 12.5" stroke="#8c8c8c" stroke-width="1.6"/></svg>
<div class="b" style="left:476px;top:219px;width:192px;height:624px;background:#5f5f5f;"></div>
<div class="b" style="left:668px;top:219px;width:21px;height:8px;background:#5f5f5f;"></div>
<div class="b" style="left:668px;top:227px;width:21px;height:616px;background:#f0f0f0;"></div>
<div class="b" style="left:670px;top:248px;width:17px;height:484px;background:#cdcdcd;"></div>
<svg class="b" style="left:673px;top:233px;" width="12" height="9" viewBox="0 0 12 9"><path d="M1.5 7L6 2.5L10.5 7" fill="none" stroke="#404040" stroke-width="1.8"/></svg>
<svg class="b" style="left:673px;top:828px;" width="12" height="9" viewBox="0 0 12 9"><path d="M1.5 2L6 6.5L10.5 2" fill="none" stroke="#404040" stroke-width="1.8"/></svg>
<svg class="b" style="left:479.5px;top:233px;overflow:visible;" width="26" height="26" viewBox="0 0 24 24"><defs><radialGradient id="ig" cx="0.350" cy="0.300" r="0.800"><stop offset="0" stop-color="#9fc0e6"/><stop offset="1" stop-color="#4f7fb8"/></radialGradient></defs><circle cx="12" cy="12" r="11" fill="url(#ig)" stroke="#4a74a8" stroke-width="0.800"/><text x="12" y="19" font-family="Liberation Serif" font-style="italic" font-weight="bold" font-size="20" text-anchor="middle" fill="#fff">i</text></svg>
<span class="t" style="left:513px;top:236.6px;font-size:15.5px;line-height:20px;color:#ececec;letter-spacing:0.042px;">Information</span>
<svg class="b" style="left:480.5px;top:272px;overflow:visible;" width="24" height="24" viewBox="0 0 24 24"><polygon points="21.01,11.42 23.61,12.14 23.61,15.86 21.01,16.58 20.92,16.78 22.26,19.13 19.63,21.76 17.28,20.42 17.08,20.51 16.36,23.11 12.64,23.11 11.92,20.51 11.72,20.42 9.37,21.76 6.74,19.13 8.08,16.78 7.99,16.58 5.39,15.86 5.39,12.14 7.99,11.42 8.08,11.22 6.74,8.87 9.37,6.24 11.72,7.58 11.92,7.49 12.64,4.89 16.36,4.89 17.08,7.49 17.28,7.58 19.63,6.24 22.26,8.87 20.92,11.22" fill="#e9e9e9" stroke="#8c8c8c" stroke-width="0.9" stroke-linejoin="round"/><circle cx="14.500" cy="14" r="4.300" fill="#7ea6d6" stroke="#6a6a6a" stroke-width="0.800"/><path d="M7 7L20.500 20.500" stroke="#6a5a14" stroke-width="4.600" stroke-linecap="round"/><path d="M7 7L20.500 20.500" stroke="#ecd874" stroke-width="3" stroke-linecap="round"/><circle cx="20" cy="20" r="0.900" fill="#6a5a14"/><path d="M3 1.200a4.600 4.600 0 1 0 6.600 5.800l-2-3l-3.200 .3z" fill="#f4f4f4" stroke="#8a8a8a" stroke-width="0.900"/></svg>
<span class="t" style="left:513px;top:274.6px;font-size:15.5px;line-height:20px;color:#ececec;letter-spacing:-0.301px;">Quelle</span>
<svg class="b" style="left:480.5px;top:310px;overflow:visible;" width="24" height="24" viewBox="0 0 24 24"><path d="M13.500 11L22.500 2" stroke="#e0a030" stroke-width="3.200" stroke-linecap="round"/><path d="M3 12L10 8L16.500 15.500L8 20.500z" fill="#d9473a"/><path d="M3 12L6.500 10L13 18L8 20.500z" fill="#e87a3a"/><path d="M6.500 10L10 8L16.500 15.500L13 18z" fill="#f0c23c"/><path d="M2 14L8 21.500L5 23L0.500 16.500z" fill="#5d8cc2"/><path d="M11 7.500L17 14" stroke="#8a8a8a" stroke-width="1.600"/></svg>
<span class="t" style="left:513px;top:312.6px;font-size:15.5px;line-height:20px;color:#ececec;letter-spacing:-0.283px;">Symbolisierung</span>
<div class="b" style="left:476px;top:341px;width:192px;height:38px;background:#f0f0f0;"></div>
<svg class="b" style="left:484px;top:348px;overflow:visible;" width="24" height="24" viewBox="0 0 24 24"><path d="M1 12L6 6.500H23V17.500H6z" fill="#b9d6a4" stroke="#7fae62" stroke-width="1" stroke-linejoin="round"/><text x="14.500" y="15.200" font-family="Liberation Sans" font-weight="bold" font-size="9.500" text-anchor="middle" fill="#2f5f3a">abc</text></svg>
<span class="t" style="left:516px;top:350.6px;font-size:15.5px;line-height:20px;color:#000;letter-spacing:-0.386px;">Beschriftungen</span>
<svg class="b" style="left:480.5px;top:386px;overflow:visible;" width="24" height="24" viewBox="0 0 24 24"><circle cx="9" cy="9" r="8" fill="#12a04c"/><path d="M9 9L2.45 4.41A8 8 0 0 1 15.55 4.41z" fill="#f4d81e"/><path d="M9 9L15.55 4.41A8 8 0 0 1 8.30 16.97z" fill="#b5171b"/><circle cx="9" cy="9" r="8" fill="none" stroke="#111" stroke-width="0.500" opacity="0.600"/><circle cx="9" cy="9" r="8" fill="none" stroke="#222" stroke-width="0.700"/><rect x="9.500" y="16" width="4.300" height="7.500" fill="#f4d81e" stroke="#8a7a10" stroke-width="0.600"/><rect x="14.300" y="10" width="4.300" height="13.500" fill="#12a04c" stroke="#0a6a30" stroke-width="0.600"/><rect x="19" y="17.500" width="4" height="6" fill="#c0181d" stroke="#7a1014" stroke-width="0.600"/></svg>
<span class="t" style="left:513px;top:388.6px;font-size:15.5px;line-height:20px;color:#ececec;letter-spacing:-0.123px;">Diagramme</span>
<svg class="b" style="left:480.5px;top:424px;overflow:visible;" width="24" height="24" viewBox="0 0 24 24"><path d="M1.500 7L12 12V23.500L1.500 18.500z" fill="#5dbb3a" stroke="#6a5a10" stroke-width="1"/><path d="M12 12L22.500 7V18.500L12 23.500z" fill="#f5e03a" stroke="#6a5a10" stroke-width="1"/><path d="M1.500 7L12 1.500L22.500 7L12 12z" fill="#f08a8a" stroke="#c03030" stroke-width="1"/></svg>
<span class="t" style="left:513px;top:426.6px;font-size:15.5px;line-height:20px;color:#ececec;letter-spacing:-0.281px;">3D-Ansicht</span>
<svg class="b" style="left:480.5px;top:462px;overflow:visible;" width="24" height="24" viewBox="0 0 24 24"><rect x="1.500" y="1.500" width="21" height="21" fill="#dfeaf6" stroke="#5d86b6" stroke-width="1.200"/><rect x="2" y="2" width="20" height="4" fill="#8fb1d6"/><path d="M3 9H21M3 12.500H21M3 16H21M3 19.500H21" stroke="#5d86b6" stroke-width="1.200"/><rect x="5.500" y="0.500" width="5.500" height="23" fill="#f5ea7a" stroke="#d6c84a" stroke-width="0.700" opacity="0.950"/></svg>
<span class="t" style="left:513px;top:464.6px;font-size:15.5px;line-height:20px;color:#ececec;letter-spacing:-0.490px;">Felder</span>
<svg class="b" style="left:480.5px;top:500px;overflow:visible;" width="24" height="24" viewBox="0 0 24 24"><rect x="1.500" y="2.500" width="21" height="19" fill="#e9eff7" stroke="#9db6d6" stroke-width="1.200"/><rect x="10" y="5.500" width="9.500" height="4.500" fill="#fff" stroke="#5d86b6" stroke-width="1"/><rect x="10" y="13.500" width="9.500" height="4.500" fill="#fff" stroke="#5d86b6" stroke-width="1"/><rect x="4" y="6.500" width="4" height="2.500" fill="#2c3e50"/><rect x="4" y="14.500" width="4" height="2.500" fill="#2c3e50"/></svg>
<span class="t" style="left:513px;top:502.6px;font-size:15.5px;line-height:20px;color:#ececec;letter-spacing:0.128px;">Attributformular</span>
<svg class="b" style="left:480.5px;top:538px;overflow:visible;" width="24" height="24" viewBox="0 0 24 24"><defs><linearGradient id="jg" x1="0" y1="0" x2="1" y2="0"><stop offset="0" stop-color="#3f74b4"/><stop offset="1" stop-color="#7aa5d8"/></linearGradient></defs><path d="M8.500 12L22.500 2.500V21.500z" fill="url(#jg)"/><circle cx="3.500" cy="12" r="2.400" fill="#7aa5d8"/></svg>
<span class="t" style="left:513px;top:540.6px;font-size:15.5px;line-height:20px;color:#ececec;letter-spacing:-0.407px;">Verknüpfungen</span>
<svg class="b" style="left:480.5px;top:576px;overflow:visible;" width="24" height="24" viewBox="0 0 24 24"><path d="M9 1.500H17.500L22.500 6.500V22.500H9z" fill="#fff" stroke="#cfcfcf" stroke-width="0.800"/><path d="M17.500 1.500V6.500H22.500z" fill="#ddd"/><defs><linearGradient id="ag" x1="0" y1="0" x2="1" y2="0"><stop offset="0" stop-color="#8a8a8a"/><stop offset="0.500" stop-color="#d0d0d0"/><stop offset="1" stop-color="#8a8a8a"/></linearGradient></defs><path d="M0.500 9.500V20.500C0.500 24 16.500 24 16.500 20.500V9.500" fill="url(#ag)" stroke="#4a4a4a" stroke-width="0.900"/><ellipse cx="8.500" cy="9.500" rx="8" ry="3" fill="#dedede" stroke="#4a4a4a" stroke-width="0.900"/><path d="M0.500 15C0.500 18.200 16.500 18.200 16.500 15" fill="none" stroke="#4a4a4a" stroke-width="0.900"/></svg>
<span class="t" style="left:513px;top:578.6px;font-size:15.5px;line-height:20px;color:#ececec;letter-spacing:-0.287px;">Hilfsspeicher</span>
<svg class="b" style="left:480.5px;top:614px;overflow:visible;" width="24" height="24" viewBox="0 0 24 24"><polygon points="20.29,7.81 23.10,8.54 23.10,12.46 20.29,13.19 20.20,13.40 21.67,15.91 18.91,18.67 16.40,17.20 16.19,17.29 15.46,20.10 11.54,20.10 10.81,17.29 10.60,17.20 8.09,18.67 5.33,15.91 6.80,13.40 6.71,13.19 3.90,12.46 3.90,8.54 6.71,7.81 6.80,7.60 5.33,5.09 8.09,2.33 10.60,3.80 10.81,3.71 11.54,0.90 15.46,0.90 16.19,3.71 16.40,3.80 18.91,2.33 21.67,5.09 20.20,7.60" fill="#e6e6e6" stroke="#8a8a8a" stroke-width="0.9" stroke-linejoin="round"/><circle cx="13.500" cy="10.500" r="5.200" fill="#5d8cc2" stroke="#4a74a8" stroke-width="0.800"/><path d="M11.700 7.700L16.700 10.500L11.700 13.300z" fill="#fff"/><polygon points="6.51,19.01 7.72,19.24 7.72,20.76 6.51,20.99 6.48,21.07 7.17,22.10 6.10,23.17 5.07,22.48 4.99,22.51 4.76,23.72 3.24,23.72 3.01,22.51 2.93,22.48 1.90,23.17 0.83,22.10 1.52,21.07 1.49,20.99 0.28,20.76 0.28,19.24 1.49,19.01 1.52,18.93 0.83,17.90 1.90,16.83 2.93,17.52 3.01,17.49 3.24,16.28 4.76,16.28 4.99,17.49 5.07,17.52 6.10,16.83 7.17,17.90 6.48,18.93" fill="#8fb4e0" stroke="#4a74a8" stroke-width="0.6" stroke-linejoin="round"/><circle cx="4" cy="20" r="1.200" fill="#5f5f5f"/></svg>
<span class="t" style="left:513px;top:616.6px;font-size:15.5px;line-height:20px;color:#ececec;letter-spacing:-0.165px;">Aktionen</span>
<svg class="b" style="left:480.5px;top:652px;overflow:visible;" width="24" height="24" viewBox="0 0 24 24"><defs><linearGradient id="dg" x1="0" y1="0" x2="0" y2="1"><stop offset="0" stop-color="#f7efb0"/><stop offset="1" stop-color="#dccb6a"/></linearGradient></defs><path d="M5.500 2H18.500a4 4 0 0 1 4 4V11.500a4 4 0 0 1-4 4H13L6.500 22.500L8 15.500H5.500a4 4 0 0 1-4-4V6a4 4 0 0 1 4-4z" fill="url(#dg)" stroke="#b5a548" stroke-width="1" stroke-linejoin="round"/></svg>
<span class="t" style="left:513px;top:654.6px;font-size:15.5px;line-height:20px;color:#ececec;letter-spacing:-0.330px;">Anzeigen</span>
<svg class="b" style="left:480.5px;top:690px;overflow:visible;" width="24" height="24" viewBox="0 0 24 24"><path d="M12.500 11.500L22 2" stroke="#d99a30" stroke-width="3" stroke-linecap="round"/><path d="M6 10L14 18L9 23L1 15z" fill="#e0b060" stroke="#a87a30" stroke-width="0.800"/><path d="M6 10L9 7L17 15L14 18z" fill="#c89040" stroke="#a87a30" stroke-width="0.800"/><path d="M4 17.500L7 20.500M6.500 15L9.500 18" stroke="#a87a30" stroke-width="0.700"/></svg>
<span class="t" style="left:513px;top:692.6px;font-size:15.5px;line-height:20px;color:#ececec;letter-spacing:-0.309px;">Darstellung</span>
<svg class="b" style="left:480.5px;top:728px;overflow:visible;" width="24" height="24" viewBox="0 0 24 24"><text x="11" y="21.500" font-family="Liberation Serif" font-size="34" text-anchor="middle" fill="#6d3a7d">ε</text></svg>
<span class="t" style="left:513px;top:730.6px;font-size:15.5px;line-height:20px;color:#ececec;letter-spacing:-0.260px;">Variablen</span>
<svg class="b" style="left:480.5px;top:766px;overflow:visible;" width="24" height="24" viewBox="0 0 24 24"><path d="M3 1.500H15.500L20.500 6.500V22.500H3z" fill="#fdfdfd" stroke="#bdbdbd" stroke-width="0.900"/><path d="M15.500 1.500V6.500H20.500z" fill="#dcdcdc"/><path d="M5.500 8H17M5.500 10.500H17M5.500 13H17M5.500 15.500H14M5.500 18H13M5.500 20.500H16" stroke="#666" stroke-width="0.900"/><path d="M21 5.500L23.500 7.500L15 19.500L11.500 21L12.500 17.500z" fill="#e8743a" stroke="#b5521f" stroke-width="0.800"/><path d="M12.500 17.500L15 19.500" stroke="#b5521f" stroke-width="0.800"/></svg>
<span class="t" style="left:513px;top:768.6px;font-size:15.5px;line-height:20px;color:#ececec;letter-spacing:-0.139px;">Metadaten</span>
<svg class="b" style="left:480.5px;top:804px;overflow:visible;" width="24" height="24" viewBox="0 0 24 24"><rect x="1.500" y="1.500" width="21" height="21" fill="#e9edf2" stroke="#cfd6df" stroke-width="0.800"/><rect x="2.500" y="2.500" width="9" height="8.500" fill="#fdfdfd" stroke="#c4c4c4" stroke-width="0.600"/><rect x="12.500" y="13" width="9" height="8.500" fill="#fdfdfd" stroke="#c4c4c4" stroke-width="0.600"/><path d="M10 6H18V12H21L16.500 17.500L12 12H15V9H10z" fill="#5a9adf" stroke="#2f6ab5" stroke-width="0.800"/><path d="M14 18.500H6V12.500H3L7.500 7L12 12.500H9V15.500H14z" fill="#5a9adf" stroke="#2f6ab5" stroke-width="0.800"/></svg>
<span class="t" style="left:513px;top:806.6px;font-size:15.5px;line-height:20px;color:#ececec;letter-spacing:-0.134px;">Abhängigkeiten</span>
<div class="b" style="left:706px;top:201px;width:548px;height:25.5px;background:#cce4f7;border:1px solid #0078d7;"></div>
<svg class="b" style="left:712px;top:208px;" width="20" height="12" viewBox="0 0 20 12"><path d="M1 6L4 1.500H17.500V10.500H4z" fill="none" stroke="#8fa0b0" stroke-width="1" stroke-dasharray="1.300 1.300" stroke-linejoin="round"/></svg>
<span class="t" style="left:733px;top:205.5px;font-size:13px;line-height:17px;color:#000;letter-spacing:-0.174px;">Keine Beschriftung</span>
<svg class="b" style="left:1236px;top:209.5px;" width="12" height="8" viewBox="0 0 12 8"><path d="M1.500 1.500L6 6L10.500 1.500" fill="none" stroke="#333" stroke-width="1.200"/></svg>
<div class="b" style="left:1261px;top:202px;width:25px;height:24px;background:#e1e1e1;border:1px solid #adadad;"></div>
<svg class="b" style="left:1262.5px;top:203px;overflow:visible;" width="22" height="22" viewBox="0 0 24 24"><g transform="rotate(45 7 7)"><rect x="2" y="2" width="10" height="10" fill="#5a7aa8"/><path d="M2 5.300H12M2 8.700H12M5.300 2V12M8.700 2V12" stroke="#2f4a70" stroke-width="0.900"/></g><polygon points="19.98,12.59 22.37,13.08 22.37,15.92 19.98,16.41 19.92,16.56 21.44,18.47 19.62,20.65 17.47,19.48 17.33,19.56 17.27,22.01 14.47,22.50 13.57,20.23 13.41,20.20 11.80,22.03 9.33,20.61 10.11,18.29 10.01,18.17 7.59,18.53 6.62,15.86 8.70,14.58 8.70,14.42 6.62,13.14 7.59,10.47 10.01,10.83 10.11,10.71 9.33,8.39 11.80,6.97 13.41,8.80 13.57,8.77 14.47,6.50 17.27,6.99 17.33,9.44 17.47,9.52 19.62,8.35 21.44,10.53 19.92,12.44" fill="#f6df2a" stroke="#c9a814" stroke-width="0.8" stroke-linejoin="round"/><circle cx="14.500" cy="14.500" r="2.300" fill="#fdf6c0" stroke="#c9a814" stroke-width="0.800"/></svg>
<div class="b" style="left:706px;top:226.5px;width:548px;height:81px;background:#ffffff;border:1px solid #767676;border-top-color:#a0a0a0;box-shadow:2px 2px 2px rgba(0,0,0,.5);"></div>
<div class="b" style="left:707px;top:247.5px;width:546px;height:19.5px;background:#0078d7;"></div>
<div class="b" style="left:733px;top:247.5px;width:520px;height:19.5px;border-top:1px dotted rgba(255,255,255,.6);border-bottom:1px dotted rgba(255,255,255,.6);border-left:1px dotted rgba(255,255,255,.6);"></div>
<svg class="b" style="left:711px;top:231.5px;" width="20" height="12" viewBox="0 0 20 12"><path d="M1 6L4 1.500H17.500V10.500H4z" fill="none" stroke="#b9c0c8" stroke-width="1" stroke-dasharray="1.300 1.300" stroke-linejoin="round"/></svg>
<span class="t" style="left:736px;top:228.5px;font-size:13px;line-height:17px;color:#000;letter-spacing:-0.229px;">Keine Beschriftung</span>
<svg class="b" style="left:710px;top:247.5px;overflow:visible;" width="20" height="20" viewBox="0 0 24 24"><path d="M1 12L5.500 6.500H23V17.500H5.500z" fill="#b9d6a4" stroke="#86b56a" stroke-width="1" stroke-linejoin="round"/><text x="14.500" y="15" font-family="Liberation Sans" font-weight="bold" font-size="9" text-anchor="middle" fill="#3a6a3a">abc</text></svg>
<span class="t" style="left:736px;top:248.5px;font-size:13px;line-height:17px;color:#fff;letter-spacing:-0.226px;">Einzelne Beschriftungen</span>
<svg class="b" style="left:710px;top:267.5px;overflow:visible;" width="20" height="20" viewBox="0 0 24 24"><path d="M3.500 7L7.500 1.500H23.500V12H7.500z" fill="#f6de4a" stroke="#c9ad22" stroke-width="1" stroke-linejoin="round"/><text x="15.500" y="10" font-family="Liberation Sans" font-weight="bold" font-size="8.500" text-anchor="middle" fill="#4a4410">abc</text><path d="M0.500 12H18L21 17.500L18 23H0.500z" fill="#f6de4a" stroke="#c9ad22" stroke-width="1" stroke-linejoin="round"/><text x="9.500" y="20.700" font-family="Liberation Sans" font-weight="bold" font-size="8.500" text-anchor="middle" fill="#4a4410">abc</text></svg>
<span class="t" style="left:736px;top:268.5px;font-size:13px;line-height:17px;color:#000;letter-spacing:-0.158px;">Regelbasierte Beschriftung</span>
<svg class="b" style="left:710px;top:287px;overflow:visible;" width="20" height="20" viewBox="0 0 24 24"><path d="M1.500 11L5.500 5.500H22.500V16.500H5.500z" fill="#fff" stroke="#d0313a" stroke-width="1.500" stroke-linejoin="round"/><circle cx="16.500" cy="17" r="5" fill="#8ab57a" stroke="#4a6a4a" stroke-width="1.100"/></svg>
<span class="t" style="left:736px;top:288.5px;font-size:13px;line-height:17px;color:#000;letter-spacing:-0.267px;">Blockierend</span>
<div class="b" style="left:697px;top:814px;width:60px;height:26px;background:#e1e1e1;border:1px solid #adadad;"></div>
<div class="b" style="left:906px;top:814px;width:91px;height:26px;background:#e1e1e1;border:2px solid #0078d7;"></div>
<span class="t" style="left:942.5px;top:818.5px;font-size:13px;line-height:17px;color:#000;letter-spacing:-0.392px;">OK</span>
<div class="b" style="left:1006px;top:814px;width:91px;height:26px;background:#e1e1e1;border:1px solid #adadad;"></div>
<span class="t" style="left:1020.5px;top:818.5px;font-size:13px;line-height:17px;color:#000;letter-spacing:-0.098px;">Abbrechen</span>
<div class="b" style="left:1106px;top:814px;width:91px;height:26px;background:#e1e1e1;border:1px solid #adadad;"></div>
<span class="t" style="left:1121px;top:818.5px;font-size:13px;line-height:17px;color:#000;letter-spacing:-0.055px;">Anwenden</span>
<div class="b" style="left:1206px;top:814px;width:91px;height:26px;background:#e1e1e1;border:1px solid #adadad;"></div>
<span class="t" style="left:1238px;top:818.5px;font-size:13px;line-height:17px;color:#000;letter-spacing:0.198px;">Hilfe</span>
<div class="b" style="left:726px;top:799px;width:151px;height:45px;background:#ffff00;border:2px solid #000;"></div>
<span class="t" style="left:773px;top:808px;font-size:20px;line-height:26px;color:#000;font-weight:bold;letter-spacing:-0.242px;">Bild 2</span>
<div class="b" style="left:94px;top:359px;width:232px;height:47px;border:4px solid #ee1111;"></div>
<svg class="b" style="left:0px;top:0px;pointer-events:none;" width="1537" height="864" viewBox="0 0 1537 864"><path d="M326 383.5L460 367" stroke="#f20d0d" stroke-width="2.900" fill="none"/><path d="M480 363.400L452.800 360.300L459.600 367.100L455.300 373.600z" fill="#f20d0d"/><path d="M642.200 360.700C648 351 652 336 656.700 305C660 284 668 266 686 259.500" stroke="#f20d0d" stroke-width="3.300" fill="none" stroke-linecap="round"/><path d="M706.400 258.200L679.300 253.600L686 259.600L681.500 266.900z" fill="#f20d0d"/></svg>
</body></html>
